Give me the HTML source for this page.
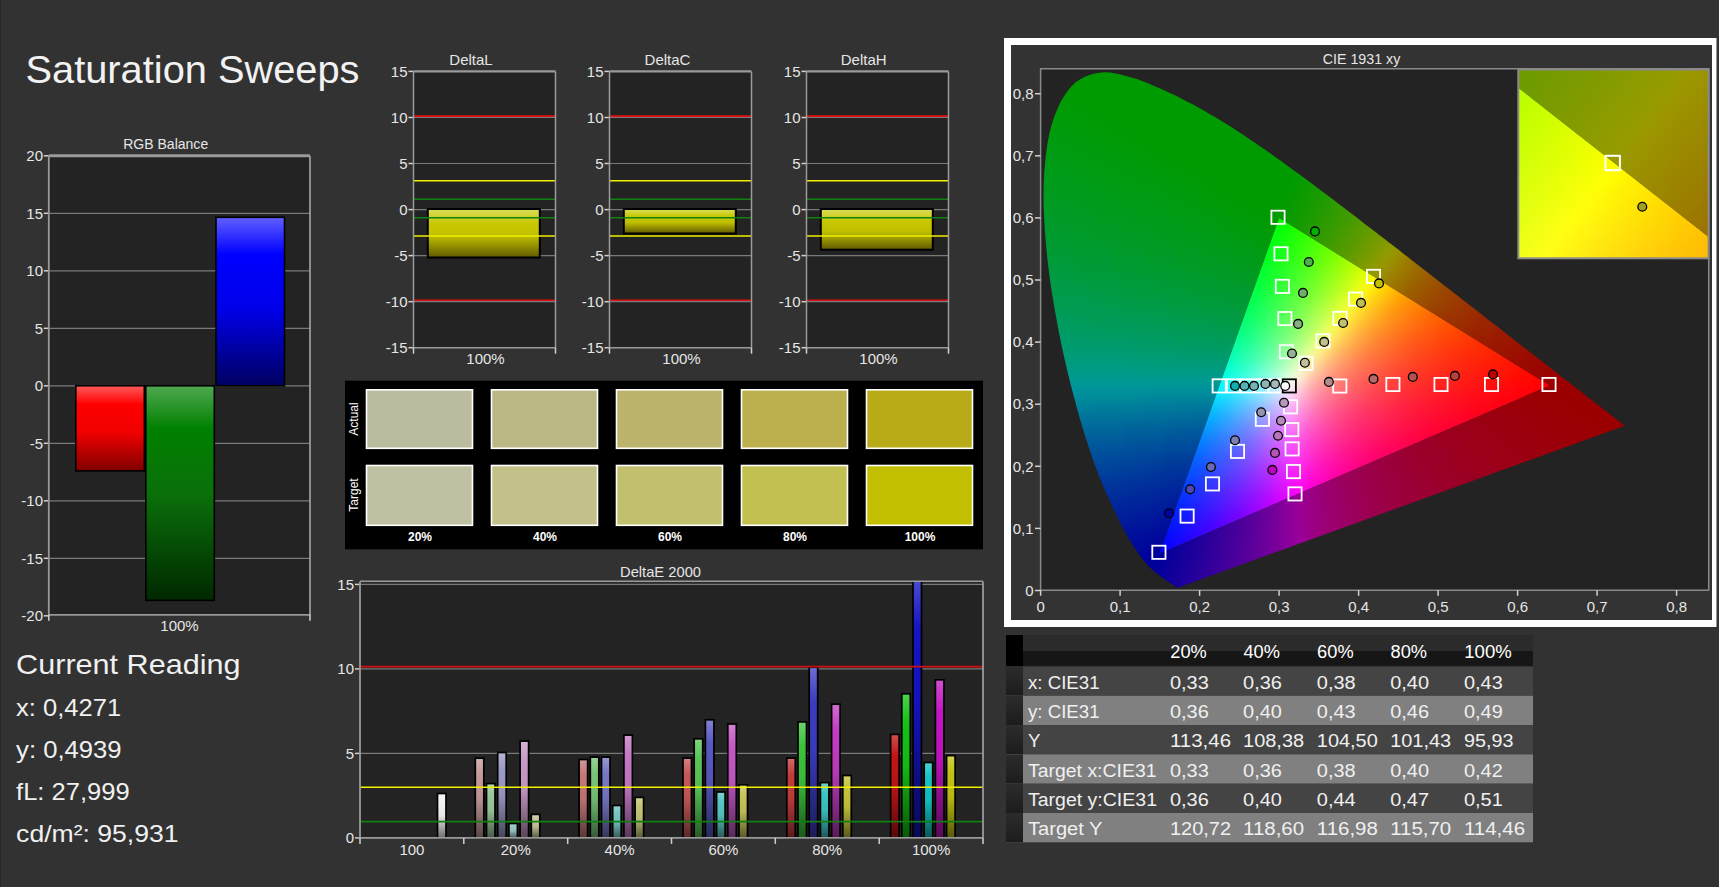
<!DOCTYPE html>
<html><head><meta charset="utf-8"><title>Saturation Sweeps</title>
<style>html,body{margin:0;padding:0;background:#323232;overflow:hidden}svg{display:block}</style></head>
<body><svg width="1719" height="887" viewBox="0 0 1719 887" font-family='"Liberation Sans", sans-serif'>
<defs><linearGradient id="gR" x1="0" y1="0" x2="0" y2="1"><stop offset="0" stop-color="#ff5a5a"/><stop offset="0.22" stop-color="#ff0000"/><stop offset="0.55" stop-color="#f00000"/><stop offset="1" stop-color="#800000"/></linearGradient><linearGradient id="gG" x1="0" y1="0" x2="0" y2="1"><stop offset="0" stop-color="#50a850"/><stop offset="0.2" stop-color="#008000"/><stop offset="0.5" stop-color="#0a700a"/><stop offset="1" stop-color="#002800"/></linearGradient><linearGradient id="gB" x1="0" y1="0" x2="0" y2="1"><stop offset="0" stop-color="#6060ff"/><stop offset="0.22" stop-color="#0000ff"/><stop offset="0.55" stop-color="#0000e8"/><stop offset="1" stop-color="#000060"/></linearGradient><linearGradient id="gLC" x1="0" y1="0" x2="0" y2="1"><stop offset="0" stop-color="#2c2c2c"/><stop offset="1" stop-color="#1c1c1c"/></linearGradient><linearGradient id="gY" x1="0" y1="0" x2="0" y2="1"><stop offset="0" stop-color="#dcdc60"/><stop offset="0.3" stop-color="#c8c800"/><stop offset="0.55" stop-color="#c0c000"/><stop offset="1" stop-color="#605800"/></linearGradient><clipPath id="deClip"><rect x="360" y="581.0" width="623" height="258.4"/></clipPath><linearGradient id="de1" x1="0" y1="0" x2="0" y2="1"><stop offset="0" stop-color="#f5f5f5"/><stop offset="0.2" stop-color="#f2f2f2"/><stop offset="0.5" stop-color="#e6e6e6"/><stop offset="1" stop-color="#6d6d6d"/></linearGradient><linearGradient id="de2" x1="0" y1="0" x2="0" y2="1"><stop offset="0" stop-color="#d4b3b3"/><stop offset="0.2" stop-color="#c69a9a"/><stop offset="0.5" stop-color="#bc9292"/><stop offset="1" stop-color="#594545"/></linearGradient><linearGradient id="de3" x1="0" y1="0" x2="0" y2="1"><stop offset="0" stop-color="#b3d4b3"/><stop offset="0.2" stop-color="#9ac69a"/><stop offset="0.5" stop-color="#92bc92"/><stop offset="1" stop-color="#455945"/></linearGradient><linearGradient id="de4" x1="0" y1="0" x2="0" y2="1"><stop offset="0" stop-color="#b3b3d4"/><stop offset="0.2" stop-color="#9a9ac6"/><stop offset="0.5" stop-color="#9292bc"/><stop offset="1" stop-color="#454559"/></linearGradient><linearGradient id="de5" x1="0" y1="0" x2="0" y2="1"><stop offset="0" stop-color="#b3d4d4"/><stop offset="0.2" stop-color="#9ac6c6"/><stop offset="0.5" stop-color="#92bcbc"/><stop offset="1" stop-color="#455959"/></linearGradient><linearGradient id="de6" x1="0" y1="0" x2="0" y2="1"><stop offset="0" stop-color="#d4b3d4"/><stop offset="0.2" stop-color="#c69ac6"/><stop offset="0.5" stop-color="#bc92bc"/><stop offset="1" stop-color="#594559"/></linearGradient><linearGradient id="de7" x1="0" y1="0" x2="0" y2="1"><stop offset="0" stop-color="#d4d4b3"/><stop offset="0.2" stop-color="#c6c69a"/><stop offset="0.5" stop-color="#bcbc92"/><stop offset="1" stop-color="#595945"/></linearGradient><linearGradient id="de8" x1="0" y1="0" x2="0" y2="1"><stop offset="0" stop-color="#d39999"/><stop offset="0.2" stop-color="#c57777"/><stop offset="0.5" stop-color="#bb7171"/><stop offset="1" stop-color="#593636"/></linearGradient><linearGradient id="de9" x1="0" y1="0" x2="0" y2="1"><stop offset="0" stop-color="#99d399"/><stop offset="0.2" stop-color="#77c577"/><stop offset="0.5" stop-color="#71bb71"/><stop offset="1" stop-color="#365936"/></linearGradient><linearGradient id="de10" x1="0" y1="0" x2="0" y2="1"><stop offset="0" stop-color="#9999d3"/><stop offset="0.2" stop-color="#7777c5"/><stop offset="0.5" stop-color="#7171bb"/><stop offset="1" stop-color="#363659"/></linearGradient><linearGradient id="de11" x1="0" y1="0" x2="0" y2="1"><stop offset="0" stop-color="#99d3d3"/><stop offset="0.2" stop-color="#77c5c5"/><stop offset="0.5" stop-color="#71bbbb"/><stop offset="1" stop-color="#365959"/></linearGradient><linearGradient id="de12" x1="0" y1="0" x2="0" y2="1"><stop offset="0" stop-color="#d399d3"/><stop offset="0.2" stop-color="#c577c5"/><stop offset="0.5" stop-color="#bb71bb"/><stop offset="1" stop-color="#593659"/></linearGradient><linearGradient id="de13" x1="0" y1="0" x2="0" y2="1"><stop offset="0" stop-color="#d3d399"/><stop offset="0.2" stop-color="#c5c577"/><stop offset="0.5" stop-color="#bbbb71"/><stop offset="1" stop-color="#595936"/></linearGradient><linearGradient id="de14" x1="0" y1="0" x2="0" y2="1"><stop offset="0" stop-color="#d38282"/><stop offset="0.2" stop-color="#c45858"/><stop offset="0.5" stop-color="#ba5454"/><stop offset="1" stop-color="#582828"/></linearGradient><linearGradient id="de15" x1="0" y1="0" x2="0" y2="1"><stop offset="0" stop-color="#82d382"/><stop offset="0.2" stop-color="#58c458"/><stop offset="0.5" stop-color="#54ba54"/><stop offset="1" stop-color="#285828"/></linearGradient><linearGradient id="de16" x1="0" y1="0" x2="0" y2="1"><stop offset="0" stop-color="#8282d3"/><stop offset="0.2" stop-color="#5858c4"/><stop offset="0.5" stop-color="#5454ba"/><stop offset="1" stop-color="#282858"/></linearGradient><linearGradient id="de17" x1="0" y1="0" x2="0" y2="1"><stop offset="0" stop-color="#82d3d3"/><stop offset="0.2" stop-color="#58c4c4"/><stop offset="0.5" stop-color="#54baba"/><stop offset="1" stop-color="#285858"/></linearGradient><linearGradient id="de18" x1="0" y1="0" x2="0" y2="1"><stop offset="0" stop-color="#d382d3"/><stop offset="0.2" stop-color="#c458c4"/><stop offset="0.5" stop-color="#ba54ba"/><stop offset="1" stop-color="#582858"/></linearGradient><linearGradient id="de19" x1="0" y1="0" x2="0" y2="1"><stop offset="0" stop-color="#d3d382"/><stop offset="0.2" stop-color="#c4c458"/><stop offset="0.5" stop-color="#baba54"/><stop offset="1" stop-color="#585828"/></linearGradient><linearGradient id="de20" x1="0" y1="0" x2="0" y2="1"><stop offset="0" stop-color="#d26d6d"/><stop offset="0.2" stop-color="#c33c3c"/><stop offset="0.5" stop-color="#b93939"/><stop offset="1" stop-color="#581b1b"/></linearGradient><linearGradient id="de21" x1="0" y1="0" x2="0" y2="1"><stop offset="0" stop-color="#6dd26d"/><stop offset="0.2" stop-color="#3cc33c"/><stop offset="0.5" stop-color="#39b939"/><stop offset="1" stop-color="#1b581b"/></linearGradient><linearGradient id="de22" x1="0" y1="0" x2="0" y2="1"><stop offset="0" stop-color="#6d6dd2"/><stop offset="0.2" stop-color="#3c3cc3"/><stop offset="0.5" stop-color="#3939b9"/><stop offset="1" stop-color="#1b1b58"/></linearGradient><linearGradient id="de23" x1="0" y1="0" x2="0" y2="1"><stop offset="0" stop-color="#6dd2d2"/><stop offset="0.2" stop-color="#3cc3c3"/><stop offset="0.5" stop-color="#39b9b9"/><stop offset="1" stop-color="#1b5858"/></linearGradient><linearGradient id="de24" x1="0" y1="0" x2="0" y2="1"><stop offset="0" stop-color="#d26dd2"/><stop offset="0.2" stop-color="#c33cc3"/><stop offset="0.5" stop-color="#b939b9"/><stop offset="1" stop-color="#581b58"/></linearGradient><linearGradient id="de25" x1="0" y1="0" x2="0" y2="1"><stop offset="0" stop-color="#d2d26d"/><stop offset="0.2" stop-color="#c3c33c"/><stop offset="0.5" stop-color="#b9b939"/><stop offset="1" stop-color="#58581b"/></linearGradient><linearGradient id="de26" x1="0" y1="0" x2="0" y2="1"><stop offset="0" stop-color="#d14f4f"/><stop offset="0.2" stop-color="#c21515"/><stop offset="0.5" stop-color="#b81313"/><stop offset="1" stop-color="#570909"/></linearGradient><linearGradient id="de27" x1="0" y1="0" x2="0" y2="1"><stop offset="0" stop-color="#4fd14f"/><stop offset="0.2" stop-color="#15c215"/><stop offset="0.5" stop-color="#13b813"/><stop offset="1" stop-color="#095709"/></linearGradient><linearGradient id="de28" x1="0" y1="0" x2="0" y2="1"><stop offset="0" stop-color="#4f4fd1"/><stop offset="0.2" stop-color="#1515c2"/><stop offset="0.5" stop-color="#1313b8"/><stop offset="1" stop-color="#090957"/></linearGradient><linearGradient id="de29" x1="0" y1="0" x2="0" y2="1"><stop offset="0" stop-color="#4fd1d1"/><stop offset="0.2" stop-color="#15c2c2"/><stop offset="0.5" stop-color="#13b8b8"/><stop offset="1" stop-color="#095757"/></linearGradient><linearGradient id="de30" x1="0" y1="0" x2="0" y2="1"><stop offset="0" stop-color="#d14fd1"/><stop offset="0.2" stop-color="#c215c2"/><stop offset="0.5" stop-color="#b813b8"/><stop offset="1" stop-color="#570957"/></linearGradient><linearGradient id="de31" x1="0" y1="0" x2="0" y2="1"><stop offset="0" stop-color="#d1d14f"/><stop offset="0.2" stop-color="#c2c215"/><stop offset="0.5" stop-color="#b8b813"/><stop offset="1" stop-color="#575709"/></linearGradient><clipPath id="hsOut"><path d="M1178.4,587.5 L1178.3,587.5 L1178.2,587.5 L1178.2,587.5 L1178.1,587.5 L1177.9,587.5 L1177.8,587.5 L1177.7,587.5 L1177.6,587.5 L1177.4,587.5 L1177.3,587.5 L1177.1,587.4 L1176.9,587.3 L1176.6,587.2 L1176.3,587.1 L1176.0,586.9 L1175.7,586.7 L1175.3,586.5 L1174.9,586.2 L1174.4,585.9 L1173.9,585.6 L1173.4,585.2 L1172.7,584.7 L1172.1,584.3 L1171.3,583.7 L1170.5,583.2 L1169.6,582.6 L1168.6,581.9 L1167.5,581.2 L1166.4,580.4 L1165.1,579.5 L1163.6,578.4 L1161.9,577.2 L1160.1,575.9 L1158.3,574.6 L1156.6,573.3 L1155.1,572.1 L1153.8,571.0 L1152.7,570.0 L1151.6,569.1 L1150.6,568.1 L1149.5,567.0 L1148.3,565.7 L1147.0,564.2 L1145.6,562.6 L1144.1,560.9 L1142.5,559.0 L1140.9,556.9 L1139.3,554.6 L1137.5,552.1 L1135.7,549.5 L1133.8,546.7 L1131.9,543.6 L1129.9,540.3 L1127.7,536.6 L1125.5,532.6 L1123.2,528.4 L1120.9,523.9 L1118.4,519.0 L1115.8,513.8 L1113.2,508.1 L1110.4,502.0 L1107.5,495.6 L1104.4,488.9 L1101.4,481.7 L1098.3,474.0 L1095.2,465.9 L1092.1,457.2 L1089.0,448.1 L1085.9,438.5 L1082.8,428.5 L1079.7,418.1 L1076.7,407.3 L1073.7,396.0 L1070.6,384.2 L1067.6,372.0 L1064.7,359.5 L1061.9,346.9 L1059.3,334.2 L1056.9,321.4 L1054.5,308.3 L1052.3,295.1 L1050.3,281.9 L1048.6,268.9 L1047.1,256.2 L1045.9,243.6 L1044.9,231.1 L1044.2,218.8 L1043.7,206.8 L1043.5,195.1 L1043.7,183.9 L1044.2,173.0 L1045.1,162.4 L1046.2,152.1 L1047.7,142.3 L1049.5,133.1 L1051.7,124.6 L1054.2,116.7 L1057.1,109.4 L1060.3,102.6 L1063.8,96.4 L1067.6,91.0 L1071.5,86.2 L1075.7,82.3 L1080.2,79.2 L1084.9,76.8 L1089.7,75.0 L1094.7,73.6 L1099.7,72.7 L1104.7,72.3 L1110.0,72.6 L1115.3,73.4 L1120.6,74.6 L1126.0,76.0 L1131.4,77.4 L1136.7,79.0 L1142.2,81.0 L1147.6,83.1 L1153.0,85.4 L1158.3,87.7 L1163.6,90.0 L1168.8,92.4 L1173.9,94.8 L1179.0,97.3 L1184.0,99.9 L1189.0,102.5 L1194.0,105.1 L1198.9,107.8 L1203.8,110.6 L1208.6,113.4 L1213.5,116.2 L1218.3,119.1 L1223.1,122.1 L1228.0,125.1 L1232.8,128.1 L1237.6,131.2 L1242.4,134.3 L1247.1,137.5 L1251.9,140.7 L1256.7,143.9 L1261.4,147.2 L1266.2,150.5 L1270.9,153.8 L1275.6,157.2 L1280.4,160.6 L1285.1,164.0 L1289.8,167.4 L1294.6,170.9 L1299.3,174.3 L1304.0,177.8 L1308.8,181.3 L1313.5,184.8 L1318.2,188.4 L1323.0,191.9 L1327.7,195.5 L1332.5,199.1 L1337.2,202.7 L1341.9,206.3 L1346.7,209.9 L1351.4,213.5 L1356.1,217.1 L1360.8,220.7 L1365.5,224.4 L1370.2,228.0 L1374.9,231.6 L1379.6,235.2 L1384.3,238.8 L1389.0,242.4 L1393.7,246.0 L1398.3,249.6 L1402.9,253.2 L1407.5,256.8 L1412.1,260.4 L1416.7,263.9 L1421.2,267.5 L1425.8,271.0 L1430.3,274.5 L1434.8,278.0 L1439.2,281.5 L1443.6,284.9 L1448.0,288.3 L1452.4,291.7 L1456.7,295.1 L1461.0,298.5 L1465.3,301.8 L1469.5,305.1 L1473.7,308.3 L1477.9,311.5 L1482.0,314.7 L1486.0,317.9 L1490.0,321.0 L1494.0,324.1 L1497.9,327.1 L1501.7,330.1 L1505.5,333.0 L1509.2,335.9 L1512.9,338.8 L1516.4,341.6 L1519.9,344.3 L1523.3,346.9 L1526.6,349.5 L1529.8,352.0 L1533.0,354.4 L1536.0,356.8 L1539.1,359.2 L1542.0,361.5 L1545.0,363.8 L1547.8,366.0 L1550.6,368.1 L1553.3,370.3 L1555.9,372.3 L1558.3,374.2 L1560.6,375.9 L1562.7,377.5 L1564.9,379.2 L1567.2,381.0 L1569.9,383.1 L1573.0,385.5 L1576.5,388.2 L1580.2,391.1 L1583.8,394.0 L1587.3,396.7 L1590.3,399.0 L1593.0,401.1 L1595.4,403.0 L1597.6,404.7 L1599.6,406.2 L1601.5,407.7 L1603.4,409.2 L1605.1,410.5 L1606.8,411.8 L1608.3,413.0 L1609.7,414.1 L1611.0,415.1 L1612.2,416.1 L1613.3,416.9 L1614.4,417.7 L1615.3,418.5 L1616.2,419.1 L1617.0,419.8 L1617.8,420.3 L1618.4,420.9 L1619.0,421.3 L1619.5,421.7 L1620.0,422.1 L1620.5,422.5 L1620.9,422.8 L1621.4,423.2 L1621.9,423.6 L1622.4,424.0 L1622.9,424.3 L1623.3,424.7 L1623.7,424.9 L1623.9,425.2 L1624.2,425.3 L1624.3,425.5 L1624.5,425.6 L1624.6,425.7 L1624.7,425.7Z M1549.4,385.6 L1279.1,217.9 L1159.8,553.2Z" clip-rule="evenodd"/></clipPath><clipPath id="triC"><path d="M1549.4,385.6 L1279.1,217.9 L1159.8,553.2Z"/></clipPath><filter id="bl" x="-5%" y="-5%" width="110%" height="110%" color-interpolation-filters="sRGB"><feGaussianBlur stdDeviation="5"/></filter><clipPath id="insU"><path d="M1518.3,69.5 H1708.6 V237 L1518.3,87.8 Z"/></clipPath><clipPath id="insL"><path d="M1518.3,87.8 L1708.6,237 V258.3 H1518.3 Z"/></clipPath></defs>
<rect x="0" y="0" width="1719" height="887" fill="#323232"/>
<rect x="0" y="0" width="1" height="887" fill="#262626"/>
<text x="25.5" y="82.6" font-size="39" textLength="334" lengthAdjust="spacingAndGlyphs" fill="#f2f2f2">Saturation Sweeps</text>
<rect x="48.8" y="155.8" width="261.2" height="460.0" fill="#232323"/>
<line x1="43.8" y1="155.8" x2="48.8" y2="155.8" stroke="#d0d0d0" stroke-width="1.5"/>
<text x="43.0" y="161.0" font-size="15" text-anchor="end" fill="#e6e6e6">20</text>
<line x1="48.8" y1="213.3" x2="310.0" y2="213.3" stroke="#7a7a7a" stroke-width="1.2"/>
<line x1="43.8" y1="213.3" x2="48.8" y2="213.3" stroke="#d0d0d0" stroke-width="1.5"/>
<text x="43.0" y="218.5" font-size="15" text-anchor="end" fill="#e6e6e6">15</text>
<line x1="48.8" y1="270.8" x2="310.0" y2="270.8" stroke="#7a7a7a" stroke-width="1.2"/>
<line x1="43.8" y1="270.8" x2="48.8" y2="270.8" stroke="#d0d0d0" stroke-width="1.5"/>
<text x="43.0" y="276.0" font-size="15" text-anchor="end" fill="#e6e6e6">10</text>
<line x1="48.8" y1="328.3" x2="310.0" y2="328.3" stroke="#7a7a7a" stroke-width="1.2"/>
<line x1="43.8" y1="328.3" x2="48.8" y2="328.3" stroke="#d0d0d0" stroke-width="1.5"/>
<text x="43.0" y="333.5" font-size="15" text-anchor="end" fill="#e6e6e6">5</text>
<line x1="48.8" y1="385.8" x2="310.0" y2="385.8" stroke="#7a7a7a" stroke-width="1.2"/>
<line x1="43.8" y1="385.8" x2="48.8" y2="385.8" stroke="#d0d0d0" stroke-width="1.5"/>
<text x="43.0" y="391.0" font-size="15" text-anchor="end" fill="#e6e6e6">0</text>
<line x1="48.8" y1="443.3" x2="310.0" y2="443.3" stroke="#7a7a7a" stroke-width="1.2"/>
<line x1="43.8" y1="443.3" x2="48.8" y2="443.3" stroke="#d0d0d0" stroke-width="1.5"/>
<text x="43.0" y="448.5" font-size="15" text-anchor="end" fill="#e6e6e6">-5</text>
<line x1="48.8" y1="500.8" x2="310.0" y2="500.8" stroke="#7a7a7a" stroke-width="1.2"/>
<line x1="43.8" y1="500.8" x2="48.8" y2="500.8" stroke="#d0d0d0" stroke-width="1.5"/>
<text x="43.0" y="506.0" font-size="15" text-anchor="end" fill="#e6e6e6">-10</text>
<line x1="48.8" y1="558.3" x2="310.0" y2="558.3" stroke="#7a7a7a" stroke-width="1.2"/>
<line x1="43.8" y1="558.3" x2="48.8" y2="558.3" stroke="#d0d0d0" stroke-width="1.5"/>
<text x="43.0" y="563.5" font-size="15" text-anchor="end" fill="#e6e6e6">-15</text>
<line x1="43.8" y1="615.8" x2="48.8" y2="615.8" stroke="#d0d0d0" stroke-width="1.5"/>
<text x="43.0" y="621.0" font-size="15" text-anchor="end" fill="#e6e6e6">-20</text>
<rect x="75.8" y="385.8" width="68.5" height="85.1" fill="url(#gR)" stroke="#000" stroke-width="1.6"/>
<rect x="145.8" y="385.8" width="68.5" height="214.5" fill="url(#gG)" stroke="#000" stroke-width="1.6"/>
<rect x="216.0" y="217.3" width="68.5" height="168.5" fill="url(#gB)" stroke="#000" stroke-width="1.6"/>
<line x1="48.8" y1="155.8" x2="310.0" y2="155.8" stroke="#9a9a9a" stroke-width="3"/>
<line x1="48.8" y1="155.8" x2="48.8" y2="615.8" stroke="#9a9a9a" stroke-width="1.8"/>
<line x1="310.0" y1="155.8" x2="310.0" y2="615.8" stroke="#9a9a9a" stroke-width="1.8"/>
<line x1="48.8" y1="614.8" x2="310.0" y2="614.8" stroke="#9a9a9a" stroke-width="1.8"/>
<line x1="48.8" y1="614.8" x2="48.8" y2="620.8" stroke="#d0d0d0" stroke-width="1.5"/>
<line x1="310.0" y1="614.8" x2="310.0" y2="620.8" stroke="#d0d0d0" stroke-width="1.5"/>
<text x="165.7" y="148.8" font-size="15" text-anchor="middle" textLength="85" lengthAdjust="spacingAndGlyphs" fill="#e6e6e6">RGB Balance</text>
<text x="179.5" y="631.0" font-size="15" text-anchor="middle" fill="#e6e6e6">100%</text>
<rect x="413.5" y="71.4" width="142.0" height="276.3" fill="#232323"/>
<line x1="408.5" y1="71.4" x2="413.5" y2="71.4" stroke="#d0d0d0" stroke-width="1.5"/>
<text x="407.5" y="76.6" font-size="15" text-anchor="end" fill="#e6e6e6">15</text>
<line x1="413.5" y1="117.5" x2="555.5" y2="117.5" stroke="#7a7a7a" stroke-width="1.2"/>
<line x1="408.5" y1="117.5" x2="413.5" y2="117.5" stroke="#d0d0d0" stroke-width="1.5"/>
<text x="407.5" y="122.7" font-size="15" text-anchor="end" fill="#e6e6e6">10</text>
<line x1="413.5" y1="163.5" x2="555.5" y2="163.5" stroke="#7a7a7a" stroke-width="1.2"/>
<line x1="408.5" y1="163.5" x2="413.5" y2="163.5" stroke="#d0d0d0" stroke-width="1.5"/>
<text x="407.5" y="168.7" font-size="15" text-anchor="end" fill="#e6e6e6">5</text>
<line x1="413.5" y1="209.6" x2="555.5" y2="209.6" stroke="#7a7a7a" stroke-width="1.2"/>
<line x1="408.5" y1="209.6" x2="413.5" y2="209.6" stroke="#d0d0d0" stroke-width="1.5"/>
<text x="407.5" y="214.8" font-size="15" text-anchor="end" fill="#e6e6e6">0</text>
<line x1="413.5" y1="255.6" x2="555.5" y2="255.6" stroke="#7a7a7a" stroke-width="1.2"/>
<line x1="408.5" y1="255.6" x2="413.5" y2="255.6" stroke="#d0d0d0" stroke-width="1.5"/>
<text x="407.5" y="260.8" font-size="15" text-anchor="end" fill="#e6e6e6">-5</text>
<line x1="413.5" y1="301.7" x2="555.5" y2="301.7" stroke="#7a7a7a" stroke-width="1.2"/>
<line x1="408.5" y1="301.7" x2="413.5" y2="301.7" stroke="#d0d0d0" stroke-width="1.5"/>
<text x="407.5" y="306.9" font-size="15" text-anchor="end" fill="#e6e6e6">-10</text>
<line x1="408.5" y1="347.7" x2="413.5" y2="347.7" stroke="#d0d0d0" stroke-width="1.5"/>
<text x="407.5" y="352.9" font-size="15" text-anchor="end" fill="#e6e6e6">-15</text>
<rect x="427.8" y="209.0" width="112" height="48.5" fill="url(#gY)" stroke="#000" stroke-width="2"/>
<line x1="413.5" y1="116.1" x2="555.5" y2="116.1" stroke="#e01010" stroke-width="1.6"/>
<line x1="413.5" y1="300.3" x2="555.5" y2="300.3" stroke="#e01010" stroke-width="1.6"/>
<line x1="413.5" y1="180.8" x2="555.5" y2="180.8" stroke="#f0f000" stroke-width="1.5"/>
<line x1="413.5" y1="236.1" x2="555.5" y2="236.1" stroke="#f0f000" stroke-width="1.5"/>
<line x1="413.5" y1="199.2" x2="555.5" y2="199.2" stroke="#108010" stroke-width="1.6"/>
<line x1="413.5" y1="217.7" x2="555.5" y2="217.7" stroke="#108010" stroke-width="1.6"/>
<line x1="413.5" y1="71.4" x2="555.5" y2="71.4" stroke="#9a9a9a" stroke-width="2.3"/>
<line x1="413.5" y1="71.4" x2="413.5" y2="347.7" stroke="#9a9a9a" stroke-width="1.5"/>
<line x1="555.5" y1="71.4" x2="555.5" y2="347.7" stroke="#9a9a9a" stroke-width="1.5"/>
<line x1="413.5" y1="347.7" x2="555.5" y2="347.7" stroke="#9a9a9a" stroke-width="1.5"/>
<line x1="413.5" y1="347.7" x2="413.5" y2="353.7" stroke="#d0d0d0" stroke-width="1.5"/>
<line x1="555.5" y1="347.7" x2="555.5" y2="353.7" stroke="#d0d0d0" stroke-width="1.5"/>
<text x="471.0" y="64.5" font-size="15" text-anchor="middle" fill="#e6e6e6">DeltaL</text>
<text x="485.5" y="363.5" font-size="15" text-anchor="middle" fill="#e6e6e6">100%</text>
<rect x="609.5" y="71.4" width="142.0" height="276.3" fill="#232323"/>
<line x1="604.5" y1="71.4" x2="609.5" y2="71.4" stroke="#d0d0d0" stroke-width="1.5"/>
<text x="603.5" y="76.6" font-size="15" text-anchor="end" fill="#e6e6e6">15</text>
<line x1="609.5" y1="117.5" x2="751.5" y2="117.5" stroke="#7a7a7a" stroke-width="1.2"/>
<line x1="604.5" y1="117.5" x2="609.5" y2="117.5" stroke="#d0d0d0" stroke-width="1.5"/>
<text x="603.5" y="122.7" font-size="15" text-anchor="end" fill="#e6e6e6">10</text>
<line x1="609.5" y1="163.5" x2="751.5" y2="163.5" stroke="#7a7a7a" stroke-width="1.2"/>
<line x1="604.5" y1="163.5" x2="609.5" y2="163.5" stroke="#d0d0d0" stroke-width="1.5"/>
<text x="603.5" y="168.7" font-size="15" text-anchor="end" fill="#e6e6e6">5</text>
<line x1="609.5" y1="209.6" x2="751.5" y2="209.6" stroke="#7a7a7a" stroke-width="1.2"/>
<line x1="604.5" y1="209.6" x2="609.5" y2="209.6" stroke="#d0d0d0" stroke-width="1.5"/>
<text x="603.5" y="214.8" font-size="15" text-anchor="end" fill="#e6e6e6">0</text>
<line x1="609.5" y1="255.6" x2="751.5" y2="255.6" stroke="#7a7a7a" stroke-width="1.2"/>
<line x1="604.5" y1="255.6" x2="609.5" y2="255.6" stroke="#d0d0d0" stroke-width="1.5"/>
<text x="603.5" y="260.8" font-size="15" text-anchor="end" fill="#e6e6e6">-5</text>
<line x1="609.5" y1="301.7" x2="751.5" y2="301.7" stroke="#7a7a7a" stroke-width="1.2"/>
<line x1="604.5" y1="301.7" x2="609.5" y2="301.7" stroke="#d0d0d0" stroke-width="1.5"/>
<text x="603.5" y="306.9" font-size="15" text-anchor="end" fill="#e6e6e6">-10</text>
<line x1="604.5" y1="347.7" x2="609.5" y2="347.7" stroke="#d0d0d0" stroke-width="1.5"/>
<text x="603.5" y="352.9" font-size="15" text-anchor="end" fill="#e6e6e6">-15</text>
<rect x="623.8" y="209.0" width="112" height="24.5" fill="url(#gY)" stroke="#000" stroke-width="2"/>
<line x1="609.5" y1="116.1" x2="751.5" y2="116.1" stroke="#e01010" stroke-width="1.6"/>
<line x1="609.5" y1="300.3" x2="751.5" y2="300.3" stroke="#e01010" stroke-width="1.6"/>
<line x1="609.5" y1="180.8" x2="751.5" y2="180.8" stroke="#f0f000" stroke-width="1.5"/>
<line x1="609.5" y1="236.1" x2="751.5" y2="236.1" stroke="#f0f000" stroke-width="1.5"/>
<line x1="609.5" y1="199.2" x2="751.5" y2="199.2" stroke="#108010" stroke-width="1.6"/>
<line x1="609.5" y1="217.7" x2="751.5" y2="217.7" stroke="#108010" stroke-width="1.6"/>
<line x1="609.5" y1="71.4" x2="751.5" y2="71.4" stroke="#9a9a9a" stroke-width="2.3"/>
<line x1="609.5" y1="71.4" x2="609.5" y2="347.7" stroke="#9a9a9a" stroke-width="1.5"/>
<line x1="751.5" y1="71.4" x2="751.5" y2="347.7" stroke="#9a9a9a" stroke-width="1.5"/>
<line x1="609.5" y1="347.7" x2="751.5" y2="347.7" stroke="#9a9a9a" stroke-width="1.5"/>
<line x1="609.5" y1="347.7" x2="609.5" y2="353.7" stroke="#d0d0d0" stroke-width="1.5"/>
<line x1="751.5" y1="347.7" x2="751.5" y2="353.7" stroke="#d0d0d0" stroke-width="1.5"/>
<text x="667.5" y="64.5" font-size="15" text-anchor="middle" fill="#e6e6e6">DeltaC</text>
<text x="681.5" y="363.5" font-size="15" text-anchor="middle" fill="#e6e6e6">100%</text>
<rect x="806.5" y="71.4" width="142.0" height="276.3" fill="#232323"/>
<line x1="801.5" y1="71.4" x2="806.5" y2="71.4" stroke="#d0d0d0" stroke-width="1.5"/>
<text x="800.5" y="76.6" font-size="15" text-anchor="end" fill="#e6e6e6">15</text>
<line x1="806.5" y1="117.5" x2="948.5" y2="117.5" stroke="#7a7a7a" stroke-width="1.2"/>
<line x1="801.5" y1="117.5" x2="806.5" y2="117.5" stroke="#d0d0d0" stroke-width="1.5"/>
<text x="800.5" y="122.7" font-size="15" text-anchor="end" fill="#e6e6e6">10</text>
<line x1="806.5" y1="163.5" x2="948.5" y2="163.5" stroke="#7a7a7a" stroke-width="1.2"/>
<line x1="801.5" y1="163.5" x2="806.5" y2="163.5" stroke="#d0d0d0" stroke-width="1.5"/>
<text x="800.5" y="168.7" font-size="15" text-anchor="end" fill="#e6e6e6">5</text>
<line x1="806.5" y1="209.6" x2="948.5" y2="209.6" stroke="#7a7a7a" stroke-width="1.2"/>
<line x1="801.5" y1="209.6" x2="806.5" y2="209.6" stroke="#d0d0d0" stroke-width="1.5"/>
<text x="800.5" y="214.8" font-size="15" text-anchor="end" fill="#e6e6e6">0</text>
<line x1="806.5" y1="255.6" x2="948.5" y2="255.6" stroke="#7a7a7a" stroke-width="1.2"/>
<line x1="801.5" y1="255.6" x2="806.5" y2="255.6" stroke="#d0d0d0" stroke-width="1.5"/>
<text x="800.5" y="260.8" font-size="15" text-anchor="end" fill="#e6e6e6">-5</text>
<line x1="806.5" y1="301.7" x2="948.5" y2="301.7" stroke="#7a7a7a" stroke-width="1.2"/>
<line x1="801.5" y1="301.7" x2="806.5" y2="301.7" stroke="#d0d0d0" stroke-width="1.5"/>
<text x="800.5" y="306.9" font-size="15" text-anchor="end" fill="#e6e6e6">-10</text>
<line x1="801.5" y1="347.7" x2="806.5" y2="347.7" stroke="#d0d0d0" stroke-width="1.5"/>
<text x="800.5" y="352.9" font-size="15" text-anchor="end" fill="#e6e6e6">-15</text>
<rect x="820.8" y="209.0" width="112" height="40.7" fill="url(#gY)" stroke="#000" stroke-width="2"/>
<line x1="806.5" y1="116.1" x2="948.5" y2="116.1" stroke="#e01010" stroke-width="1.6"/>
<line x1="806.5" y1="300.3" x2="948.5" y2="300.3" stroke="#e01010" stroke-width="1.6"/>
<line x1="806.5" y1="180.8" x2="948.5" y2="180.8" stroke="#f0f000" stroke-width="1.5"/>
<line x1="806.5" y1="236.1" x2="948.5" y2="236.1" stroke="#f0f000" stroke-width="1.5"/>
<line x1="806.5" y1="199.2" x2="948.5" y2="199.2" stroke="#108010" stroke-width="1.6"/>
<line x1="806.5" y1="217.7" x2="948.5" y2="217.7" stroke="#108010" stroke-width="1.6"/>
<line x1="806.5" y1="71.4" x2="948.5" y2="71.4" stroke="#9a9a9a" stroke-width="2.3"/>
<line x1="806.5" y1="71.4" x2="806.5" y2="347.7" stroke="#9a9a9a" stroke-width="1.5"/>
<line x1="948.5" y1="71.4" x2="948.5" y2="347.7" stroke="#9a9a9a" stroke-width="1.5"/>
<line x1="806.5" y1="347.7" x2="948.5" y2="347.7" stroke="#9a9a9a" stroke-width="1.5"/>
<line x1="806.5" y1="347.7" x2="806.5" y2="353.7" stroke="#d0d0d0" stroke-width="1.5"/>
<line x1="948.5" y1="347.7" x2="948.5" y2="353.7" stroke="#d0d0d0" stroke-width="1.5"/>
<text x="863.7" y="64.5" font-size="15" text-anchor="middle" fill="#e6e6e6">DeltaH</text>
<text x="878.5" y="363.5" font-size="15" text-anchor="middle" fill="#e6e6e6">100%</text>
<rect x="345.0" y="380.7" width="638.0" height="168.7" fill="#000"/>
<rect x="366.5" y="389.8" width="106" height="58.5" fill="#bbbb9f" stroke="#fff" stroke-width="1.6"/>
<rect x="366.5" y="465.5" width="106" height="59.8" fill="#c0c0a3" stroke="#fff" stroke-width="1.6"/>
<text x="420.0" y="541.0" font-size="12" text-anchor="middle" font-weight="bold" fill="#fff">20%</text>
<rect x="491.5" y="389.8" width="106" height="58.5" fill="#bbb886" stroke="#fff" stroke-width="1.6"/>
<rect x="491.5" y="465.5" width="106" height="59.8" fill="#c3c189" stroke="#fff" stroke-width="1.6"/>
<text x="545.0" y="541.0" font-size="12" text-anchor="middle" font-weight="bold" fill="#fff">40%</text>
<rect x="616.5" y="389.8" width="106" height="58.5" fill="#bcb46c" stroke="#fff" stroke-width="1.6"/>
<rect x="616.5" y="465.5" width="106" height="59.8" fill="#c2bf6e" stroke="#fff" stroke-width="1.6"/>
<text x="670.0" y="541.0" font-size="12" text-anchor="middle" font-weight="bold" fill="#fff">60%</text>
<rect x="741.5" y="389.8" width="106" height="58.5" fill="#bcb04e" stroke="#fff" stroke-width="1.6"/>
<rect x="741.5" y="465.5" width="106" height="59.8" fill="#c2c050" stroke="#fff" stroke-width="1.6"/>
<text x="795.0" y="541.0" font-size="12" text-anchor="middle" font-weight="bold" fill="#fff">80%</text>
<rect x="866.5" y="389.8" width="106" height="58.5" fill="#b8ab17" stroke="#fff" stroke-width="1.6"/>
<rect x="866.5" y="465.5" width="106" height="59.8" fill="#c2bf00" stroke="#fff" stroke-width="1.6"/>
<text x="920.0" y="541.0" font-size="12" text-anchor="middle" font-weight="bold" fill="#fff">100%</text>
<text transform="translate(358.3,419) rotate(-90)" font-size="12" text-anchor="middle" fill="#fff">Actual</text>
<text transform="translate(358.3,495) rotate(-90)" font-size="12" text-anchor="middle" fill="#fff">Target</text>
<rect x="360.0" y="582.5" width="623.0" height="255.4" fill="#232323"/>
<line x1="360.0" y1="584.4" x2="983.0" y2="584.4" stroke="#7a7a7a" stroke-width="1.2"/>
<line x1="355.0" y1="584.4" x2="360.0" y2="584.4" stroke="#d0d0d0" stroke-width="1.5"/>
<text x="354.0" y="589.6" font-size="15" text-anchor="end" fill="#e6e6e6">15</text>
<line x1="360.0" y1="668.9" x2="983.0" y2="668.9" stroke="#7a7a7a" stroke-width="1.2"/>
<line x1="355.0" y1="668.9" x2="360.0" y2="668.9" stroke="#d0d0d0" stroke-width="1.5"/>
<text x="354.0" y="674.1" font-size="15" text-anchor="end" fill="#e6e6e6">10</text>
<line x1="360.0" y1="753.4" x2="983.0" y2="753.4" stroke="#7a7a7a" stroke-width="1.2"/>
<line x1="355.0" y1="753.4" x2="360.0" y2="753.4" stroke="#d0d0d0" stroke-width="1.5"/>
<text x="354.0" y="758.6" font-size="15" text-anchor="end" fill="#e6e6e6">5</text>
<line x1="355.0" y1="837.9" x2="360.0" y2="837.9" stroke="#d0d0d0" stroke-width="1.5"/>
<text x="354.0" y="843.1" font-size="15" text-anchor="end" fill="#e6e6e6">0</text>
<rect clip-path="url(#deClip)"  x="437.5" y="793.5" width="8.5" height="44.4" fill="url(#de1)" stroke="#000" stroke-width="1.7"/>
<rect clip-path="url(#deClip)"  x="475.3" y="758.2" width="8.5" height="79.7" fill="url(#de2)" stroke="#000" stroke-width="1.7"/>
<rect clip-path="url(#deClip)"  x="486.5" y="783.6" width="8.5" height="54.3" fill="url(#de3)" stroke="#000" stroke-width="1.7"/>
<rect clip-path="url(#deClip)"  x="497.7" y="752.5" width="8.5" height="85.4" fill="url(#de4)" stroke="#000" stroke-width="1.7"/>
<rect clip-path="url(#deClip)"  x="508.9" y="823.5" width="8.5" height="14.4" fill="url(#de5)" stroke="#000" stroke-width="1.7"/>
<rect clip-path="url(#deClip)"  x="520.1" y="741.1" width="8.5" height="96.8" fill="url(#de6)" stroke="#000" stroke-width="1.7"/>
<rect clip-path="url(#deClip)"  x="531.3" y="814.4" width="8.5" height="23.5" fill="url(#de7)" stroke="#000" stroke-width="1.7"/>
<rect clip-path="url(#deClip)"  x="579.1" y="759.5" width="8.5" height="78.4" fill="url(#de8)" stroke="#000" stroke-width="1.7"/>
<rect clip-path="url(#deClip)"  x="590.3" y="757.1" width="8.5" height="80.8" fill="url(#de9)" stroke="#000" stroke-width="1.7"/>
<rect clip-path="url(#deClip)"  x="601.5" y="757.1" width="8.5" height="80.8" fill="url(#de10)" stroke="#000" stroke-width="1.7"/>
<rect clip-path="url(#deClip)"  x="612.7" y="805.5" width="8.5" height="32.4" fill="url(#de11)" stroke="#000" stroke-width="1.7"/>
<rect clip-path="url(#deClip)"  x="623.9" y="735.1" width="8.5" height="102.8" fill="url(#de12)" stroke="#000" stroke-width="1.7"/>
<rect clip-path="url(#deClip)"  x="635.1" y="797.4" width="8.5" height="40.5" fill="url(#de13)" stroke="#000" stroke-width="1.7"/>
<rect clip-path="url(#deClip)"  x="683.0" y="758.1" width="8.5" height="79.8" fill="url(#de14)" stroke="#000" stroke-width="1.7"/>
<rect clip-path="url(#deClip)"  x="694.2" y="738.8" width="8.5" height="99.2" fill="url(#de15)" stroke="#000" stroke-width="1.7"/>
<rect clip-path="url(#deClip)"  x="705.4" y="719.8" width="8.5" height="118.2" fill="url(#de16)" stroke="#000" stroke-width="1.7"/>
<rect clip-path="url(#deClip)"  x="716.6" y="792.0" width="8.5" height="45.9" fill="url(#de17)" stroke="#000" stroke-width="1.7"/>
<rect clip-path="url(#deClip)"  x="727.8" y="724.0" width="8.5" height="113.9" fill="url(#de18)" stroke="#000" stroke-width="1.7"/>
<rect clip-path="url(#deClip)"  x="739.0" y="784.8" width="8.5" height="53.1" fill="url(#de19)" stroke="#000" stroke-width="1.7"/>
<rect clip-path="url(#deClip)"  x="786.8" y="758.1" width="8.5" height="79.8" fill="url(#de20)" stroke="#000" stroke-width="1.7"/>
<rect clip-path="url(#deClip)"  x="798.0" y="721.9" width="8.5" height="116.0" fill="url(#de21)" stroke="#000" stroke-width="1.7"/>
<rect clip-path="url(#deClip)"  x="809.2" y="667.2" width="8.5" height="170.7" fill="url(#de22)" stroke="#000" stroke-width="1.7"/>
<rect clip-path="url(#deClip)"  x="820.4" y="782.6" width="8.5" height="55.3" fill="url(#de23)" stroke="#000" stroke-width="1.7"/>
<rect clip-path="url(#deClip)"  x="831.6" y="704.2" width="8.5" height="133.7" fill="url(#de24)" stroke="#000" stroke-width="1.7"/>
<rect clip-path="url(#deClip)"  x="842.8" y="775.5" width="8.5" height="62.4" fill="url(#de25)" stroke="#000" stroke-width="1.7"/>
<rect clip-path="url(#deClip)"  x="890.6" y="734.4" width="8.5" height="103.5" fill="url(#de26)" stroke="#000" stroke-width="1.7"/>
<rect clip-path="url(#deClip)"  x="901.8" y="693.8" width="8.5" height="144.2" fill="url(#de27)" stroke="#000" stroke-width="1.7"/>
<rect clip-path="url(#deClip)"  x="913.0" y="575.9" width="8.5" height="262.0" fill="url(#de28)" stroke="#000" stroke-width="1.7"/>
<rect clip-path="url(#deClip)"  x="924.2" y="762.5" width="8.5" height="75.4" fill="url(#de29)" stroke="#000" stroke-width="1.7"/>
<rect clip-path="url(#deClip)"  x="935.4" y="679.8" width="8.5" height="158.2" fill="url(#de30)" stroke="#000" stroke-width="1.7"/>
<rect clip-path="url(#deClip)"  x="946.6" y="755.6" width="8.5" height="82.3" fill="url(#de31)" stroke="#000" stroke-width="1.7"/>
<line x1="360.0" y1="666.7" x2="983.0" y2="666.7" stroke="#d01010" stroke-width="1.8"/>
<line x1="360.0" y1="787.2" x2="983.0" y2="787.2" stroke="#f0f000" stroke-width="1.5"/>
<line x1="360.0" y1="821.6" x2="983.0" y2="821.6" stroke="#108010" stroke-width="1.8"/>
<line x1="360.0" y1="581.3" x2="983.0" y2="581.3" stroke="#9a9a9a" stroke-width="1.5"/>
<line x1="360.0" y1="581.5" x2="360.0" y2="837.9" stroke="#9a9a9a" stroke-width="1.8"/>
<line x1="983.0" y1="581.5" x2="983.0" y2="837.9" stroke="#9a9a9a" stroke-width="1.8"/>
<line x1="360.0" y1="837.9" x2="983.0" y2="837.9" stroke="#9a9a9a" stroke-width="1.8"/>
<line x1="360.0" y1="837.9" x2="360.0" y2="843.9" stroke="#d0d0d0" stroke-width="1.5"/>
<line x1="463.8" y1="837.9" x2="463.8" y2="843.9" stroke="#d0d0d0" stroke-width="1.5"/>
<line x1="567.7" y1="837.9" x2="567.7" y2="843.9" stroke="#d0d0d0" stroke-width="1.5"/>
<line x1="671.5" y1="837.9" x2="671.5" y2="843.9" stroke="#d0d0d0" stroke-width="1.5"/>
<line x1="775.3" y1="837.9" x2="775.3" y2="843.9" stroke="#d0d0d0" stroke-width="1.5"/>
<line x1="879.2" y1="837.9" x2="879.2" y2="843.9" stroke="#d0d0d0" stroke-width="1.5"/>
<line x1="983.0" y1="837.9" x2="983.0" y2="843.9" stroke="#d0d0d0" stroke-width="1.5"/>
<text x="411.9" y="855.0" font-size="15" text-anchor="middle" fill="#e6e6e6">100</text>
<text x="515.8" y="855.0" font-size="15" text-anchor="middle" fill="#e6e6e6">20%</text>
<text x="619.6" y="855.0" font-size="15" text-anchor="middle" fill="#e6e6e6">40%</text>
<text x="723.4" y="855.0" font-size="15" text-anchor="middle" fill="#e6e6e6">60%</text>
<text x="827.2" y="855.0" font-size="15" text-anchor="middle" fill="#e6e6e6">80%</text>
<text x="931.1" y="855.0" font-size="15" text-anchor="middle" fill="#e6e6e6">100%</text>
<text x="660.5" y="576.9" font-size="15" text-anchor="middle" textLength="81" lengthAdjust="spacingAndGlyphs" fill="#e6e6e6">DeltaE 2000</text>
<rect x="1004" y="38" width="712.5" height="589" fill="#ffffff"/><rect x="1011" y="45" width="701" height="575" fill="#333333"/><rect x="1040.6" y="68.8" width="668" height="521.5" fill="#232323"/><text x="1361.5" y="64" font-size="15" text-anchor="middle" textLength="77.7" lengthAdjust="spacingAndGlyphs" fill="#e6e6e6">CIE 1931 xy</text><g clip-path="url(#hsOut)"><g filter="url(#bl)"><path fill="#009b00" d="M1064 52h90v10h-90zM1054 62h120v10h-120zM1044 72h150v10h-150zM1054 82h160v10h-160zM1064 92h170v10h-170zM1084 102h160v10h-160zM1104 112h160v10h-160zM1114 122h160v10h-160zM1134 132h160v10h-160zM1154 142h150v10h-150zM1164 152h140v10h-140zM1184 162h120v10h-120zM1204 172h90v10h-90zM1214 182h80v10h-80zM1234 192h60v10h-60zM1254 202h30v10h-30zM1264 212h20v10h-20z"/><path fill="#009b05" d="M1044 82h10v10h-10zM1034 92h30v10h-30zM1044 102h40v10h-40zM1064 112h40v10h-40zM1084 122h30v10h-30zM1094 132h40v10h-40zM1114 142h40v10h-40zM1134 152h30v10h-30zM1154 162h30v10h-30zM1174 172h30v10h-30zM1194 182h20v10h-20zM1204 192h30v10h-30zM1224 202h30v10h-30zM1244 212h20v10h-20zM1264 222h20v10h-20z"/><path fill="#009b0a" d="M1034 102h10v10h-10zM1024 112h40v10h-40zM1044 122h40v10h-40zM1064 132h30v10h-30zM1084 142h30v10h-30zM1104 152h30v10h-30zM1124 162h30v10h-30zM1144 172h30v10h-30zM1164 182h30v10h-30zM1184 192h20v10h-20zM1204 202h20v10h-20zM1224 212h20v10h-20zM1234 222h30v10h-30zM1254 232h20v10h-20z"/><path fill="#009b0f" d="M1024 122h20v10h-20zM1024 132h40v10h-40zM1044 142h40v10h-40zM1064 152h40v10h-40zM1084 162h40v10h-40zM1104 172h40v10h-40zM1124 182h40v10h-40zM1154 192h30v10h-30zM1174 202h30v10h-30zM1194 212h30v10h-30zM1214 222h20v10h-20zM1234 232h20v10h-20zM1254 242h20v10h-20z"/><path fill="#009b14" d="M1024 142h20v10h-20zM1024 152h40v10h-40zM1044 162h40v10h-40zM1074 172h30v10h-30zM1094 182h30v10h-30zM1114 192h40v10h-40zM1144 202h30v10h-30zM1164 212h30v10h-30zM1184 222h30v10h-30zM1214 232h20v10h-20zM1234 242h20v10h-20zM1254 252h10v10h-10z"/><path fill="#059b00" d="M1304 152h10v10h-10zM1294 172h10v10h-10zM1294 182h10v10h-10zM1284 202h10v10h-10z"/><path fill="#009b19" d="M1024 162h20v10h-20zM1034 172h40v10h-40zM1054 182h40v10h-40zM1084 192h30v10h-30zM1104 202h40v10h-40zM1134 212h30v10h-30zM1154 222h30v10h-30zM1184 232h30v10h-30zM1204 242h30v10h-30zM1234 252h20v10h-20zM1254 262h10v10h-10z"/><path fill="#0a9b00" d="M1304 162h10v10h-10zM1304 172h10v10h-10zM1294 192h10v10h-10zM1284 212h10v10h-10zM1284 222h10v10h-10z"/><path fill="#0f9b00" d="M1314 162h10v10h-10zM1304 182h10v10h-10zM1294 202h10v10h-10zM1294 212h10v10h-10z"/><path fill="#199b00" d="M1324 162h10v10h-10zM1314 182h10v10h-10zM1314 192h10v10h-10zM1304 212h10v10h-10z"/><path fill="#009b1e" d="M1024 172h10v10h-10zM1024 182h30v10h-30zM1044 192h40v10h-40zM1074 202h30v10h-30zM1094 212h40v10h-40zM1124 222h30v10h-30zM1154 232h30v10h-30zM1174 242h30v10h-30zM1204 252h30v10h-30zM1234 262h20v10h-20z"/><path fill="#149b00" d="M1314 172h10v10h-10zM1304 192h10v10h-10zM1304 202h10v10h-10zM1294 222h10v10h-10z"/><path fill="#1e9b00" d="M1324 172h10v10h-10zM1324 182h10v10h-10zM1314 202h10v10h-10zM1304 222h10v10h-10z"/><path fill="#239b00" d="M1334 172h10v10h-10zM1324 192h10v10h-10zM1314 212h10v10h-10zM1304 232h10v10h-10z"/><path fill="#289b00" d="M1334 182h10v10h-10zM1324 202h10v10h-10zM1314 222h10v10h-10z"/><path fill="#329b00" d="M1344 182h10v10h-10zM1334 202h10v10h-10zM1324 222h10v10h-10zM1314 242h10v10h-10z"/><path fill="#009b23" d="M1024 192h20v10h-20zM1034 202h40v10h-40zM1064 212h30v10h-30zM1094 222h30v10h-30zM1124 232h30v10h-30zM1144 242h30v10h-30zM1174 252h30v10h-30zM1204 262h30v10h-30zM1234 272h30v10h-30z"/><path fill="#2d9b00" d="M1334 192h10v10h-10zM1324 212h10v10h-10zM1314 232h10v10h-10z"/><path fill="#379b00" d="M1344 192h10v10h-10zM1334 212h10v10h-10zM1324 232h10v10h-10z"/><path fill="#419b00" d="M1354 192h10v10h-10zM1344 212h10v10h-10zM1324 242h10v10h-10z"/><path fill="#4b9b00" d="M1364 192h10v10h-10zM1354 212h10v10h-10zM1334 242h10v10h-10z"/><path fill="#009b28" d="M1024 202h10v10h-10zM1024 212h40v10h-40zM1054 222h40v10h-40zM1084 232h40v10h-40zM1114 242h30v10h-30zM1144 252h30v10h-30zM1174 262h30v10h-30zM1214 272h20v10h-20zM1244 282h10v10h-10z"/><path fill="#3c9b00" d="M1344 202h10v10h-10zM1334 222h10v10h-10z"/><path fill="#469b00" d="M1354 202h10v10h-10zM1344 222h10v10h-10zM1334 232h10v10h-10z"/><path fill="#509b00" d="M1364 202h10v10h-10zM1344 232h10v10h-10zM1334 252h10v10h-10z"/><path fill="#5f9b00" d="M1374 202h10v10h-10zM1364 222h10v10h-10zM1344 252h10v10h-10z"/><path fill="#5a9b00" d="M1364 212h10v10h-10zM1354 232h10v10h-10z"/><path fill="#649b00" d="M1374 212h10v10h-10zM1354 242h10v10h-10z"/><path fill="#6e9b00" d="M1384 212h10v10h-10zM1374 222h10v10h-10zM1354 252h10v10h-10z"/><path fill="#009b2d" d="M1024 222h30v10h-30zM1044 232h40v10h-40zM1074 242h40v10h-40zM1114 252h30v10h-30zM1144 262h30v10h-30zM1184 272h30v10h-30zM1214 282h30v10h-30z"/><path fill="#559b00" d="M1354 222h10v10h-10zM1344 242h10v10h-10z"/><path fill="#789b00" d="M1384 222h10v10h-10zM1364 252h10v10h-10zM1354 262h10v10h-10z"/><path fill="#879b00" d="M1394 222h10v10h-10zM1374 252h10v10h-10zM1364 262h10v10h-10z"/><path fill="#969b00" d="M1404 222h10v10h-10zM1384 252h10v10h-10zM1374 262h10v10h-10z"/><path fill="#009b32" d="M1024 232h20v10h-20zM1034 242h40v10h-40zM1074 252h40v10h-40zM1114 262h30v10h-30zM1154 272h30v10h-30zM1184 282h30v10h-30zM1224 292h30v10h-30z"/><path fill="#059b0a" d="M1274 232h10v10h-10z"/><path fill="#0f9b05" d="M1284 232h10v10h-10z"/><path fill="#199b05" d="M1294 232h10v10h-10z"/><path fill="#699b00" d="M1364 232h10v10h-10z"/><path fill="#739b00" d="M1374 232h10v10h-10zM1364 242h10v10h-10z"/><path fill="#829b00" d="M1384 232h10v10h-10z"/><path fill="#919b00" d="M1394 232h10v10h-10zM1364 272h10v10h-10z"/><path fill="#9b9100" d="M1404 232h10v10h-10zM1374 272h10v10h-10z"/><path fill="#9b8700" d="M1414 232h10v10h-10zM1404 242h10v10h-10z"/><path fill="#009b37" d="M1024 242h10v10h-10zM1034 252h40v10h-40zM1074 262h40v10h-40zM1114 272h40v10h-40zM1154 282h30v10h-30zM1194 292h30v10h-30zM1234 302h20v10h-20z"/><path fill="#0a9b0a" d="M1274 242h10v10h-10z"/><path fill="#149b0a" d="M1284 242h10v10h-10z"/><path fill="#1e9b05" d="M1294 242h10v10h-10z"/><path fill="#289b05" d="M1304 242h10v10h-10z"/><path fill="#7d9b00" d="M1374 242h10v10h-10z"/><path fill="#8c9b00" d="M1384 242h10v10h-10z"/><path fill="#9b9600" d="M1394 242h10v10h-10z"/><path fill="#9b7d00" d="M1414 242h10v10h-10zM1404 252h10v10h-10z"/><path fill="#9b7300" d="M1424 242h10v10h-10zM1414 252h10v10h-10zM1404 262h10v10h-10z"/><path fill="#009b3c" d="M1024 252h10v10h-10zM1034 262h40v10h-40zM1074 272h40v10h-40zM1124 282h30v10h-30zM1164 292h30v10h-30zM1204 302h30v10h-30z"/><path fill="#059b14" d="M1264 252h10v10h-10z"/><path fill="#0f9b0f" d="M1274 252h10v10h-10z"/><path fill="#199b0f" d="M1284 252h10v10h-10z"/><path fill="#239b0a" d="M1294 252h10v10h-10z"/><path fill="#2d9b0a" d="M1304 252h10v10h-10z"/><path fill="#379b05" d="M1314 252h10v10h-10z"/><path fill="#469b05" d="M1324 252h10v10h-10z"/><path fill="#9b8c00" d="M1394 252h10v10h-10zM1384 262h10v10h-10z"/><path fill="#9b6900" d="M1424 252h10v10h-10zM1414 262h10v10h-10z"/><path fill="#9b5f00" d="M1434 252h10v10h-10z"/><path fill="#9b5a00" d="M1444 252h10v10h-10zM1434 262h10v10h-10zM1424 272h10v10h-10zM1414 282h10v10h-10zM1404 292h10v10h-10z"/><path fill="#009b41" d="M1024 262h10v10h-10zM1034 272h40v10h-40zM1084 282h40v10h-40zM1124 292h40v10h-40zM1174 302h30v10h-30zM1224 312h20v10h-20z"/><path fill="#059b19" d="M1264 262h10v10h-10z"/><path fill="#149b14" d="M1274 262h10v10h-10z"/><path fill="#419b0a" d="M1314 262h10v10h-10z"/><path fill="#4b9b0a" d="M1324 262h10v10h-10z"/><path fill="#5a9b05" d="M1334 262h10v10h-10z"/><path fill="#699b05" d="M1344 262h10v10h-10z"/><path fill="#9b8200" d="M1394 262h10v10h-10zM1384 272h10v10h-10z"/><path fill="#9b6400" d="M1424 262h10v10h-10zM1414 272h10v10h-10zM1404 282h10v10h-10zM1394 292h10v10h-10z"/><path fill="#9b5500" d="M1444 262h10v10h-10zM1434 272h10v10h-10zM1424 282h10v10h-10zM1414 292h10v10h-10z"/><path fill="#9b4b00" d="M1454 262h10v10h-10zM1444 272h10v10h-10zM1434 282h10v10h-10zM1424 292h10v10h-10zM1414 302h10v10h-10z"/><path fill="#009b46" d="M1024 272h10v10h-10zM1034 282h50v10h-50zM1094 292h30v10h-30zM1144 302h30v10h-30zM1194 312h30v10h-30z"/><path fill="#0a9b1e" d="M1264 272h10v10h-10z"/><path fill="#149b1e" d="M1274 272h10v10h-10z"/><path fill="#559b0f" d="M1324 272h10v10h-10z"/><path fill="#649b0a" d="M1334 272h10v10h-10z"/><path fill="#739b0a" d="M1344 272h10v10h-10z"/><path fill="#829b05" d="M1354 272h10v10h-10z"/><path fill="#9b7800" d="M1394 272h10v10h-10zM1384 282h10v10h-10z"/><path fill="#9b6e00" d="M1404 272h10v10h-10zM1394 282h10v10h-10z"/><path fill="#9b4600" d="M1454 272h10v10h-10zM1444 282h10v10h-10zM1434 292h10v10h-10zM1424 302h10v10h-10z"/><path fill="#9b4100" d="M1464 272h10v10h-10zM1454 282h10v10h-10zM1444 292h10v10h-10zM1434 302h10v10h-10zM1424 312h10v10h-10z"/><path fill="#009b4b" d="M1024 282h10v10h-10zM1044 292h50v10h-50zM1104 302h40v10h-40zM1164 312h30v10h-30zM1214 322h30v10h-30z"/><path fill="#059b28" d="M1254 282h10v10h-10z"/><path fill="#0f9b23" d="M1264 282h10v10h-10z"/><path fill="#199b23" d="M1274 282h10v10h-10z"/><path fill="#7d9b0f" d="M1344 282h10v10h-10z"/><path fill="#8c9b0a" d="M1354 282h10v10h-10z"/><path fill="#9b960a" d="M1364 282h10v10h-10z"/><path fill="#9b8705" d="M1374 282h10v10h-10z"/><path fill="#9b3c00" d="M1464 282h10v10h-10zM1454 292h10v10h-10zM1444 302h10v10h-10z"/><path fill="#9b3700" d="M1474 282h10v10h-10zM1464 292h10v10h-10zM1454 302h10v10h-10zM1434 312h10v10h-10z"/><path fill="#009b50" d="M1024 292h20v10h-20zM1054 302h50v10h-50zM1124 312h40v10h-40zM1184 322h30v10h-30z"/><path fill="#0a9b2d" d="M1254 292h10v10h-10z"/><path fill="#149b2d" d="M1264 292h10v10h-10z"/><path fill="#9b870f" d="M1364 292h10v10h-10z"/><path fill="#9b780a" d="M1374 292h10v10h-10z"/><path fill="#9b6e05" d="M1384 292h10v10h-10z"/><path fill="#9b3200" d="M1474 292h10v10h-10zM1464 302h10v10h-10zM1444 312h20v10h-20z"/><path fill="#9b2d00" d="M1484 292h20v10h-20zM1474 302h10v10h-10zM1464 312h10v10h-10zM1444 322h20v10h-20z"/><path fill="#009b55" d="M1034 302h20v10h-20zM1074 312h50v10h-50zM1144 322h40v10h-40zM1214 332h20v10h-20z"/><path fill="#0f9b37" d="M1254 302h10v10h-10z"/><path fill="#199b32" d="M1264 302h10v10h-10z"/><path fill="#9b6e0f" d="M1374 302h10v10h-10z"/><path fill="#9b640a" d="M1384 302h10v10h-10z"/><path fill="#9b5a05" d="M1394 302h10v10h-10z"/><path fill="#9b5505" d="M1404 302h10v10h-10z"/><path fill="#9b2800" d="M1484 302h20v10h-20zM1474 312h10v10h-10zM1464 322h10v10h-10zM1454 332h10v10h-10z"/><path fill="#9b2300" d="M1504 302h10v10h-10zM1484 312h20v10h-20zM1474 322h20v10h-20zM1464 332h10v10h-10z"/><path fill="#009b5a" d="M1034 312h40v10h-40zM1094 322h50v10h-50zM1174 332h40v10h-40z"/><path fill="#059b41" d="M1244 312h10v10h-10z"/><path fill="#149b3c" d="M1254 312h10v10h-10z"/><path fill="#1e9b3c" d="M1264 312h10v10h-10z"/><path fill="#9b550a" d="M1394 312h10v10h-10z"/><path fill="#9b4b0a" d="M1404 312h10v10h-10z"/><path fill="#9b4605" d="M1414 312h10v10h-10z"/><path fill="#9b1e00" d="M1504 312h20v10h-20zM1494 322h10v10h-10zM1474 332h20v10h-20z"/><path fill="#009b64" d="M1034 322h10v10h-10zM1074 332h60v10h-60zM1174 342h40v10h-40z"/><path fill="#009b5f" d="M1044 322h50v10h-50zM1134 332h40v10h-40zM1214 342h20v10h-20z"/><path fill="#0a9b46" d="M1244 322h10v10h-10z"/><path fill="#199b46" d="M1254 322h10v10h-10z"/><path fill="#9b460a" d="M1404 322h10v10h-10z"/><path fill="#9b3c0a" d="M1414 322h10v10h-10z"/><path fill="#9b3705" d="M1424 322h10v10h-10z"/><path fill="#9b3205" d="M1434 322h10v10h-10z"/><path fill="#9b1900" d="M1504 322h20v10h-20zM1494 332h20v10h-20zM1474 342h20v10h-20z"/><path fill="#9b1400" d="M1524 322h20v10h-20zM1514 332h20v10h-20zM1494 342h20v10h-20zM1484 352h20v10h-20z"/><path fill="#009b69" d="M1034 332h40v10h-40zM1124 342h50v10h-50z"/><path fill="#059b55" d="M1234 332h10v10h-10z"/><path fill="#0f9b50" d="M1244 332h10v10h-10z"/><path fill="#1e9b50" d="M1254 332h10v10h-10z"/><path fill="#9b320a" d="M1424 332h10v10h-10z"/><path fill="#9b2d05" d="M1434 332h10v10h-10z"/><path fill="#9b2805" d="M1444 332h10v10h-10z"/><path fill="#9b0f00" d="M1534 332h20v10h-20zM1514 342h30v10h-30zM1504 352h20v10h-20z"/><path fill="#009b73" d="M1034 342h20v10h-20zM1124 352h60v10h-60z"/><path fill="#009b6e" d="M1054 342h70v10h-70zM1184 352h50v10h-50z"/><path fill="#0a9b5f" d="M1234 342h10v10h-10z"/><path fill="#149b5f" d="M1244 342h10v10h-10z"/><path fill="#289b5a" d="M1254 342h10v10h-10z"/><path fill="#9b2305" d="M1444 342h20v10h-20z"/><path fill="#9b1e05" d="M1464 342h10v10h-10z"/><path fill="#9b0a00" d="M1544 342h20v10h-20zM1524 352h30v10h-30zM1504 362h30v10h-30z"/><path fill="#009b78" d="M1044 352h80v10h-80zM1214 362h10v10h-10z"/><path fill="#0f9b69" d="M1234 352h10v10h-10z"/><path fill="#1e9b69" d="M1244 352h10v10h-10z"/><path fill="#9b1e0a" d="M1454 352h10v10h-10z"/><path fill="#9b1905" d="M1464 352h20v10h-20z"/><path fill="#9b0500" d="M1554 352h20v10h-20zM1534 362h40v10h-40zM1514 372h40v10h-40z"/><path fill="#009b82" d="M1044 362h100v10h-100z"/><path fill="#009b7d" d="M1144 362h70v10h-70z"/><path fill="#059b78" d="M1224 362h10v10h-10z"/><path fill="#149b78" d="M1234 362h10v10h-10z"/><path fill="#239b78" d="M1244 362h10v10h-10z"/><path fill="#9b1405" d="M1474 362h10v10h-10z"/><path fill="#9b0f05" d="M1484 362h20v10h-20z"/><path fill="#9b0000" d="M1574 362h20v10h-20zM1554 372h50v10h-50zM1534 382h80v10h-80zM1544 392h90v10h-90zM1564 402h80v10h-80zM1574 412h70v10h-70zM1594 422h60v10h-60zM1604 432h40v10h-40zM1624 442h10v10h-10z"/><path fill="#009b8c" d="M1044 372h180v10h-180z"/><path fill="#0a9b87" d="M1224 372h10v10h-10z"/><path fill="#1e9b87" d="M1234 372h10v10h-10z"/><path fill="#2d9b87" d="M1244 372h10v10h-10z"/><path fill="#9b0a05" d="M1494 372h20v10h-20z"/><path fill="#00969b" d="M1044 382h180v10h-180z"/><path fill="#0f969b" d="M1224 382h10v10h-10z"/><path fill="#23969b" d="M1234 382h10v10h-10z"/><path fill="#9b0a0a" d="M1484 382h10v10h-10z"/><path fill="#9b050a" d="M1494 382h10v10h-10zM1484 392h20v10h-20z"/><path fill="#9b0505" d="M1504 382h20v10h-20z"/><path fill="#9b0005" d="M1524 382h10v10h-10zM1514 392h30v10h-30zM1524 402h40v10h-40zM1544 412h30v10h-30zM1554 422h40v10h-40zM1564 432h40v10h-40zM1584 442h40v10h-40zM1594 452h20v10h-20z"/><path fill="#008c9b" d="M1044 392h100v10h-100z"/><path fill="#00879b" d="M1144 392h70v10h-70z"/><path fill="#05879b" d="M1214 392h10v10h-10z"/><path fill="#14879b" d="M1224 392h10v10h-10z"/><path fill="#28879b" d="M1234 392h10v10h-10z"/><path fill="#9b0a0f" d="M1464 392h10v10h-10z"/><path fill="#9b050f" d="M1474 392h10v10h-10zM1474 402h10v10h-10z"/><path fill="#9b000a" d="M1504 392h10v10h-10zM1494 402h30v10h-30zM1514 412h30v10h-30zM1524 422h30v10h-30zM1534 432h30v10h-30zM1544 442h40v10h-40zM1554 452h40v10h-40zM1564 462h20v10h-20z"/><path fill="#00829b" d="M1054 402h40v10h-40z"/><path fill="#007d9b" d="M1094 402h80v10h-80z"/><path fill="#00789b" d="M1174 402h40v10h-40zM1054 412h20v10h-20z"/><path fill="#0a789b" d="M1214 402h10v10h-10z"/><path fill="#19739b" d="M1224 402h10v10h-10z"/><path fill="#9b0a19" d="M1434 402h20v10h-20z"/><path fill="#9b0514" d="M1454 402h20v10h-20z"/><path fill="#9b000f" d="M1484 402h10v10h-10zM1484 412h30v10h-30zM1494 422h30v10h-30zM1504 432h30v10h-30zM1514 442h30v10h-30zM1524 452h30v10h-30zM1534 462h30v10h-30zM1544 472h10v10h-10z"/><path fill="#00739b" d="M1074 412h70v10h-70z"/><path fill="#006e9b" d="M1144 412h50v10h-50zM1054 422h20v10h-20z"/><path fill="#00699b" d="M1194 412h20v10h-20zM1074 422h50v10h-50z"/><path fill="#0f699b" d="M1214 412h10v10h-10z"/><path fill="#1e699b" d="M1224 412h10v10h-10z"/><path fill="#9b0a23" d="M1414 412h10v10h-10z"/><path fill="#9b0a1e" d="M1424 412h10v10h-10z"/><path fill="#9b051e" d="M1434 412h10v10h-10z"/><path fill="#9b0519" d="M1444 412h20v10h-20z"/><path fill="#9b0014" d="M1464 412h20v10h-20zM1474 422h20v10h-20zM1484 432h20v10h-20zM1494 442h20v10h-20zM1494 452h30v10h-30zM1504 462h30v10h-30zM1514 472h30v10h-30z"/><path fill="#00649b" d="M1124 422h50v10h-50zM1064 432h20v10h-20z"/><path fill="#005f9b" d="M1174 422h30v10h-30zM1084 432h40v10h-40z"/><path fill="#055a9b" d="M1204 422h10v10h-10z"/><path fill="#145a9b" d="M1214 422h10v10h-10z"/><path fill="#235a9b" d="M1224 422h10v10h-10z"/><path fill="#9b0a2d" d="M1394 422h10v10h-10z"/><path fill="#9b0a28" d="M1404 422h10v10h-10z"/><path fill="#9b0528" d="M1414 422h10v10h-10z"/><path fill="#9b0523" d="M1424 422h10v10h-10z"/><path fill="#9b001e" d="M1434 422h20v10h-20zM1444 432h20v10h-20zM1454 442h10v10h-10zM1454 452h20v10h-20zM1464 462h20v10h-20zM1474 472h20v10h-20zM1484 482h20v10h-20zM1484 492h20v10h-20z"/><path fill="#9b0019" d="M1454 422h20v10h-20zM1464 432h20v10h-20zM1464 442h30v10h-30zM1474 452h20v10h-20zM1484 462h20v10h-20zM1494 472h20v10h-20zM1504 482h20v10h-20z"/><path fill="#005a9b" d="M1124 432h40v10h-40zM1064 442h20v10h-20z"/><path fill="#00559b" d="M1164 432h30v10h-30zM1084 442h40v10h-40z"/><path fill="#00509b" d="M1194 432h10v10h-10zM1124 442h40v10h-40zM1064 452h30v10h-30z"/><path fill="#0a509b" d="M1204 432h10v10h-10z"/><path fill="#19509b" d="M1214 432h10v10h-10z"/><path fill="#9b0f41" d="M1364 432h10v10h-10z"/><path fill="#9b0a3c" d="M1374 432h10v10h-10z"/><path fill="#9b0a37" d="M1384 432h10v10h-10z"/><path fill="#9b0532" d="M1394 432h10v10h-10z"/><path fill="#9b052d" d="M1404 432h10v10h-10z"/><path fill="#9b0028" d="M1414 432h10v10h-10zM1424 442h10v10h-10zM1424 452h20v10h-20zM1434 462h10v10h-10zM1434 472h20v10h-20zM1444 482h20v10h-20zM1454 492h10v10h-10zM1454 502h20v10h-20z"/><path fill="#9b0023" d="M1424 432h20v10h-20zM1434 442h20v10h-20zM1444 452h10v10h-10zM1444 462h20v10h-20zM1454 472h20v10h-20zM1464 482h20v10h-20zM1464 492h20v10h-20z"/><path fill="#004b9b" d="M1164 442h30v10h-30zM1094 452h40v10h-40z"/><path fill="#00469b" d="M1194 442h10v10h-10zM1134 452h30v10h-30zM1074 462h40v10h-40z"/><path fill="#0f469b" d="M1204 442h10v10h-10z"/><path fill="#1e419b" d="M1214 442h10v10h-10z"/><path fill="#9b0f50" d="M1344 442h10v10h-10z"/><path fill="#9b0a4b" d="M1354 442h10v10h-10z"/><path fill="#9b0a41" d="M1364 442h10v10h-10z"/><path fill="#9b053c" d="M1374 442h10v10h-10z"/><path fill="#9b0537" d="M1384 442h10v10h-10z"/><path fill="#9b0032" d="M1394 442h10v10h-10zM1404 452h10v10h-10zM1404 462h10v10h-10zM1414 472h10v10h-10zM1414 482h20v10h-20zM1424 492h10v10h-10zM1424 502h20v10h-20zM1434 512h10v10h-10z"/><path fill="#9b002d" d="M1404 442h20v10h-20zM1414 452h10v10h-10zM1414 462h20v10h-20zM1424 472h10v10h-10zM1434 482h10v10h-10zM1434 492h20v10h-20zM1444 502h10v10h-10z"/><path fill="#00419b" d="M1164 452h30v10h-30zM1114 462h30v10h-30zM1074 472h20v10h-20z"/><path fill="#053c9b" d="M1194 452h10v10h-10z"/><path fill="#143c9b" d="M1204 452h10v10h-10z"/><path fill="#1e379b" d="M1214 452h10v10h-10z"/><path fill="#9b0f69" d="M1324 452h10v10h-10z"/><path fill="#9b0f5f" d="M1334 452h10v10h-10z"/><path fill="#9b0a55" d="M1344 452h10v10h-10z"/><path fill="#9b054b" d="M1354 452h10v10h-10z"/><path fill="#9b0546" d="M1364 452h10v10h-10z"/><path fill="#9b0041" d="M1374 452h10v10h-10zM1374 462h10v10h-10zM1384 472h10v10h-10zM1384 482h10v10h-10zM1384 492h10v10h-10zM1394 502h10v10h-10zM1394 512h10v10h-10zM1404 522h10v10h-10z"/><path fill="#9b003c" d="M1384 452h10v10h-10zM1384 462h10v10h-10zM1394 472h10v10h-10zM1394 482h10v10h-10zM1394 492h20v10h-20zM1404 502h10v10h-10zM1404 512h10v10h-10z"/><path fill="#9b0037" d="M1394 452h10v10h-10zM1394 462h10v10h-10zM1404 472h10v10h-10zM1404 482h10v10h-10zM1414 492h10v10h-10zM1414 502h10v10h-10zM1414 512h20v10h-20z"/><path fill="#003c9b" d="M1144 462h20v10h-20zM1094 472h30v10h-30z"/><path fill="#00379b" d="M1164 462h30v10h-30zM1124 472h30v10h-30zM1074 482h30v10h-30z"/><path fill="#0a329b" d="M1194 462h10v10h-10z"/><path fill="#14329b" d="M1204 462h10v10h-10z"/><path fill="#9b1991" d="M1294 462h10v10h-10z"/><path fill="#9b1482" d="M1304 462h10v10h-10z"/><path fill="#9b0f73" d="M1314 462h10v10h-10z"/><path fill="#9b0a69" d="M1324 462h10v10h-10z"/><path fill="#9b055f" d="M1334 462h10v10h-10z"/><path fill="#9b0555" d="M1344 462h10v10h-10z"/><path fill="#9b0050" d="M1354 462h10v10h-10zM1354 472h10v10h-10zM1364 492h10v10h-10zM1364 502h10v10h-10zM1364 512h10v10h-10zM1374 522h10v10h-10zM1374 532h10v10h-10z"/><path fill="#9b0046" d="M1364 462h10v10h-10zM1374 472h10v10h-10zM1374 482h10v10h-10zM1374 492h10v10h-10zM1384 502h10v10h-10zM1384 512h10v10h-10zM1394 522h10v10h-10z"/><path fill="#00329b" d="M1154 472h20v10h-20zM1104 482h30v10h-30zM1084 492h10v10h-10z"/><path fill="#002d9b" d="M1174 472h20v10h-20zM1134 482h30v10h-30zM1094 492h30v10h-30z"/><path fill="#0f2d9b" d="M1194 472h10v10h-10z"/><path fill="#19289b" d="M1204 472h10v10h-10z"/><path fill="#7d149b" d="M1274 472h10v10h-10z"/><path fill="#8c149b" d="M1284 472h10v10h-10z"/><path fill="#9b0f91" d="M1294 472h10v10h-10z"/><path fill="#9b0a82" d="M1304 472h10v10h-10z"/><path fill="#9b0578" d="M1314 472h10v10h-10z"/><path fill="#9b0069" d="M1324 472h10v10h-10zM1334 502h10v10h-10zM1334 512h10v10h-10zM1334 522h10v10h-10z"/><path fill="#9b005f" d="M1334 472h10v10h-10zM1344 492h10v10h-10zM1344 502h10v10h-10zM1344 512h10v10h-10zM1354 542h10v10h-10z"/><path fill="#9b005a" d="M1344 472h10v10h-10zM1344 482h10v10h-10zM1354 512h10v10h-10zM1354 522h10v10h-10zM1354 532h10v10h-10z"/><path fill="#9b004b" d="M1364 472h10v10h-10zM1364 482h10v10h-10zM1374 502h10v10h-10zM1374 512h10v10h-10zM1384 522h10v10h-10zM1384 532h10v10h-10z"/><path fill="#00289b" d="M1164 482h20v10h-20zM1124 492h30v10h-30zM1084 502h30v10h-30z"/><path fill="#05239b" d="M1184 482h10v10h-10z"/><path fill="#0f239b" d="M1194 482h10v10h-10z"/><path fill="#1e1e9b" d="M1204 482h10v10h-10z"/><path fill="#5f149b" d="M1254 482h10v10h-10z"/><path fill="#6e0f9b" d="M1264 482h10v10h-10z"/><path fill="#7d0a9b" d="M1274 482h10v10h-10z"/><path fill="#8c0a9b" d="M1284 482h10v10h-10z"/><path fill="#9b0596" d="M1294 482h10v10h-10z"/><path fill="#9b0087" d="M1304 482h10v10h-10zM1304 492h10v10h-10zM1304 502h10v10h-10zM1304 512h10v10h-10z"/><path fill="#9b0078" d="M1314 482h10v10h-10zM1314 492h10v10h-10zM1324 542h10v10h-10zM1324 552h10v10h-10z"/><path fill="#9b006e" d="M1324 482h10v10h-10zM1324 492h10v10h-10zM1324 502h10v10h-10zM1334 532h10v10h-10zM1334 542h10v10h-10z"/><path fill="#9b0064" d="M1334 482h10v10h-10zM1334 492h10v10h-10zM1344 522h10v10h-10zM1344 532h10v10h-10zM1344 542h10v10h-10z"/><path fill="#9b0055" d="M1354 482h10v10h-10zM1354 492h10v10h-10zM1354 502h10v10h-10zM1364 522h10v10h-10zM1364 532h10v10h-10z"/><path fill="#00239b" d="M1154 492h20v10h-20zM1114 502h30v10h-30zM1094 512h10v10h-10z"/><path fill="#001e9b" d="M1174 492h10v10h-10zM1144 502h20v10h-20zM1104 512h30v10h-30zM1094 522h10v10h-10z"/><path fill="#0a1e9b" d="M1184 492h10v10h-10z"/><path fill="#14199b" d="M1194 492h10v10h-10z"/><path fill="#37149b" d="M1224 492h10v10h-10z"/><path fill="#460f9b" d="M1234 492h10v10h-10z"/><path fill="#500f9b" d="M1244 492h10v10h-10z"/><path fill="#5f0a9b" d="M1254 492h10v10h-10z"/><path fill="#6e059b" d="M1264 492h10v10h-10z"/><path fill="#7d059b" d="M1274 492h10v10h-10z"/><path fill="#8c009b" d="M1284 492h10v10h-10zM1284 502h10v10h-10zM1284 512h10v10h-10zM1284 522h10v10h-10zM1284 532h10v10h-10zM1284 542h10v10h-10zM1284 552h10v10h-10zM1284 562h10v10h-10z"/><path fill="#9b0096" d="M1294 492h10v10h-10zM1294 502h10v10h-10zM1294 512h10v10h-10zM1294 522h10v10h-10z"/><path fill="#00199b" d="M1164 502h20v10h-20zM1134 512h20v10h-20zM1104 522h20v10h-20z"/><path fill="#0f149b" d="M1184 502h10v10h-10z"/><path fill="#19149b" d="M1194 502h10v10h-10z"/><path fill="#230f9b" d="M1204 502h10v10h-10z"/><path fill="#2d0f9b" d="M1214 502h10v10h-10z"/><path fill="#3c0a9b" d="M1224 502h10v10h-10z"/><path fill="#460a9b" d="M1234 502h10v10h-10z"/><path fill="#55059b" d="M1244 502h10v10h-10z"/><path fill="#5f059b" d="M1254 502h10v10h-10z"/><path fill="#6e009b" d="M1264 502h10v10h-10zM1264 512h10v10h-10zM1264 522h10v10h-10zM1264 532h10v10h-10zM1264 542h10v10h-10z"/><path fill="#7d009b" d="M1274 502h10v10h-10zM1274 512h10v10h-10zM1274 522h10v10h-10zM1274 532h10v10h-10zM1274 542h10v10h-10zM1274 552h10v10h-10zM1274 562h10v10h-10zM1274 572h10v10h-10z"/><path fill="#9b007d" d="M1314 502h10v10h-10zM1314 512h10v10h-10zM1314 522h10v10h-10zM1314 532h10v10h-10z"/><path fill="#00149b" d="M1154 512h20v10h-20zM1124 522h30v10h-30zM1104 532h20v10h-20z"/><path fill="#050f9b" d="M1174 512h10v10h-10z"/><path fill="#0f0f9b" d="M1184 512h10v10h-10z"/><path fill="#190a9b" d="M1194 512h10v10h-10z"/><path fill="#230a9b" d="M1204 512h10v10h-10z"/><path fill="#32059b" d="M1214 512h10v10h-10z"/><path fill="#3c059b" d="M1224 512h10v10h-10z"/><path fill="#46009b" d="M1234 512h10v10h-10zM1224 562h10v10h-10zM1224 572h10v10h-10zM1224 582h10v10h-10z"/><path fill="#55009b" d="M1244 512h10v10h-10zM1244 522h10v10h-10zM1244 532h10v10h-10z"/><path fill="#5f009b" d="M1254 512h10v10h-10z"/><path fill="#9b0073" d="M1324 512h10v10h-10zM1324 522h10v10h-10zM1324 532h10v10h-10z"/><path fill="#000f9b" d="M1154 522h20v10h-20zM1124 532h20v10h-20zM1104 542h10v10h-10z"/><path fill="#0a0a9b" d="M1174 522h10v10h-10z"/><path fill="#140a9b" d="M1184 522h10v10h-10z"/><path fill="#1e059b" d="M1194 522h10v10h-10z"/><path fill="#28059b" d="M1204 522h10v10h-10z"/><path fill="#32009b" d="M1214 522h10v10h-10zM1204 562h10v10h-10zM1204 572h10v10h-10zM1204 582h10v10h-10zM1204 592h10v10h-10z"/><path fill="#3c009b" d="M1224 522h10v10h-10zM1214 562h10v10h-10zM1214 572h10v10h-10zM1214 582h10v10h-10zM1214 592h10v10h-10z"/><path fill="#4b009b" d="M1234 522h10v10h-10zM1234 532h10v10h-10zM1234 542h10v10h-10z"/><path fill="#64009b" d="M1254 522h10v10h-10zM1254 532h10v10h-10zM1254 542h10v10h-10zM1254 552h10v10h-10zM1254 562h10v10h-10zM1254 572h10v10h-10z"/><path fill="#9b008c" d="M1304 522h10v10h-10zM1304 532h10v10h-10zM1304 542h10v10h-10zM1304 552h10v10h-10z"/><path fill="#000a9b" d="M1144 532h20v10h-20zM1114 542h30v10h-30z"/><path fill="#05059b" d="M1164 532h10v10h-10z"/><path fill="#0a059b" d="M1174 532h10v10h-10z"/><path fill="#14009b" d="M1184 532h10v10h-10zM1174 552h10v10h-10zM1174 562h10v10h-10z"/><path fill="#1e009b" d="M1194 532h10v10h-10zM1184 562h10v10h-10zM1184 572h10v10h-10z"/><path fill="#28009b" d="M1204 532h10v10h-10zM1194 562h10v10h-10zM1194 572h10v10h-10z"/><path fill="#37009b" d="M1214 532h10v10h-10zM1214 542h10v10h-10zM1214 552h10v10h-10z"/><path fill="#41009b" d="M1224 532h10v10h-10zM1224 542h10v10h-10zM1224 552h10v10h-10z"/><path fill="#9b009b" d="M1294 532h10v10h-10z"/><path fill="#00059b" d="M1144 542h20v10h-20zM1114 552h30v10h-30z"/><path fill="#05009b" d="M1164 542h10v10h-10zM1154 562h10v10h-10zM1154 572h10v10h-10z"/><path fill="#0f009b" d="M1174 542h10v10h-10zM1164 572h10v10h-10zM1164 582h10v10h-10zM1164 592h10v10h-10zM1164 602h10v10h-10z"/><path fill="#19009b" d="M1184 542h10v10h-10zM1184 552h10v10h-10zM1174 572h10v10h-10zM1174 582h10v10h-10zM1174 592h10v10h-10zM1174 602h10v10h-10z"/><path fill="#23009b" d="M1194 542h10v10h-10zM1194 552h10v10h-10zM1184 582h10v10h-10zM1184 592h10v10h-10zM1184 602h10v10h-10z"/><path fill="#2d009b" d="M1204 542h10v10h-10zM1204 552h10v10h-10zM1194 582h10v10h-10zM1194 592h10v10h-10z"/><path fill="#5a009b" d="M1244 542h10v10h-10zM1244 552h10v10h-10zM1244 562h10v10h-10zM1244 572h10v10h-10zM1244 582h10v10h-10z"/><path fill="#96009b" d="M1294 542h10v10h-10zM1294 552h10v10h-10zM1294 562h10v10h-10z"/><path fill="#9b0082" d="M1314 542h10v10h-10zM1314 552h10v10h-10z"/><path fill="#00009b" d="M1144 552h20v10h-20zM1114 562h40v10h-40zM1124 572h30v10h-30zM1134 582h20v10h-20zM1144 592h10v10h-10z"/><path fill="#0a009b" d="M1164 552h10v10h-10zM1164 562h10v10h-10zM1154 582h10v10h-10zM1154 592h10v10h-10z"/><path fill="#50009b" d="M1234 552h10v10h-10zM1234 562h10v10h-10zM1234 572h10v10h-10zM1234 582h10v10h-10z"/><path fill="#73009b" d="M1264 552h10v10h-10zM1264 562h10v10h-10zM1264 572h10v10h-10z"/></g></g><g clip-path="url(#triC)"><g filter="url(#bl)"><path fill="#00ff00" d="M1264 192h20v10h-20zM1254 202h30v10h-30zM1274 212h10v10h-10z"/><path fill="#05ff00" d="M1284 192h10v10h-10z"/><path fill="#0aff00" d="M1284 202h10v10h-10z"/><path fill="#14ff00" d="M1294 202h10v10h-10zM1284 222h10v10h-10z"/><path fill="#23ff00" d="M1304 202h10v10h-10zM1294 222h10v10h-10z"/><path fill="#00ff05" d="M1254 212h20v10h-20z"/><path fill="#0fff00" d="M1284 212h10v10h-10z"/><path fill="#1eff00" d="M1294 212h10v10h-10z"/><path fill="#2dff00" d="M1304 212h10v10h-10z"/><path fill="#3cff00" d="M1314 212h10v10h-10zM1304 232h10v10h-10z"/><path fill="#00ff0f" d="M1254 222h10v10h-10zM1264 232h10v10h-10z"/><path fill="#00ff0a" d="M1264 222h10v10h-10z"/><path fill="#05ff05" d="M1274 222h10v10h-10z"/><path fill="#32ff00" d="M1304 222h10v10h-10z"/><path fill="#41ff00" d="M1314 222h10v10h-10z"/><path fill="#55ff00" d="M1324 222h10v10h-10z"/><path fill="#64ff00" d="M1334 222h10v10h-10z"/><path fill="#00ff19" d="M1244 232h10v10h-10zM1264 242h10v10h-10z"/><path fill="#00ff14" d="M1254 232h10v10h-10z"/><path fill="#0aff0f" d="M1274 232h10v10h-10z"/><path fill="#19ff0a" d="M1284 232h10v10h-10z"/><path fill="#28ff05" d="M1294 232h10v10h-10z"/><path fill="#4bff00" d="M1314 232h10v10h-10z"/><path fill="#5fff00" d="M1324 232h10v10h-10z"/><path fill="#73ff00" d="M1334 232h10v10h-10z"/><path fill="#82ff00" d="M1344 232h10v10h-10z"/><path fill="#00ff1e" d="M1244 242h20v10h-20z"/><path fill="#0fff14" d="M1274 242h10v10h-10z"/><path fill="#1eff0f" d="M1284 242h10v10h-10z"/><path fill="#32ff0a" d="M1294 242h10v10h-10z"/><path fill="#41ff0a" d="M1304 242h10v10h-10z"/><path fill="#55ff05" d="M1314 242h10v10h-10z"/><path fill="#69ff00" d="M1324 242h10v10h-10z"/><path fill="#7dff00" d="M1334 242h10v10h-10z"/><path fill="#91ff00" d="M1344 242h10v10h-10z"/><path fill="#a5ff00" d="M1354 242h10v10h-10z"/><path fill="#beff00" d="M1364 242h10v10h-10z"/><path fill="#00ff28" d="M1244 252h10v10h-10z"/><path fill="#00ff23" d="M1254 252h10v10h-10z"/><path fill="#05ff1e" d="M1264 252h10v10h-10z"/><path fill="#14ff1e" d="M1274 252h10v10h-10z"/><path fill="#28ff19" d="M1284 252h10v10h-10z"/><path fill="#37ff14" d="M1294 252h10v10h-10z"/><path fill="#4bff0f" d="M1304 252h10v10h-10z"/><path fill="#5fff0a" d="M1314 252h10v10h-10z"/><path fill="#73ff05" d="M1324 252h10v10h-10z"/><path fill="#87ff00" d="M1334 252h10v10h-10z"/><path fill="#a0ff00" d="M1344 252h10v10h-10z"/><path fill="#b4ff00" d="M1354 252h10v10h-10z"/><path fill="#cdff00" d="M1364 252h10v10h-10z"/><path fill="#e6ff00" d="M1374 252h10v10h-10z"/><path fill="#ffff00" d="M1384 252h10v10h-10z"/><path fill="#00ff32" d="M1234 262h20v10h-20z"/><path fill="#00ff2d" d="M1254 262h10v10h-10z"/><path fill="#0aff28" d="M1264 262h10v10h-10z"/><path fill="#1eff23" d="M1274 262h10v10h-10z"/><path fill="#32ff23" d="M1284 262h10v10h-10z"/><path fill="#41ff1e" d="M1294 262h10v10h-10z"/><path fill="#55ff19" d="M1304 262h10v10h-10z"/><path fill="#69ff14" d="M1314 262h10v10h-10z"/><path fill="#82ff0f" d="M1324 262h10v10h-10z"/><path fill="#96ff0a" d="M1334 262h10v10h-10z"/><path fill="#afff05" d="M1344 262h10v10h-10z"/><path fill="#c3ff00" d="M1354 262h10v10h-10z"/><path fill="#dcff00" d="M1364 262h10v10h-10z"/><path fill="#faff00" d="M1374 262h10v10h-10z"/><path fill="#ffeb00" d="M1384 262h10v10h-10z"/><path fill="#ffd700" d="M1394 262h10v10h-10z"/><path fill="#00ff3c" d="M1234 272h20v10h-20z"/><path fill="#00ff37" d="M1254 272h10v10h-10z"/><path fill="#14ff32" d="M1264 272h10v10h-10z"/><path fill="#23ff2d" d="M1274 272h10v10h-10z"/><path fill="#37ff2d" d="M1284 272h10v10h-10z"/><path fill="#4bff28" d="M1294 272h10v10h-10z"/><path fill="#5fff23" d="M1304 272h10v10h-10z"/><path fill="#78ff1e" d="M1314 272h10v10h-10z"/><path fill="#8cff19" d="M1324 272h10v10h-10z"/><path fill="#a5ff14" d="M1334 272h10v10h-10z"/><path fill="#beff0f" d="M1344 272h10v10h-10z"/><path fill="#d7ff0a" d="M1354 272h10v10h-10z"/><path fill="#f0ff05" d="M1364 272h10v10h-10z"/><path fill="#fff000" d="M1374 272h10v10h-10z"/><path fill="#ffdc00" d="M1384 272h10v10h-10z"/><path fill="#ffc300" d="M1394 272h10v10h-10z"/><path fill="#ffb400" d="M1404 272h10v10h-10zM1394 282h10v10h-10z"/><path fill="#ffa500" d="M1414 272h10v10h-10zM1404 282h10v10h-10z"/><path fill="#00ff4b" d="M1224 282h10v10h-10z"/><path fill="#00ff46" d="M1234 282h20v10h-20z"/><path fill="#05ff41" d="M1254 282h10v10h-10z"/><path fill="#19ff3c" d="M1264 282h10v10h-10z"/><path fill="#2dff37" d="M1274 282h10v10h-10z"/><path fill="#41ff37" d="M1284 282h10v10h-10z"/><path fill="#55ff32" d="M1294 282h10v10h-10z"/><path fill="#6eff2d" d="M1304 282h10v10h-10z"/><path fill="#82ff28" d="M1314 282h10v10h-10z"/><path fill="#9bff23" d="M1324 282h10v10h-10z"/><path fill="#b4ff1e" d="M1334 282h10v10h-10z"/><path fill="#cdff19" d="M1344 282h10v10h-10z"/><path fill="#ebff14" d="M1354 282h10v10h-10z"/><path fill="#fff50f" d="M1364 282h10v10h-10z"/><path fill="#ffdc05" d="M1374 282h10v10h-10z"/><path fill="#ffc800" d="M1384 282h10v10h-10z"/><path fill="#ff9600" d="M1414 282h10v10h-10zM1404 292h10v10h-10z"/><path fill="#ff8c00" d="M1424 282h10v10h-10zM1414 292h10v10h-10z"/><path fill="#00ff55" d="M1224 292h20v10h-20z"/><path fill="#00ff50" d="M1244 292h10v10h-10z"/><path fill="#0fff4b" d="M1254 292h10v10h-10z"/><path fill="#23ff46" d="M1264 292h10v10h-10z"/><path fill="#37ff46" d="M1274 292h10v10h-10z"/><path fill="#4bff41" d="M1284 292h10v10h-10z"/><path fill="#64ff3c" d="M1294 292h10v10h-10z"/><path fill="#78ff37" d="M1304 292h10v10h-10z"/><path fill="#91ff32" d="M1314 292h10v10h-10z"/><path fill="#aaff2d" d="M1324 292h10v10h-10z"/><path fill="#c8ff28" d="M1334 292h10v10h-10z"/><path fill="#e1ff23" d="M1344 292h10v10h-10z"/><path fill="#ffff1e" d="M1354 292h10v10h-10z"/><path fill="#ffe114" d="M1364 292h10v10h-10z"/><path fill="#ffcd0f" d="M1374 292h10v10h-10z"/><path fill="#ffb90a" d="M1384 292h10v10h-10z"/><path fill="#ffa505" d="M1394 292h10v10h-10z"/><path fill="#ff7d00" d="M1424 292h10v10h-10zM1414 302h10v10h-10z"/><path fill="#ff7300" d="M1434 292h10v10h-10zM1424 302h10v10h-10z"/><path fill="#ff6900" d="M1444 292h10v10h-10zM1434 302h10v10h-10z"/><path fill="#00ff64" d="M1224 302h10v10h-10z"/><path fill="#00ff5f" d="M1234 302h10v10h-10z"/><path fill="#00ff5a" d="M1244 302h10v10h-10z"/><path fill="#14ff5a" d="M1254 302h10v10h-10z"/><path fill="#2dff55" d="M1264 302h10v10h-10z"/><path fill="#41ff50" d="M1274 302h10v10h-10z"/><path fill="#5aff4b" d="M1284 302h10v10h-10z"/><path fill="#6eff4b" d="M1294 302h10v10h-10z"/><path fill="#87ff46" d="M1304 302h10v10h-10z"/><path fill="#a5ff41" d="M1314 302h10v10h-10z"/><path fill="#beff3c" d="M1324 302h10v10h-10z"/><path fill="#dcff37" d="M1334 302h10v10h-10z"/><path fill="#faff32" d="M1344 302h10v10h-10z"/><path fill="#ffe628" d="M1354 302h10v10h-10z"/><path fill="#ffcd1e" d="M1364 302h10v10h-10z"/><path fill="#ffb919" d="M1374 302h10v10h-10z"/><path fill="#ffa50f" d="M1384 302h10v10h-10z"/><path fill="#ff960a" d="M1394 302h10v10h-10z"/><path fill="#ff8c05" d="M1404 302h10v10h-10z"/><path fill="#ff5f00" d="M1444 302h10v10h-10zM1434 312h10v10h-10z"/><path fill="#ff5a00" d="M1454 302h10v10h-10z"/><path fill="#ff5000" d="M1464 302h10v10h-10zM1454 312h10v10h-10zM1444 322h10v10h-10z"/><path fill="#00ff73" d="M1214 312h10v10h-10z"/><path fill="#00ff6e" d="M1224 312h20v10h-20z"/><path fill="#0aff69" d="M1244 312h10v10h-10z"/><path fill="#1eff64" d="M1254 312h10v10h-10z"/><path fill="#37ff64" d="M1264 312h10v10h-10z"/><path fill="#4bff5f" d="M1274 312h10v10h-10z"/><path fill="#64ff5a" d="M1284 312h10v10h-10z"/><path fill="#7dff55" d="M1294 312h10v10h-10z"/><path fill="#9bff55" d="M1304 312h10v10h-10z"/><path fill="#b4ff50" d="M1314 312h10v10h-10z"/><path fill="#d2ff4b" d="M1324 312h10v10h-10z"/><path fill="#f0ff46" d="M1334 312h10v10h-10z"/><path fill="#ffeb3c" d="M1344 312h10v10h-10z"/><path fill="#ffd232" d="M1354 312h10v10h-10z"/><path fill="#ffbe28" d="M1364 312h10v10h-10z"/><path fill="#ffaa1e" d="M1374 312h10v10h-10z"/><path fill="#ff9619" d="M1384 312h10v10h-10z"/><path fill="#ff8c14" d="M1394 312h10v10h-10z"/><path fill="#ff7d0f" d="M1404 312h10v10h-10z"/><path fill="#ff730a" d="M1414 312h10v10h-10z"/><path fill="#ff6905" d="M1424 312h10v10h-10z"/><path fill="#ff5500" d="M1444 312h10v10h-10z"/><path fill="#ff4b00" d="M1464 312h10v10h-10z"/><path fill="#ff4100" d="M1474 312h10v10h-10zM1464 322h10v10h-10z"/><path fill="#00ff82" d="M1214 322h10v10h-10z"/><path fill="#00ff7d" d="M1224 322h20v10h-20z"/><path fill="#14ff78" d="M1244 322h10v10h-10z"/><path fill="#28ff73" d="M1254 322h10v10h-10z"/><path fill="#41ff73" d="M1264 322h10v10h-10z"/><path fill="#5aff6e" d="M1274 322h10v10h-10z"/><path fill="#73ff69" d="M1284 322h10v10h-10z"/><path fill="#8cff69" d="M1294 322h10v10h-10z"/><path fill="#aaff64" d="M1304 322h10v10h-10z"/><path fill="#c8ff5f" d="M1314 322h10v10h-10z"/><path fill="#ebff5a" d="M1324 322h10v10h-10z"/><path fill="#fff550" d="M1334 322h10v10h-10z"/><path fill="#ffd741" d="M1344 322h10v10h-10z"/><path fill="#ffbe37" d="M1354 322h10v10h-10z"/><path fill="#ffaa2d" d="M1364 322h10v10h-10z"/><path fill="#ff9b28" d="M1374 322h10v10h-10z"/><path fill="#ff8c1e" d="M1384 322h10v10h-10z"/><path fill="#ff7d19" d="M1394 322h10v10h-10z"/><path fill="#ff7314" d="M1404 322h10v10h-10z"/><path fill="#ff690f" d="M1414 322h10v10h-10z"/><path fill="#ff5f0a" d="M1424 322h10v10h-10z"/><path fill="#ff5505" d="M1434 322h10v10h-10z"/><path fill="#ff4600" d="M1454 322h10v10h-10z"/><path fill="#ff3c00" d="M1474 322h10v10h-10z"/><path fill="#ff3700" d="M1484 322h10v10h-10zM1464 332h10v10h-10z"/><path fill="#ff3200" d="M1494 322h10v10h-10zM1474 332h10v10h-10z"/><path fill="#00ff91" d="M1214 332h10v10h-10z"/><path fill="#00ff8c" d="M1224 332h10v10h-10z"/><path fill="#05ff8c" d="M1234 332h10v10h-10z"/><path fill="#19ff87" d="M1244 332h10v10h-10z"/><path fill="#32ff87" d="M1254 332h10v10h-10z"/><path fill="#4bff82" d="M1264 332h10v10h-10z"/><path fill="#69ff7d" d="M1274 332h10v10h-10z"/><path fill="#82ff7d" d="M1284 332h10v10h-10z"/><path fill="#a0ff78" d="M1294 332h10v10h-10z"/><path fill="#beff73" d="M1304 332h10v10h-10z"/><path fill="#e1ff73" d="M1314 332h10v10h-10z"/><path fill="#fffa69" d="M1324 332h10v10h-10z"/><path fill="#ffdc5a" d="M1334 332h10v10h-10z"/><path fill="#ffc34b" d="M1344 332h10v10h-10z"/><path fill="#ffaa41" d="M1354 332h10v10h-10z"/><path fill="#ff9b37" d="M1364 332h10v10h-10z"/><path fill="#ff872d" d="M1374 332h10v10h-10z"/><path fill="#ff7d23" d="M1384 332h10v10h-10z"/><path fill="#ff6e1e" d="M1394 332h10v10h-10z"/><path fill="#ff6419" d="M1404 332h10v10h-10z"/><path fill="#ff5a14" d="M1414 332h10v10h-10z"/><path fill="#ff550f" d="M1424 332h10v10h-10z"/><path fill="#ff4b0a" d="M1434 332h10v10h-10z"/><path fill="#ff4605" d="M1444 332h10v10h-10z"/><path fill="#ff4105" d="M1454 332h10v10h-10z"/><path fill="#ff2d00" d="M1484 332h20v10h-20z"/><path fill="#ff2800" d="M1504 332h10v10h-10zM1484 342h10v10h-10z"/><path fill="#ff2300" d="M1514 332h10v10h-10zM1494 342h10v10h-10z"/><path fill="#00ffa5" d="M1204 342h10v10h-10z"/><path fill="#00ffa0" d="M1214 342h20v10h-20z"/><path fill="#0fffa0" d="M1234 342h10v10h-10z"/><path fill="#23ff9b" d="M1244 342h10v10h-10z"/><path fill="#41ff9b" d="M1254 342h10v10h-10z"/><path fill="#5aff96" d="M1264 342h10v10h-10z"/><path fill="#78ff91" d="M1274 342h10v10h-10z"/><path fill="#96ff91" d="M1284 342h10v10h-10z"/><path fill="#b4ff8c" d="M1294 342h10v10h-10z"/><path fill="#d7ff87" d="M1304 342h10v10h-10z"/><path fill="#faff87" d="M1314 342h10v10h-10z"/><path fill="#ffe173" d="M1324 342h10v10h-10z"/><path fill="#ffc35f" d="M1334 342h10v10h-10z"/><path fill="#ffaf50" d="M1344 342h10v10h-10z"/><path fill="#ff9b46" d="M1354 342h10v10h-10z"/><path fill="#ff873c" d="M1364 342h10v10h-10z"/><path fill="#ff7d32" d="M1374 342h10v10h-10z"/><path fill="#ff6e2d" d="M1384 342h10v10h-10z"/><path fill="#ff6423" d="M1394 342h10v10h-10z"/><path fill="#ff5a1e" d="M1404 342h10v10h-10z"/><path fill="#ff5019" d="M1414 342h10v10h-10z"/><path fill="#ff4b14" d="M1424 342h10v10h-10z"/><path fill="#ff410f" d="M1434 342h10v10h-10z"/><path fill="#ff3c0a" d="M1444 342h10v10h-10z"/><path fill="#ff370a" d="M1454 342h10v10h-10z"/><path fill="#ff3205" d="M1464 342h10v10h-10z"/><path fill="#ff2d05" d="M1474 342h10v10h-10z"/><path fill="#ff1e00" d="M1504 342h20v10h-20zM1494 352h10v10h-10z"/><path fill="#ff1900" d="M1524 342h10v10h-10zM1504 352h20v10h-20z"/><path fill="#00ffb9" d="M1204 352h10v10h-10z"/><path fill="#00ffb4" d="M1214 352h20v10h-20z"/><path fill="#19ffb4" d="M1234 352h10v10h-10z"/><path fill="#32ffaf" d="M1244 352h10v10h-10z"/><path fill="#4bffaf" d="M1254 352h10v10h-10z"/><path fill="#69ffaa" d="M1264 352h10v10h-10z"/><path fill="#87ffaa" d="M1274 352h10v10h-10z"/><path fill="#aaffa5" d="M1284 352h10v10h-10z"/><path fill="#cdffa5" d="M1294 352h10v10h-10z"/><path fill="#f5ffa0" d="M1304 352h10v10h-10z"/><path fill="#ffe68c" d="M1314 352h10v10h-10z"/><path fill="#ffc878" d="M1324 352h10v10h-10z"/><path fill="#ffaf69" d="M1334 352h10v10h-10z"/><path fill="#ff9b5a" d="M1344 352h10v10h-10z"/><path fill="#ff874b" d="M1354 352h10v10h-10z"/><path fill="#ff7841" d="M1364 352h10v10h-10z"/><path fill="#ff6e37" d="M1374 352h10v10h-10z"/><path fill="#ff6432" d="M1384 352h10v10h-10z"/><path fill="#ff5a2d" d="M1394 352h10v10h-10z"/><path fill="#ff5023" d="M1404 352h10v10h-10z"/><path fill="#ff461e" d="M1414 352h10v10h-10z"/><path fill="#ff4119" d="M1424 352h10v10h-10z"/><path fill="#ff3c14" d="M1434 352h10v10h-10z"/><path fill="#ff320f" d="M1444 352h10v10h-10z"/><path fill="#ff2d0f" d="M1454 352h10v10h-10z"/><path fill="#ff280a" d="M1464 352h10v10h-10z"/><path fill="#ff2805" d="M1474 352h10v10h-10z"/><path fill="#ff2305" d="M1484 352h10v10h-10z"/><path fill="#ff1400" d="M1524 352h10v10h-10z"/><path fill="#ff0f00" d="M1534 352h20v10h-20zM1514 362h20v10h-20z"/><path fill="#00ffcd" d="M1204 362h20v10h-20z"/><path fill="#05ffcd" d="M1224 362h10v10h-10z"/><path fill="#23ffc8" d="M1234 362h10v10h-10z"/><path fill="#3cffc8" d="M1244 362h10v10h-10z"/><path fill="#5affc8" d="M1254 362h10v10h-10z"/><path fill="#7dffc3" d="M1264 362h10v10h-10z"/><path fill="#a0ffc3" d="M1274 362h10v10h-10z"/><path fill="#c3ffc3" d="M1284 362h10v10h-10z"/><path fill="#ebffbe" d="M1294 362h10v10h-10z"/><path fill="#ffebaf" d="M1304 362h10v10h-10z"/><path fill="#ffcd96" d="M1314 362h10v10h-10z"/><path fill="#ffaf82" d="M1324 362h10v10h-10z"/><path fill="#ff9b6e" d="M1334 362h10v10h-10z"/><path fill="#ff875f" d="M1344 362h10v10h-10z"/><path fill="#ff7855" d="M1354 362h10v10h-10z"/><path fill="#ff6e4b" d="M1364 362h10v10h-10z"/><path fill="#ff5f41" d="M1374 362h10v10h-10z"/><path fill="#ff5537" d="M1384 362h10v10h-10z"/><path fill="#ff4b32" d="M1394 362h10v10h-10z"/><path fill="#ff4628" d="M1404 362h10v10h-10z"/><path fill="#ff3c23" d="M1414 362h10v10h-10z"/><path fill="#ff371e" d="M1424 362h10v10h-10z"/><path fill="#ff3219" d="M1434 362h10v10h-10z"/><path fill="#ff2d14" d="M1444 362h10v10h-10z"/><path fill="#ff2814" d="M1454 362h10v10h-10z"/><path fill="#ff230f" d="M1464 362h10v10h-10z"/><path fill="#ff1e0a" d="M1474 362h10v10h-10z"/><path fill="#ff190a" d="M1484 362h10v10h-10z"/><path fill="#ff1905" d="M1494 362h10v10h-10z"/><path fill="#ff1405" d="M1504 362h10v10h-10z"/><path fill="#ff0a00" d="M1534 362h20v10h-20zM1524 372h10v10h-10z"/><path fill="#ff0500" d="M1554 362h10v10h-10zM1534 372h20v10h-20z"/><path fill="#00ffe6" d="M1194 372h30v10h-30z"/><path fill="#0fffe6" d="M1224 372h10v10h-10z"/><path fill="#2dffe6" d="M1234 372h10v10h-10z"/><path fill="#4bffe1" d="M1244 372h10v10h-10z"/><path fill="#6effe1" d="M1254 372h10v10h-10z"/><path fill="#91ffe1" d="M1264 372h10v10h-10z"/><path fill="#b9ffe1" d="M1274 372h10v10h-10z"/><path fill="#e1ffe1" d="M1284 372h10v10h-10z"/><path fill="#fff5d7" d="M1294 372h10v10h-10z"/><path fill="#ffd2b4" d="M1304 372h10v10h-10z"/><path fill="#ffb49b" d="M1314 372h10v10h-10z"/><path fill="#ff9b87" d="M1324 372h10v10h-10z"/><path fill="#ff8773" d="M1334 372h10v10h-10z"/><path fill="#ff7864" d="M1344 372h10v10h-10z"/><path fill="#ff695a" d="M1354 372h10v10h-10z"/><path fill="#ff5f50" d="M1364 372h10v10h-10z"/><path fill="#ff5546" d="M1374 372h10v10h-10z"/><path fill="#ff4b3c" d="M1384 372h10v10h-10z"/><path fill="#ff4137" d="M1394 372h10v10h-10z"/><path fill="#ff3c2d" d="M1404 372h10v10h-10z"/><path fill="#ff3728" d="M1414 372h10v10h-10z"/><path fill="#ff2d23" d="M1424 372h10v10h-10z"/><path fill="#ff281e" d="M1434 372h10v10h-10z"/><path fill="#ff2319" d="M1444 372h10v10h-10z"/><path fill="#ff1e14" d="M1454 372h20v10h-20z"/><path fill="#ff190f" d="M1474 372h10v10h-10z"/><path fill="#ff140a" d="M1484 372h20v10h-20z"/><path fill="#ff0f05" d="M1504 372h10v10h-10z"/><path fill="#ff0a05" d="M1514 372h10v10h-10z"/><path fill="#ff0000" d="M1554 372h20v10h-20zM1544 382h30v10h-30zM1554 392h20v10h-20z"/><path fill="#00faff" d="M1194 382h30v10h-30z"/><path fill="#1efaff" d="M1224 382h10v10h-10z"/><path fill="#3cfaff" d="M1234 382h10v10h-10z"/><path fill="#5ffaff" d="M1244 382h10v10h-10z"/><path fill="#82faff" d="M1254 382h10v10h-10z"/><path fill="#a5faff" d="M1264 382h10v10h-10z"/><path fill="#d2faff" d="M1274 382h10v10h-10z"/><path fill="#fafaff" d="M1284 382h10v10h-10z"/><path fill="#ffd7dc" d="M1294 382h10v10h-10z"/><path fill="#ffb4b9" d="M1304 382h10v10h-10z"/><path fill="#ff9ba0" d="M1314 382h10v10h-10z"/><path fill="#ff878c" d="M1324 382h10v10h-10z"/><path fill="#ff7878" d="M1334 382h10v10h-10z"/><path fill="#ff6969" d="M1344 382h10v10h-10z"/><path fill="#ff5a5f" d="M1354 382h10v10h-10z"/><path fill="#ff5055" d="M1364 382h10v10h-10z"/><path fill="#ff464b" d="M1374 382h10v10h-10z"/><path fill="#ff4141" d="M1384 382h10v10h-10z"/><path fill="#ff373c" d="M1394 382h10v10h-10z"/><path fill="#ff3232" d="M1404 382h10v10h-10z"/><path fill="#ff2d2d" d="M1414 382h10v10h-10z"/><path fill="#ff2828" d="M1424 382h10v10h-10z"/><path fill="#ff2323" d="M1434 382h10v10h-10z"/><path fill="#ff1e1e" d="M1444 382h10v10h-10z"/><path fill="#ff1919" d="M1454 382h10v10h-10z"/><path fill="#ff1419" d="M1464 382h10v10h-10z"/><path fill="#ff1414" d="M1474 382h10v10h-10z"/><path fill="#ff0f0f" d="M1484 382h10v10h-10z"/><path fill="#ff0a0f" d="M1494 382h10v10h-10z"/><path fill="#ff0a0a" d="M1504 382h10v10h-10z"/><path fill="#ff050a" d="M1514 382h10v10h-10z"/><path fill="#ff0505" d="M1524 382h10v10h-10z"/><path fill="#ff0005" d="M1534 382h10v10h-10zM1534 392h20v10h-20zM1544 402h20v10h-20z"/><path fill="#00e1ff" d="M1194 392h20v10h-20z"/><path fill="#0ae1ff" d="M1214 392h10v10h-10z"/><path fill="#23dcff" d="M1224 392h10v10h-10z"/><path fill="#41dcff" d="M1234 392h10v10h-10z"/><path fill="#64dcff" d="M1244 392h10v10h-10z"/><path fill="#87dcff" d="M1254 392h10v10h-10z"/><path fill="#aadcff" d="M1264 392h10v10h-10z"/><path fill="#d2d7ff" d="M1274 392h10v10h-10z"/><path fill="#fad7ff" d="M1284 392h10v10h-10z"/><path fill="#ffb9dc" d="M1294 392h10v10h-10z"/><path fill="#ffa0be" d="M1304 392h10v10h-10z"/><path fill="#ff87a5" d="M1314 392h10v10h-10z"/><path fill="#ff7891" d="M1324 392h10v10h-10z"/><path fill="#ff697d" d="M1334 392h10v10h-10z"/><path fill="#ff5a73" d="M1344 392h10v10h-10z"/><path fill="#ff5064" d="M1354 392h10v10h-10z"/><path fill="#ff465a" d="M1364 392h10v10h-10z"/><path fill="#ff3c50" d="M1374 392h10v10h-10z"/><path fill="#ff3746" d="M1384 392h10v10h-10z"/><path fill="#ff2d41" d="M1394 392h10v10h-10z"/><path fill="#ff2837" d="M1404 392h10v10h-10z"/><path fill="#ff2332" d="M1414 392h10v10h-10z"/><path fill="#ff1e2d" d="M1424 392h10v10h-10z"/><path fill="#ff1928" d="M1434 392h10v10h-10z"/><path fill="#ff1423" d="M1444 392h10v10h-10z"/><path fill="#ff141e" d="M1454 392h10v10h-10z"/><path fill="#ff0f19" d="M1464 392h10v10h-10z"/><path fill="#ff0a19" d="M1474 392h10v10h-10z"/><path fill="#ff0a14" d="M1484 392h10v10h-10z"/><path fill="#ff050f" d="M1494 392h20v10h-20z"/><path fill="#ff000a" d="M1514 392h20v10h-20zM1524 402h20v10h-20z"/><path fill="#00c8ff" d="M1184 402h30v10h-30z"/><path fill="#14c3ff" d="M1214 402h10v10h-10z"/><path fill="#2dc3ff" d="M1224 402h10v10h-10z"/><path fill="#4bc3ff" d="M1234 402h10v10h-10z"/><path fill="#69beff" d="M1244 402h10v10h-10z"/><path fill="#87beff" d="M1254 402h10v10h-10z"/><path fill="#aabeff" d="M1264 402h10v10h-10z"/><path fill="#d2b9ff" d="M1274 402h10v10h-10z"/><path fill="#f5b9ff" d="M1284 402h10v10h-10z"/><path fill="#ffa0e1" d="M1294 402h10v10h-10z"/><path fill="#ff87c3" d="M1304 402h10v10h-10z"/><path fill="#ff73aa" d="M1314 402h10v10h-10z"/><path fill="#ff6496" d="M1324 402h10v10h-10z"/><path fill="#ff5587" d="M1334 402h10v10h-10z"/><path fill="#ff4b78" d="M1344 402h10v10h-10z"/><path fill="#ff4169" d="M1354 402h10v10h-10z"/><path fill="#ff375f" d="M1364 402h10v10h-10z"/><path fill="#ff3255" d="M1374 402h10v10h-10z"/><path fill="#ff2d4b" d="M1384 402h10v10h-10z"/><path fill="#ff2346" d="M1394 402h10v10h-10z"/><path fill="#ff1e3c" d="M1404 402h10v10h-10z"/><path fill="#ff1937" d="M1414 402h10v10h-10z"/><path fill="#ff1432" d="M1424 402h10v10h-10z"/><path fill="#ff142d" d="M1434 402h10v10h-10z"/><path fill="#ff0f28" d="M1444 402h10v10h-10z"/><path fill="#ff0a23" d="M1454 402h10v10h-10z"/><path fill="#ff0a1e" d="M1464 402h10v10h-10z"/><path fill="#ff0519" d="M1474 402h20v10h-20z"/><path fill="#ff0014" d="M1494 402h10v10h-10zM1504 412h20v10h-20z"/><path fill="#ff000f" d="M1504 402h20v10h-20zM1524 412h20v10h-20z"/><path fill="#00b4ff" d="M1184 412h10v10h-10z"/><path fill="#00afff" d="M1194 412h20v10h-20z"/><path fill="#19afff" d="M1214 412h10v10h-10z"/><path fill="#32aaff" d="M1224 412h10v10h-10z"/><path fill="#50aaff" d="M1234 412h10v10h-10z"/><path fill="#6ea5ff" d="M1244 412h10v10h-10z"/><path fill="#8ca5ff" d="M1254 412h10v10h-10z"/><path fill="#afa0ff" d="M1264 412h10v10h-10z"/><path fill="#d29bff" d="M1274 412h10v10h-10z"/><path fill="#f59bff" d="M1284 412h10v10h-10z"/><path fill="#ff87e6" d="M1294 412h10v10h-10z"/><path fill="#ff73c8" d="M1304 412h10v10h-10z"/><path fill="#ff64af" d="M1314 412h10v10h-10z"/><path fill="#ff559b" d="M1324 412h10v10h-10z"/><path fill="#ff4b87" d="M1334 412h10v10h-10z"/><path fill="#ff3c7d" d="M1344 412h10v10h-10z"/><path fill="#ff376e" d="M1354 412h10v10h-10z"/><path fill="#ff2d64" d="M1364 412h10v10h-10z"/><path fill="#ff285a" d="M1374 412h10v10h-10z"/><path fill="#ff2350" d="M1384 412h10v10h-10z"/><path fill="#ff1e4b" d="M1394 412h10v10h-10z"/><path fill="#ff1941" d="M1404 412h10v10h-10z"/><path fill="#ff143c" d="M1414 412h10v10h-10z"/><path fill="#ff0f37" d="M1424 412h10v10h-10z"/><path fill="#ff0a32" d="M1434 412h10v10h-10z"/><path fill="#ff0a2d" d="M1444 412h10v10h-10z"/><path fill="#ff0528" d="M1454 412h10v10h-10z"/><path fill="#ff0023" d="M1464 412h10v10h-10zM1474 422h10v10h-10zM1484 432h10v10h-10z"/><path fill="#ff001e" d="M1474 412h10v10h-10zM1484 422h10v10h-10z"/><path fill="#ff0019" d="M1484 412h20v10h-20zM1494 422h20v10h-20z"/><path fill="#00a0ff" d="M1174 422h20v10h-20z"/><path fill="#009bff" d="M1194 422h10v10h-10z"/><path fill="#0a9bff" d="M1204 422h10v10h-10z"/><path fill="#2396ff" d="M1214 422h10v10h-10z"/><path fill="#3c96ff" d="M1224 422h10v10h-10z"/><path fill="#5591ff" d="M1234 422h10v10h-10z"/><path fill="#738cff" d="M1244 422h10v10h-10z"/><path fill="#918cff" d="M1254 422h10v10h-10z"/><path fill="#af87ff" d="M1264 422h10v10h-10z"/><path fill="#d282ff" d="M1274 422h10v10h-10z"/><path fill="#f582ff" d="M1284 422h10v10h-10z"/><path fill="#ff73e6" d="M1294 422h10v10h-10z"/><path fill="#ff5fcd" d="M1304 422h10v10h-10z"/><path fill="#ff50b4" d="M1314 422h10v10h-10z"/><path fill="#ff46a0" d="M1324 422h10v10h-10z"/><path fill="#ff3c8c" d="M1334 422h10v10h-10z"/><path fill="#ff327d" d="M1344 422h10v10h-10z"/><path fill="#ff2873" d="M1354 422h10v10h-10z"/><path fill="#ff2369" d="M1364 422h10v10h-10z"/><path fill="#ff1e5f" d="M1374 422h10v10h-10z"/><path fill="#ff1955" d="M1384 422h10v10h-10z"/><path fill="#ff144b" d="M1394 422h10v10h-10z"/><path fill="#ff0f46" d="M1404 422h10v10h-10z"/><path fill="#ff0a41" d="M1414 422h10v10h-10z"/><path fill="#ff0537" d="M1424 422h10v10h-10z"/><path fill="#ff0532" d="M1434 422h10v10h-10z"/><path fill="#ff002d" d="M1444 422h20v10h-20zM1454 432h10v10h-10zM1464 442h10v10h-10z"/><path fill="#ff0028" d="M1464 422h10v10h-10zM1464 432h20v10h-20z"/><path fill="#008cff" d="M1174 432h20v10h-20z"/><path fill="#0087ff" d="M1194 432h10v10h-10z"/><path fill="#0f87ff" d="M1204 432h10v10h-10z"/><path fill="#2882ff" d="M1214 432h10v10h-10z"/><path fill="#4182ff" d="M1224 432h10v10h-10z"/><path fill="#5a7dff" d="M1234 432h10v10h-10z"/><path fill="#7878ff" d="M1244 432h10v10h-10z"/><path fill="#9173ff" d="M1254 432h10v10h-10z"/><path fill="#af73ff" d="M1264 432h10v10h-10z"/><path fill="#d26eff" d="M1274 432h10v10h-10z"/><path fill="#f069ff" d="M1284 432h10v10h-10z"/><path fill="#ff5aeb" d="M1294 432h10v10h-10z"/><path fill="#ff4bcd" d="M1304 432h10v10h-10z"/><path fill="#ff41b9" d="M1314 432h10v10h-10z"/><path fill="#ff37a5" d="M1324 432h10v10h-10z"/><path fill="#ff2d91" d="M1334 432h10v10h-10z"/><path fill="#ff2882" d="M1344 432h10v10h-10z"/><path fill="#ff1e78" d="M1354 432h10v10h-10z"/><path fill="#ff196e" d="M1364 432h10v10h-10z"/><path fill="#ff1464" d="M1374 432h10v10h-10z"/><path fill="#ff0f5a" d="M1384 432h10v10h-10z"/><path fill="#ff0a50" d="M1394 432h10v10h-10z"/><path fill="#ff054b" d="M1404 432h10v10h-10z"/><path fill="#ff0541" d="M1414 432h10v10h-10z"/><path fill="#ff003c" d="M1424 432h10v10h-10zM1434 442h10v10h-10z"/><path fill="#ff0037" d="M1434 432h10v10h-10zM1444 442h10v10h-10z"/><path fill="#ff0032" d="M1444 432h10v10h-10zM1454 442h10v10h-10z"/><path fill="#007dff" d="M1174 442h10v10h-10z"/><path fill="#0078ff" d="M1184 442h20v10h-20z"/><path fill="#1973ff" d="M1204 442h10v10h-10z"/><path fill="#2d6eff" d="M1214 442h10v10h-10z"/><path fill="#466eff" d="M1224 442h10v10h-10z"/><path fill="#5f69ff" d="M1234 442h10v10h-10z"/><path fill="#7864ff" d="M1244 442h10v10h-10z"/><path fill="#965fff" d="M1254 442h10v10h-10z"/><path fill="#b45fff" d="M1264 442h10v10h-10z"/><path fill="#d25aff" d="M1274 442h10v10h-10z"/><path fill="#f055ff" d="M1284 442h10v10h-10z"/><path fill="#ff4beb" d="M1294 442h10v10h-10z"/><path fill="#ff3cd2" d="M1304 442h10v10h-10z"/><path fill="#ff32b9" d="M1314 442h10v10h-10z"/><path fill="#ff28a5" d="M1324 442h10v10h-10z"/><path fill="#ff2396" d="M1334 442h10v10h-10z"/><path fill="#ff1987" d="M1344 442h10v10h-10z"/><path fill="#ff147d" d="M1354 442h10v10h-10z"/><path fill="#ff0f6e" d="M1364 442h10v10h-10z"/><path fill="#ff0a64" d="M1374 442h10v10h-10z"/><path fill="#ff055f" d="M1384 442h10v10h-10z"/><path fill="#ff0555" d="M1394 442h10v10h-10z"/><path fill="#ff0050" d="M1404 442h10v10h-10zM1404 452h10v10h-10zM1414 462h10v10h-10z"/><path fill="#ff0046" d="M1414 442h10v10h-10zM1424 452h10v10h-10z"/><path fill="#ff0041" d="M1424 442h10v10h-10zM1434 452h10v10h-10z"/><path fill="#006eff" d="M1164 452h20v10h-20z"/><path fill="#0069ff" d="M1184 452h10v10h-10z"/><path fill="#0a64ff" d="M1194 452h10v10h-10z"/><path fill="#1e64ff" d="M1204 452h10v10h-10z"/><path fill="#325fff" d="M1214 452h10v10h-10z"/><path fill="#4b5aff" d="M1224 452h10v10h-10z"/><path fill="#6455ff" d="M1234 452h10v10h-10z"/><path fill="#7d55ff" d="M1244 452h10v10h-10z"/><path fill="#9650ff" d="M1254 452h10v10h-10z"/><path fill="#b44bff" d="M1264 452h10v10h-10z"/><path fill="#d246ff" d="M1274 452h10v10h-10z"/><path fill="#f041ff" d="M1284 452h10v10h-10z"/><path fill="#ff37f0" d="M1294 452h10v10h-10z"/><path fill="#ff2dd7" d="M1304 452h10v10h-10z"/><path fill="#ff23be" d="M1314 452h10v10h-10z"/><path fill="#ff1eaa" d="M1324 452h10v10h-10z"/><path fill="#ff149b" d="M1334 452h10v10h-10z"/><path fill="#ff0f8c" d="M1344 452h10v10h-10z"/><path fill="#ff0a7d" d="M1354 452h10v10h-10z"/><path fill="#ff0573" d="M1364 452h10v10h-10z"/><path fill="#ff0069" d="M1374 452h10v10h-10zM1384 472h10v10h-10z"/><path fill="#ff005f" d="M1384 452h10v10h-10zM1394 462h10v10h-10zM1394 472h10v10h-10z"/><path fill="#ff005a" d="M1394 452h10v10h-10z"/><path fill="#ff004b" d="M1414 452h10v10h-10z"/><path fill="#005fff" d="M1164 462h20v10h-20z"/><path fill="#005aff" d="M1184 462h10v10h-10z"/><path fill="#0f55ff" d="M1194 462h10v10h-10z"/><path fill="#2350ff" d="M1204 462h10v10h-10z"/><path fill="#3c50ff" d="M1214 462h10v10h-10z"/><path fill="#504bff" d="M1224 462h10v10h-10z"/><path fill="#6946ff" d="M1234 462h10v10h-10z"/><path fill="#8241ff" d="M1244 462h10v10h-10z"/><path fill="#9b3cff" d="M1254 462h10v10h-10z"/><path fill="#b437ff" d="M1264 462h10v10h-10z"/><path fill="#d232ff" d="M1274 462h10v10h-10z"/><path fill="#f02dff" d="M1284 462h10v10h-10z"/><path fill="#ff28f0" d="M1294 462h10v10h-10z"/><path fill="#ff1ed7" d="M1304 462h10v10h-10z"/><path fill="#ff14c3" d="M1314 462h10v10h-10z"/><path fill="#ff0faf" d="M1324 462h10v10h-10z"/><path fill="#ff0aa0" d="M1334 462h10v10h-10z"/><path fill="#ff0591" d="M1344 462h10v10h-10z"/><path fill="#ff0082" d="M1354 462h10v10h-10z"/><path fill="#ff0078" d="M1364 462h10v10h-10z"/><path fill="#ff006e" d="M1374 462h10v10h-10z"/><path fill="#ff0064" d="M1384 462h10v10h-10z"/><path fill="#ff0055" d="M1404 462h10v10h-10z"/><path fill="#0050ff" d="M1164 472h20v10h-20z"/><path fill="#054bff" d="M1184 472h10v10h-10z"/><path fill="#1446ff" d="M1194 472h10v10h-10z"/><path fill="#2841ff" d="M1204 472h10v10h-10z"/><path fill="#4141ff" d="M1214 472h10v10h-10z"/><path fill="#553cff" d="M1224 472h10v10h-10z"/><path fill="#6937ff" d="M1234 472h10v10h-10z"/><path fill="#8232ff" d="M1244 472h10v10h-10z"/><path fill="#9b2dff" d="M1254 472h10v10h-10z"/><path fill="#b428ff" d="M1264 472h10v10h-10z"/><path fill="#d223ff" d="M1274 472h10v10h-10z"/><path fill="#eb1eff" d="M1284 472h10v10h-10z"/><path fill="#ff19f5" d="M1294 472h10v10h-10z"/><path fill="#ff0fdc" d="M1304 472h10v10h-10z"/><path fill="#ff0ac3" d="M1314 472h10v10h-10z"/><path fill="#ff05b4" d="M1324 472h10v10h-10z"/><path fill="#ff00a0" d="M1334 472h10v10h-10z"/><path fill="#ff0091" d="M1344 472h10v10h-10z"/><path fill="#ff0087" d="M1354 472h10v10h-10z"/><path fill="#ff007d" d="M1364 472h10v10h-10zM1364 482h10v10h-10z"/><path fill="#ff0073" d="M1374 472h10v10h-10z"/><path fill="#0046ff" d="M1154 482h20v10h-20z"/><path fill="#0041ff" d="M1174 482h10v10h-10z"/><path fill="#0a3cff" d="M1184 482h10v10h-10z"/><path fill="#1e37ff" d="M1194 482h10v10h-10z"/><path fill="#3237ff" d="M1204 482h10v10h-10z"/><path fill="#4632ff" d="M1214 482h10v10h-10z"/><path fill="#5a2dff" d="M1224 482h10v10h-10z"/><path fill="#6e28ff" d="M1234 482h10v10h-10z"/><path fill="#8723ff" d="M1244 482h10v10h-10z"/><path fill="#9b1eff" d="M1254 482h10v10h-10z"/><path fill="#b419ff" d="M1264 482h10v10h-10z"/><path fill="#d214ff" d="M1274 482h10v10h-10z"/><path fill="#eb0fff" d="M1284 482h10v10h-10z"/><path fill="#ff0af5" d="M1294 482h10v10h-10z"/><path fill="#ff00dc" d="M1304 482h10v10h-10z"/><path fill="#ff00c8" d="M1314 482h10v10h-10zM1314 492h10v10h-10z"/><path fill="#ff00b4" d="M1324 482h10v10h-10z"/><path fill="#ff00a5" d="M1334 482h10v10h-10z"/><path fill="#ff0096" d="M1344 482h10v10h-10z"/><path fill="#ff008c" d="M1354 482h10v10h-10z"/><path fill="#003cff" d="M1154 492h10v10h-10z"/><path fill="#0037ff" d="M1164 492h10v10h-10z"/><path fill="#0032ff" d="M1174 492h10v10h-10z"/><path fill="#0f32ff" d="M1184 492h10v10h-10z"/><path fill="#232dff" d="M1194 492h10v10h-10z"/><path fill="#3728ff" d="M1204 492h10v10h-10z"/><path fill="#4623ff" d="M1214 492h10v10h-10z"/><path fill="#5f1eff" d="M1224 492h10v10h-10z"/><path fill="#7319ff" d="M1234 492h10v10h-10z"/><path fill="#8714ff" d="M1244 492h10v10h-10z"/><path fill="#a00fff" d="M1254 492h10v10h-10z"/><path fill="#b90aff" d="M1264 492h10v10h-10z"/><path fill="#d205ff" d="M1274 492h10v10h-10z"/><path fill="#eb00ff" d="M1284 492h10v10h-10zM1284 502h10v10h-10zM1284 512h10v10h-10z"/><path fill="#ff00fa" d="M1294 492h10v10h-10zM1294 502h10v10h-10zM1294 512h10v10h-10z"/><path fill="#ff00e1" d="M1304 492h10v10h-10zM1304 502h10v10h-10z"/><path fill="#ff00b9" d="M1324 492h10v10h-10zM1324 502h10v10h-10z"/><path fill="#ff00aa" d="M1334 492h10v10h-10z"/><path fill="#ff009b" d="M1344 492h10v10h-10z"/><path fill="#002dff" d="M1154 502h20v10h-20z"/><path fill="#0528ff" d="M1174 502h10v10h-10z"/><path fill="#1423ff" d="M1184 502h10v10h-10z"/><path fill="#281eff" d="M1194 502h10v10h-10z"/><path fill="#371eff" d="M1204 502h10v10h-10z"/><path fill="#4b19ff" d="M1214 502h10v10h-10z"/><path fill="#5f14ff" d="M1224 502h10v10h-10z"/><path fill="#730fff" d="M1234 502h10v10h-10z"/><path fill="#8c0aff" d="M1244 502h10v10h-10z"/><path fill="#a005ff" d="M1254 502h10v10h-10z"/><path fill="#b900ff" d="M1264 502h10v10h-10zM1264 512h10v10h-10zM1264 522h10v10h-10z"/><path fill="#d200ff" d="M1274 502h10v10h-10zM1274 512h10v10h-10zM1274 522h10v10h-10z"/><path fill="#ff00cd" d="M1314 502h10v10h-10z"/><path fill="#0028ff" d="M1144 512h10v10h-10z"/><path fill="#0023ff" d="M1154 512h10v10h-10z"/><path fill="#001eff" d="M1164 512h10v10h-10zM1144 522h10v10h-10z"/><path fill="#0a1eff" d="M1174 512h10v10h-10z"/><path fill="#1919ff" d="M1184 512h10v10h-10z"/><path fill="#2d14ff" d="M1194 512h10v10h-10z"/><path fill="#3c0fff" d="M1204 512h10v10h-10z"/><path fill="#500aff" d="M1214 512h10v10h-10z"/><path fill="#6405ff" d="M1224 512h10v10h-10z"/><path fill="#7800ff" d="M1234 512h10v10h-10z"/><path fill="#8c00ff" d="M1244 512h10v10h-10z"/><path fill="#a000ff" d="M1254 512h10v10h-10z"/><path fill="#0019ff" d="M1154 522h10v10h-10z"/><path fill="#0014ff" d="M1164 522h10v10h-10zM1144 532h10v10h-10z"/><path fill="#0f14ff" d="M1174 522h10v10h-10z"/><path fill="#1e0fff" d="M1184 522h10v10h-10z"/><path fill="#320aff" d="M1194 522h10v10h-10z"/><path fill="#4105ff" d="M1204 522h10v10h-10z"/><path fill="#5500ff" d="M1214 522h10v10h-10z"/><path fill="#6900ff" d="M1224 522h10v10h-10zM1224 532h10v10h-10z"/><path fill="#7d00ff" d="M1234 522h10v10h-10zM1234 532h10v10h-10z"/><path fill="#9100ff" d="M1244 522h10v10h-10zM1244 532h10v10h-10z"/><path fill="#a500ff" d="M1254 522h10v10h-10zM1254 532h10v10h-10z"/><path fill="#000fff" d="M1154 532h10v10h-10zM1134 542h10v10h-10z"/><path fill="#050aff" d="M1164 532h10v10h-10z"/><path fill="#140aff" d="M1174 532h10v10h-10z"/><path fill="#2305ff" d="M1184 532h10v10h-10z"/><path fill="#3700ff" d="M1194 532h10v10h-10zM1194 542h10v10h-10z"/><path fill="#4600ff" d="M1204 532h10v10h-10z"/><path fill="#5a00ff" d="M1214 532h10v10h-10zM1214 542h10v10h-10z"/><path fill="#000aff" d="M1144 542h10v10h-10z"/><path fill="#0005ff" d="M1154 542h10v10h-10zM1134 552h10v10h-10z"/><path fill="#0a00ff" d="M1164 542h10v10h-10zM1154 572h10v10h-10z"/><path fill="#1900ff" d="M1174 542h10v10h-10z"/><path fill="#2800ff" d="M1184 542h10v10h-10z"/><path fill="#4b00ff" d="M1204 542h10v10h-10zM1204 552h10v10h-10z"/><path fill="#6e00ff" d="M1224 542h10v10h-10z"/><path fill="#0000ff" d="M1144 552h20v10h-20zM1144 562h10v10h-10z"/><path fill="#0f00ff" d="M1164 552h10v10h-10z"/><path fill="#1e00ff" d="M1174 552h10v10h-10z"/><path fill="#2d00ff" d="M1184 552h10v10h-10z"/><path fill="#3c00ff" d="M1194 552h10v10h-10z"/><path fill="#0500ff" d="M1154 562h10v10h-10z"/><path fill="#1400ff" d="M1164 562h10v10h-10z"/><path fill="#2300ff" d="M1174 562h10v10h-10z"/><path fill="#3200ff" d="M1184 562h10v10h-10z"/></g></g><path d="M1040.6,590.2 V68.8 H1708.7 V590.2 Z" fill="none" stroke="#8a8a8a" stroke-width="1.5"/><line x1="1035" y1="590.5" x2="1040.6" y2="590.5" stroke="#d0d0d0" stroke-width="1.5"/><text x="1033.5" y="595.7" font-size="15" text-anchor="end" fill="#e6e6e6">0</text><line x1="1040.6" y1="590.2" x2="1040.6" y2="595.8" stroke="#d0d0d0" stroke-width="1.5"/><text x="1040.6" y="611.8" font-size="15" text-anchor="middle" fill="#e6e6e6">0</text><line x1="1035" y1="528.4" x2="1040.6" y2="528.4" stroke="#d0d0d0" stroke-width="1.5"/><text x="1033.5" y="533.6" font-size="15" text-anchor="end" fill="#e6e6e6">0,1</text><line x1="1120.1" y1="590.2" x2="1120.1" y2="595.8" stroke="#d0d0d0" stroke-width="1.5"/><text x="1120.1" y="611.8" font-size="15" text-anchor="middle" fill="#e6e6e6">0,1</text><line x1="1035" y1="466.3" x2="1040.6" y2="466.3" stroke="#d0d0d0" stroke-width="1.5"/><text x="1033.5" y="471.5" font-size="15" text-anchor="end" fill="#e6e6e6">0,2</text><line x1="1199.6" y1="590.2" x2="1199.6" y2="595.8" stroke="#d0d0d0" stroke-width="1.5"/><text x="1199.6" y="611.8" font-size="15" text-anchor="middle" fill="#e6e6e6">0,2</text><line x1="1035" y1="404.2" x2="1040.6" y2="404.2" stroke="#d0d0d0" stroke-width="1.5"/><text x="1033.5" y="409.4" font-size="15" text-anchor="end" fill="#e6e6e6">0,3</text><line x1="1279.1" y1="590.2" x2="1279.1" y2="595.8" stroke="#d0d0d0" stroke-width="1.5"/><text x="1279.1" y="611.8" font-size="15" text-anchor="middle" fill="#e6e6e6">0,3</text><line x1="1035" y1="342.1" x2="1040.6" y2="342.1" stroke="#d0d0d0" stroke-width="1.5"/><text x="1033.5" y="347.3" font-size="15" text-anchor="end" fill="#e6e6e6">0,4</text><line x1="1358.6" y1="590.2" x2="1358.6" y2="595.8" stroke="#d0d0d0" stroke-width="1.5"/><text x="1358.6" y="611.8" font-size="15" text-anchor="middle" fill="#e6e6e6">0,4</text><line x1="1035" y1="280.0" x2="1040.6" y2="280.0" stroke="#d0d0d0" stroke-width="1.5"/><text x="1033.5" y="285.2" font-size="15" text-anchor="end" fill="#e6e6e6">0,5</text><line x1="1438.1" y1="590.2" x2="1438.1" y2="595.8" stroke="#d0d0d0" stroke-width="1.5"/><text x="1438.1" y="611.8" font-size="15" text-anchor="middle" fill="#e6e6e6">0,5</text><line x1="1035" y1="217.9" x2="1040.6" y2="217.9" stroke="#d0d0d0" stroke-width="1.5"/><text x="1033.5" y="223.1" font-size="15" text-anchor="end" fill="#e6e6e6">0,6</text><line x1="1517.6" y1="590.2" x2="1517.6" y2="595.8" stroke="#d0d0d0" stroke-width="1.5"/><text x="1517.6" y="611.8" font-size="15" text-anchor="middle" fill="#e6e6e6">0,6</text><line x1="1035" y1="155.8" x2="1040.6" y2="155.8" stroke="#d0d0d0" stroke-width="1.5"/><text x="1033.5" y="161.0" font-size="15" text-anchor="end" fill="#e6e6e6">0,7</text><line x1="1597.1" y1="590.2" x2="1597.1" y2="595.8" stroke="#d0d0d0" stroke-width="1.5"/><text x="1597.1" y="611.8" font-size="15" text-anchor="middle" fill="#e6e6e6">0,7</text><line x1="1035" y1="93.7" x2="1040.6" y2="93.7" stroke="#d0d0d0" stroke-width="1.5"/><text x="1033.5" y="98.9" font-size="15" text-anchor="end" fill="#e6e6e6">0,8</text><line x1="1676.6" y1="590.2" x2="1676.6" y2="595.8" stroke="#d0d0d0" stroke-width="1.5"/><text x="1676.6" y="611.8" font-size="15" text-anchor="middle" fill="#e6e6e6">0,8</text><rect x="1279.8" y="345.2" width="13.2" height="13.2" fill="none" stroke="#ffffff" stroke-width="1.8"/><rect x="1278.3" y="312.0" width="13.2" height="13.2" fill="none" stroke="#ffffff" stroke-width="1.8"/><rect x="1275.8" y="279.8" width="13.2" height="13.2" fill="none" stroke="#ffffff" stroke-width="1.8"/><rect x="1274.4" y="247.2" width="13.2" height="13.2" fill="none" stroke="#ffffff" stroke-width="1.8"/><rect x="1271.4" y="210.7" width="13.2" height="13.2" fill="none" stroke="#ffffff" stroke-width="1.8"/><rect x="1299.3" y="356.7" width="13.2" height="13.2" fill="none" stroke="#ffffff" stroke-width="1.8"/><rect x="1316.4" y="334.3" width="13.2" height="13.2" fill="none" stroke="#ffffff" stroke-width="1.8"/><rect x="1333.4" y="311.8" width="13.2" height="13.2" fill="none" stroke="#ffffff" stroke-width="1.8"/><rect x="1348.9" y="292.5" width="13.2" height="13.2" fill="none" stroke="#ffffff" stroke-width="1.8"/><rect x="1366.9" y="269.8" width="13.2" height="13.2" fill="none" stroke="#ffffff" stroke-width="1.8"/><rect x="1333.2" y="379.4" width="13.2" height="13.2" fill="none" stroke="#ffffff" stroke-width="1.8"/><rect x="1386.3" y="377.9" width="13.2" height="13.2" fill="none" stroke="#ffffff" stroke-width="1.8"/><rect x="1434.4" y="377.9" width="13.2" height="13.2" fill="none" stroke="#ffffff" stroke-width="1.8"/><rect x="1484.9" y="377.9" width="13.2" height="13.2" fill="none" stroke="#ffffff" stroke-width="1.8"/><rect x="1542.4" y="377.9" width="13.2" height="13.2" fill="none" stroke="#ffffff" stroke-width="1.8"/><rect x="1284.0" y="400.2" width="13.2" height="13.2" fill="none" stroke="#ffffff" stroke-width="1.8"/><rect x="1285.2" y="423.0" width="13.2" height="13.2" fill="none" stroke="#ffffff" stroke-width="1.8"/><rect x="1285.5" y="442.3" width="13.2" height="13.2" fill="none" stroke="#ffffff" stroke-width="1.8"/><rect x="1286.9" y="465.0" width="13.2" height="13.2" fill="none" stroke="#ffffff" stroke-width="1.8"/><rect x="1288.4" y="487.3" width="13.2" height="13.2" fill="none" stroke="#ffffff" stroke-width="1.8"/><rect x="1255.8" y="412.7" width="13.2" height="13.2" fill="none" stroke="#ffffff" stroke-width="1.8"/><rect x="1230.9" y="444.8" width="13.2" height="13.2" fill="none" stroke="#ffffff" stroke-width="1.8"/><rect x="1205.9" y="477.3" width="13.2" height="13.2" fill="none" stroke="#ffffff" stroke-width="1.8"/><rect x="1180.5" y="509.5" width="13.2" height="13.2" fill="none" stroke="#ffffff" stroke-width="1.8"/><rect x="1152.3" y="545.7" width="13.2" height="13.2" fill="none" stroke="#ffffff" stroke-width="1.8"/><rect x="1268.4" y="379.3" width="13.2" height="13.2" fill="none" stroke="#ffffff" stroke-width="1.8"/><rect x="1254.9" y="379.3" width="13.2" height="13.2" fill="none" stroke="#ffffff" stroke-width="1.8"/><rect x="1240.8" y="379.3" width="13.2" height="13.2" fill="none" stroke="#ffffff" stroke-width="1.8"/><rect x="1226.9" y="379.3" width="13.2" height="13.2" fill="none" stroke="#ffffff" stroke-width="1.8"/><rect x="1212.6" y="379.3" width="13.2" height="13.2" fill="none" stroke="#ffffff" stroke-width="1.8"/><circle cx="1292.0" cy="353.5" r="4.4" fill="#94b094" stroke="#000" stroke-width="1.3"/><circle cx="1298.1" cy="323.9" r="4.4" fill="#84b084" stroke="#000" stroke-width="1.3"/><circle cx="1303.0" cy="292.9" r="4.4" fill="#6cb06c" stroke="#000" stroke-width="1.3"/><circle cx="1308.8" cy="262.0" r="4.4" fill="#4cb04c" stroke="#000" stroke-width="1.3"/><circle cx="1315.0" cy="231.4" r="4.4" fill="#00b000" stroke="#000" stroke-width="1.3"/><circle cx="1304.9" cy="362.8" r="4.4" fill="#c0c0a0" stroke="#000" stroke-width="1.3"/><circle cx="1324.2" cy="341.9" r="4.4" fill="#c0c090" stroke="#000" stroke-width="1.3"/><circle cx="1343.1" cy="323.0" r="4.4" fill="#c0c070" stroke="#000" stroke-width="1.3"/><circle cx="1361.0" cy="302.9" r="4.4" fill="#c0c050" stroke="#000" stroke-width="1.3"/><circle cx="1379.0" cy="283.4" r="4.4" fill="#c0c000" stroke="#000" stroke-width="1.3"/><circle cx="1328.9" cy="381.9" r="4.4" fill="#b48a8a" stroke="#000" stroke-width="1.3"/><circle cx="1373.5" cy="378.9" r="4.4" fill="#b46a6a" stroke="#000" stroke-width="1.3"/><circle cx="1412.8" cy="376.9" r="4.4" fill="#b45252" stroke="#000" stroke-width="1.3"/><circle cx="1454.9" cy="375.9" r="4.4" fill="#b84040" stroke="#000" stroke-width="1.3"/><circle cx="1493.0" cy="374.4" r="4.4" fill="#c00000" stroke="#000" stroke-width="1.3"/><circle cx="1284.0" cy="402.7" r="4.4" fill="#b898b8" stroke="#000" stroke-width="1.3"/><circle cx="1281.0" cy="420.8" r="4.4" fill="#b888b8" stroke="#000" stroke-width="1.3"/><circle cx="1278.0" cy="435.7" r="4.4" fill="#b874b8" stroke="#000" stroke-width="1.3"/><circle cx="1275.0" cy="452.9" r="4.4" fill="#b854b8" stroke="#000" stroke-width="1.3"/><circle cx="1272.4" cy="469.9" r="4.4" fill="#c000c0" stroke="#000" stroke-width="1.3"/><circle cx="1261.2" cy="412.2" r="4.4" fill="#9494b0" stroke="#000" stroke-width="1.3"/><circle cx="1235.0" cy="440.2" r="4.4" fill="#8080b0" stroke="#000" stroke-width="1.3"/><circle cx="1210.9" cy="467.0" r="4.4" fill="#6a6ab0" stroke="#000" stroke-width="1.3"/><circle cx="1190.2" cy="489.3" r="4.4" fill="#4a4ab0" stroke="#000" stroke-width="1.3"/><circle cx="1169.0" cy="513.3" r="4.4" fill="#0000a8" stroke="#000" stroke-width="1.3"/><circle cx="1275.0" cy="383.9" r="4.4" fill="#a8b8b8" stroke="#000" stroke-width="1.3"/><circle cx="1265.4" cy="383.9" r="4.4" fill="#90b4b4" stroke="#000" stroke-width="1.3"/><circle cx="1254.0" cy="385.9" r="4.4" fill="#74b4b4" stroke="#000" stroke-width="1.3"/><circle cx="1244.5" cy="385.9" r="4.4" fill="#50b4b4" stroke="#000" stroke-width="1.3"/><circle cx="1235.0" cy="385.9" r="4.4" fill="#10b0b0" stroke="#000" stroke-width="1.3"/><rect x="1282.7" y="379.3" width="13.2" height="13.2" fill="none" stroke="#000000" stroke-width="1.8"/><circle cx="1285.2" cy="385.9" r="4.4" fill="#ffffff" stroke="#000" stroke-width="1.3"/><g clip-path="url(#insU)"><g filter="url(#bl)"><path fill="#649b00" d="M1502 54h8v8h-8z"/><path fill="#699b00" d="M1510 54h16v8h-16zM1502 62h24v8h-24zM1502 70h16v8h-16zM1502 78h8v8h-8zM1502 86h8v8h-8z"/><path fill="#6e9b00" d="M1526 54h24v8h-24zM1526 62h16v8h-16zM1518 70h16v8h-16zM1510 78h24v8h-24zM1510 86h16v8h-16zM1502 94h16v8h-16zM1502 102h16v8h-16zM1502 110h8v8h-8z"/><path fill="#739b00" d="M1550 54h16v8h-16zM1542 62h16v8h-16zM1534 70h24v8h-24zM1534 78h16v8h-16zM1526 86h16v8h-16zM1518 94h24v8h-24zM1518 102h16v8h-16zM1510 110h16v8h-16zM1502 118h24v8h-24z"/><path fill="#789b00" d="M1566 54h24v8h-24zM1558 62h24v8h-24zM1558 70h16v8h-16zM1550 78h16v8h-16zM1542 86h24v8h-24zM1542 94h16v8h-16zM1534 102h16v8h-16zM1526 110h24v8h-24zM1526 118h16v8h-16zM1518 126h16v8h-16z"/><path fill="#7d9b00" d="M1590 54h16v8h-16zM1582 62h16v8h-16zM1574 70h16v8h-16zM1566 78h24v8h-24zM1566 86h16v8h-16zM1558 94h16v8h-16zM1550 102h24v8h-24zM1550 110h16v8h-16zM1542 118h16v8h-16zM1534 126h16v8h-16zM1526 134h24v8h-24z"/><path fill="#829b00" d="M1606 54h16v8h-16zM1598 62h24v8h-24zM1590 70h24v8h-24zM1590 78h16v8h-16zM1582 86h16v8h-16zM1574 94h24v8h-24zM1574 102h16v8h-16zM1566 110h16v8h-16zM1558 118h16v8h-16zM1550 126h24v8h-24zM1550 134h16v8h-16zM1542 142h16v8h-16z"/><path fill="#879b00" d="M1622 54h24v8h-24zM1622 62h16v8h-16zM1614 70h16v8h-16zM1606 78h16v8h-16zM1598 86h24v8h-24zM1598 94h16v8h-16zM1590 102h16v8h-16zM1582 110h16v8h-16zM1574 118h24v8h-24zM1574 126h16v8h-16zM1566 134h16v8h-16zM1558 142h16v8h-16zM1558 150h16v8h-16z"/><path fill="#8c9b00" d="M1646 54h16v8h-16zM1638 62h16v8h-16zM1630 70h16v8h-16zM1622 78h24v8h-24zM1622 86h16v8h-16zM1614 94h16v8h-16zM1606 102h16v8h-16zM1598 110h24v8h-24zM1598 118h16v8h-16zM1590 126h16v8h-16zM1582 134h16v8h-16zM1574 142h24v8h-24zM1574 150h16v8h-16zM1566 158h16v8h-16z"/><path fill="#919b00" d="M1662 54h16v8h-16zM1654 62h16v8h-16zM1646 70h24v8h-24zM1646 78h16v8h-16zM1638 86h16v8h-16zM1630 94h16v8h-16zM1622 102h24v8h-24zM1622 110h16v8h-16zM1614 118h16v8h-16zM1606 126h16v8h-16zM1598 134h16v8h-16zM1598 142h16v8h-16zM1590 150h16v8h-16zM1582 158h16v8h-16zM1582 166h8v8h-8z"/><path fill="#969b00" d="M1678 54h16v8h-16zM1670 62h24v8h-24zM1670 70h16v8h-16zM1662 78h16v8h-16zM1654 86h16v8h-16zM1646 94h16v8h-16zM1646 102h16v8h-16zM1638 110h16v8h-16zM1630 118h16v8h-16zM1622 126h16v8h-16zM1614 134h24v8h-24zM1614 142h16v8h-16zM1606 150h16v8h-16zM1598 158h16v8h-16zM1590 166h16v8h-16zM1598 174h8v8h-8z"/><path fill="#9b9b00" d="M1694 54h8v8h-8zM1670 86h8v8h-8zM1662 94h8v8h-8zM1646 118h8v8h-8zM1638 126h8v8h-8zM1614 158h8v8h-8zM1606 166h8v8h-8z"/><path fill="#9b9600" d="M1702 54h16v8h-16zM1694 62h16v8h-16zM1686 70h16v8h-16zM1678 78h24v8h-24zM1678 86h16v8h-16zM1670 94h16v8h-16zM1662 102h16v8h-16zM1654 110h16v8h-16zM1654 118h16v8h-16zM1646 126h16v8h-16zM1638 134h16v8h-16zM1630 142h16v8h-16zM1622 150h24v8h-24zM1622 158h16v8h-16zM1614 166h16v8h-16zM1606 174h16v8h-16zM1606 182h8v8h-8z"/><path fill="#9b9100" d="M1718 54h8v8h-8zM1710 62h16v8h-16zM1702 70h24v8h-24zM1702 78h16v8h-16zM1694 86h16v8h-16zM1686 94h16v8h-16zM1678 102h24v8h-24zM1670 110h24v8h-24zM1670 118h16v8h-16zM1662 126h16v8h-16zM1654 134h16v8h-16zM1646 142h24v8h-24zM1646 150h16v8h-16zM1638 158h16v8h-16zM1630 166h16v8h-16zM1622 174h16v8h-16zM1614 182h24v8h-24zM1622 190h8v8h-8z"/><path fill="#9b8c00" d="M1718 78h8v8h-8zM1710 86h16v8h-16zM1702 94h24v8h-24zM1702 102h16v8h-16zM1694 110h16v8h-16zM1686 118h16v8h-16zM1678 126h24v8h-24zM1670 134h24v8h-24zM1670 142h16v8h-16zM1662 150h16v8h-16zM1654 158h16v8h-16zM1646 166h24v8h-24zM1638 174h24v8h-24zM1638 182h16v8h-16zM1630 190h16v8h-16zM1630 198h8v8h-8z"/><path fill="#9b8700" d="M1718 102h8v8h-8zM1710 110h16v8h-16zM1702 118h24v8h-24zM1702 126h16v8h-16zM1694 134h16v8h-16zM1686 142h24v8h-24zM1678 150h24v8h-24zM1670 158h24v8h-24zM1670 166h16v8h-16zM1662 174h16v8h-16zM1654 182h16v8h-16zM1646 190h24v8h-24zM1638 198h24v8h-24zM1646 206h8v8h-8z"/><path fill="#739b05" d="M1502 126h16v8h-16zM1502 134h8v8h-8zM1502 142h8v8h-8z"/><path fill="#9b8200" d="M1718 126h8v8h-8zM1710 134h16v8h-16zM1710 142h16v8h-16zM1702 150h16v8h-16zM1694 158h16v8h-16zM1686 166h24v8h-24zM1678 174h24v8h-24zM1670 182h24v8h-24zM1670 190h16v8h-16zM1662 198h16v8h-16zM1654 206h16v8h-16zM1654 214h16v8h-16z"/><path fill="#789b05" d="M1510 134h16v8h-16zM1510 142h16v8h-16zM1502 150h16v8h-16zM1502 158h8v8h-8zM1502 166h8v8h-8z"/><path fill="#7d9b05" d="M1526 142h16v8h-16zM1518 150h16v8h-16zM1510 158h24v8h-24zM1510 166h16v8h-16z"/><path fill="#829b05" d="M1534 150h24v8h-24zM1534 158h16v8h-16zM1526 166h16v8h-16zM1518 174h16v8h-16zM1526 182h8v8h-8z"/><path fill="#9b7d00" d="M1718 150h8v8h-8zM1710 158h16v8h-16zM1710 166h16v8h-16zM1702 174h24v8h-24zM1694 182h24v8h-24zM1686 190h24v8h-24zM1678 198h24v8h-24zM1670 206h24v8h-24zM1670 214h16v8h-16zM1670 222h8v8h-8z"/><path fill="#879b05" d="M1550 158h16v8h-16zM1542 166h16v8h-16zM1534 174h16v8h-16zM1534 182h16v8h-16z"/><path fill="#8c9b05" d="M1558 166h16v8h-16zM1550 174h24v8h-24zM1550 182h16v8h-16zM1542 190h16v8h-16z"/><path fill="#919b05" d="M1574 166h8v8h-8zM1574 174h16v8h-16zM1566 182h16v8h-16zM1558 190h16v8h-16zM1558 198h8v8h-8z"/><path fill="#7d9b0a" d="M1502 174h16v8h-16zM1502 182h8v8h-8zM1502 190h8v8h-8z"/><path fill="#969b05" d="M1590 174h8v8h-8zM1582 182h16v8h-16zM1574 190h16v8h-16zM1566 198h16v8h-16zM1574 206h8v8h-8z"/><path fill="#829b0a" d="M1510 182h16v8h-16zM1510 190h16v8h-16zM1502 198h16v8h-16zM1502 206h8v8h-8z"/><path fill="#9b9605" d="M1598 182h8v8h-8zM1598 190h16v8h-16zM1590 198h16v8h-16zM1582 206h16v8h-16zM1582 214h8v8h-8z"/><path fill="#9b7800" d="M1718 182h8v8h-8zM1710 190h16v8h-16zM1702 198h24v8h-24zM1694 206h24v8h-24zM1686 214h24v8h-24zM1678 222h24v8h-24zM1678 230h16v8h-16z"/><path fill="#879b0a" d="M1526 190h16v8h-16zM1518 198h16v8h-16zM1510 206h24v8h-24zM1510 214h16v8h-16z"/><path fill="#9b9b05" d="M1590 190h8v8h-8zM1582 198h8v8h-8z"/><path fill="#9b9105" d="M1614 190h8v8h-8zM1606 198h16v8h-16zM1598 206h16v8h-16zM1590 214h16v8h-16zM1598 222h8v8h-8z"/><path fill="#8c9b0a" d="M1534 198h16v8h-16zM1534 206h16v8h-16zM1526 214h16v8h-16zM1526 222h8v8h-8z"/><path fill="#919b0a" d="M1550 198h8v8h-8zM1550 206h16v8h-16zM1542 214h16v8h-16zM1534 222h16v8h-16z"/><path fill="#9b8c05" d="M1622 198h8v8h-8zM1614 206h16v8h-16zM1606 214h24v8h-24zM1606 222h16v8h-16zM1606 230h8v8h-8z"/><path fill="#969b0a" d="M1566 206h8v8h-8zM1558 214h16v8h-16zM1550 222h16v8h-16zM1542 230h16v8h-16zM1550 238h8v8h-8z"/><path fill="#9b8705" d="M1630 206h16v8h-16zM1630 214h16v8h-16zM1622 222h16v8h-16zM1614 230h16v8h-16zM1614 238h16v8h-16z"/><path fill="#9b7300" d="M1718 206h8v8h-8zM1710 214h16v8h-16zM1702 222h24v8h-24zM1694 230h24v8h-24zM1694 238h24v8h-24zM1702 246h8v8h-8z"/><path fill="#829b0f" d="M1502 214h8v8h-8z"/><path fill="#9b960a" d="M1574 214h8v8h-8zM1566 222h16v8h-16zM1566 230h16v8h-16zM1558 238h16v8h-16z"/><path fill="#9b8205" d="M1646 214h8v8h-8zM1638 222h24v8h-24zM1630 230h24v8h-24zM1630 238h16v8h-16zM1630 246h8v8h-8z"/><path fill="#879b0f" d="M1502 222h16v8h-16zM1502 230h8v8h-8zM1502 238h8v8h-8z"/><path fill="#8c9b0f" d="M1518 222h8v8h-8zM1510 230h16v8h-16zM1510 238h16v8h-16zM1502 246h16v8h-16zM1502 254h8v8h-8z"/><path fill="#9b910a" d="M1582 222h16v8h-16zM1582 230h16v8h-16zM1574 238h16v8h-16zM1566 246h16v8h-16z"/><path fill="#9b7d05" d="M1662 222h8v8h-8zM1654 230h24v8h-24zM1646 238h24v8h-24zM1638 246h24v8h-24zM1638 254h16v8h-16z"/><path fill="#919b0f" d="M1526 230h16v8h-16zM1526 238h16v8h-16zM1518 246h16v8h-16zM1510 254h16v8h-16z"/><path fill="#9b9b0a" d="M1558 230h8v8h-8z"/><path fill="#9b8c0a" d="M1598 230h8v8h-8zM1590 238h16v8h-16zM1582 246h16v8h-16zM1574 254h24v8h-24zM1582 262h8v8h-8z"/><path fill="#9b6e00" d="M1718 230h8v8h-8zM1718 238h8v8h-8zM1710 246h16v8h-16zM1718 254h8v8h-8z"/><path fill="#969b0f" d="M1542 238h8v8h-8zM1534 246h16v8h-16zM1526 254h16v8h-16zM1518 262h16v8h-16z"/><path fill="#9b870a" d="M1606 238h8v8h-8zM1598 246h24v8h-24zM1598 254h16v8h-16zM1590 262h16v8h-16zM1590 270h8v8h-8z"/><path fill="#9b7805" d="M1670 238h24v8h-24zM1662 246h24v8h-24zM1654 254h24v8h-24zM1646 262h24v8h-24z"/><path fill="#9b960f" d="M1550 246h16v8h-16zM1542 254h16v8h-16zM1542 262h16v8h-16zM1534 270h16v8h-16z"/><path fill="#9b820a" d="M1622 246h8v8h-8zM1614 254h16v8h-16zM1606 262h24v8h-24zM1598 270h24v8h-24z"/><path fill="#9b7305" d="M1686 246h16v8h-16zM1678 254h24v8h-24zM1670 262h24v8h-24zM1662 270h24v8h-24z"/><path fill="#9b910f" d="M1558 254h16v8h-16zM1558 262h16v8h-16zM1550 270h16v8h-16z"/><path fill="#9b7d0a" d="M1630 254h8v8h-8zM1630 262h16v8h-16zM1622 270h16v8h-16z"/><path fill="#9b6e05" d="M1702 254h16v8h-16zM1694 262h24v8h-24zM1686 270h24v8h-24z"/><path fill="#919b14" d="M1502 262h16v8h-16zM1502 270h8v8h-8z"/><path fill="#9b9b0f" d="M1534 262h8v8h-8z"/><path fill="#9b8c0f" d="M1574 262h8v8h-8zM1566 270h16v8h-16z"/><path fill="#9b6905" d="M1718 262h8v8h-8zM1710 270h16v8h-16z"/><path fill="#969b14" d="M1510 270h16v8h-16z"/><path fill="#9b9b14" d="M1526 270h8v8h-8z"/><path fill="#9b870f" d="M1582 270h8v8h-8z"/><path fill="#9b780a" d="M1638 270h24v8h-24z"/></g></g><g clip-path="url(#insL)"><g filter="url(#bl)"><path fill="#aaff00" d="M1502 54h8v8h-8zM1502 62h8v8h-8z"/><path fill="#afff00" d="M1510 54h16v8h-16zM1510 62h8v8h-8zM1502 70h8v8h-8zM1502 78h8v8h-8z"/><path fill="#b4ff00" d="M1526 54h8v8h-8zM1518 62h16v8h-16zM1510 70h16v8h-16zM1510 78h8v8h-8zM1502 86h16v8h-16zM1502 94h8v8h-8z"/><path fill="#b9ff00" d="M1534 54h16v8h-16zM1534 62h8v8h-8zM1526 70h8v8h-8zM1518 78h16v8h-16zM1518 86h8v8h-8zM1510 94h8v8h-8zM1502 102h16v8h-16z"/><path fill="#beff00" d="M1550 54h8v8h-8zM1542 62h8v8h-8zM1534 70h16v8h-16zM1534 78h8v8h-8zM1526 86h8v8h-8zM1518 94h16v8h-16zM1518 102h8v8h-8zM1510 110h8v8h-8z"/><path fill="#c3ff00" d="M1558 54h16v8h-16zM1550 62h16v8h-16zM1550 70h8v8h-8zM1542 78h16v8h-16zM1534 86h16v8h-16zM1534 94h8v8h-8zM1526 102h8v8h-8zM1518 110h16v8h-16zM1518 118h8v8h-8z"/><path fill="#c8ff00" d="M1574 54h8v8h-8zM1566 62h8v8h-8zM1558 70h16v8h-16zM1558 78h8v8h-8zM1550 86h8v8h-8zM1542 94h16v8h-16zM1534 102h16v8h-16zM1534 110h8v8h-8zM1526 118h8v8h-8z"/><path fill="#cdff00" d="M1582 54h8v8h-8zM1574 62h16v8h-16zM1574 70h8v8h-8zM1566 78h8v8h-8zM1558 86h16v8h-16zM1558 94h8v8h-8zM1550 102h8v8h-8zM1542 110h16v8h-16zM1534 118h16v8h-16zM1534 126h8v8h-8z"/><path fill="#d2ff00" d="M1590 54h16v8h-16zM1590 62h8v8h-8zM1582 70h8v8h-8zM1574 78h16v8h-16zM1574 86h8v8h-8zM1566 94h8v8h-8zM1558 102h16v8h-16zM1558 110h8v8h-8zM1550 118h8v8h-8zM1542 126h8v8h-8z"/><path fill="#d7ff00" d="M1606 54h8v8h-8zM1598 62h16v8h-16zM1590 70h16v8h-16zM1590 78h8v8h-8zM1582 86h8v8h-8zM1574 94h16v8h-16zM1574 102h8v8h-8zM1566 110h8v8h-8zM1558 118h16v8h-16zM1550 126h16v8h-16zM1550 134h8v8h-8z"/><path fill="#dcff00" d="M1614 54h16v8h-16zM1614 62h8v8h-8zM1606 70h8v8h-8zM1598 78h16v8h-16zM1590 86h16v8h-16zM1590 94h8v8h-8zM1582 102h8v8h-8zM1574 110h16v8h-16zM1574 118h8v8h-8zM1566 126h8v8h-8zM1558 134h8v8h-8zM1558 142h8v8h-8z"/><path fill="#e1ff00" d="M1630 54h8v8h-8zM1622 62h8v8h-8zM1614 70h16v8h-16zM1614 78h8v8h-8zM1606 86h8v8h-8zM1598 94h8v8h-8zM1590 102h16v8h-16zM1590 110h8v8h-8zM1582 118h8v8h-8zM1574 126h8v8h-8zM1566 134h16v8h-16zM1566 142h8v8h-8z"/><path fill="#e6ff00" d="M1638 54h8v8h-8zM1630 62h16v8h-16zM1630 70h8v8h-8zM1622 78h8v8h-8zM1614 86h8v8h-8zM1606 94h16v8h-16zM1606 102h8v8h-8zM1598 110h8v8h-8zM1590 118h16v8h-16zM1582 126h16v8h-16zM1582 134h8v8h-8zM1574 142h8v8h-8zM1574 150h8v8h-8z"/><path fill="#ebff00" d="M1646 54h16v8h-16zM1646 62h8v8h-8zM1638 70h8v8h-8zM1630 78h16v8h-16zM1622 86h16v8h-16zM1622 94h8v8h-8zM1614 102h8v8h-8zM1606 110h16v8h-16zM1606 118h8v8h-8zM1598 126h8v8h-8zM1590 134h8v8h-8zM1582 142h16v8h-16zM1582 150h8v8h-8z"/><path fill="#f0ff00" d="M1662 54h8v8h-8zM1654 62h8v8h-8zM1646 70h16v8h-16zM1646 78h8v8h-8zM1638 86h8v8h-8zM1630 94h8v8h-8zM1622 102h16v8h-16zM1622 110h8v8h-8zM1614 118h8v8h-8zM1606 126h8v8h-8zM1598 134h16v8h-16zM1598 142h8v8h-8zM1590 150h8v8h-8zM1582 158h8v8h-8z"/><path fill="#f5ff00" d="M1670 54h16v8h-16zM1662 62h16v8h-16zM1662 70h8v8h-8zM1654 78h8v8h-8zM1646 86h8v8h-8zM1638 94h16v8h-16zM1638 102h8v8h-8zM1630 110h8v8h-8zM1622 118h8v8h-8zM1614 126h16v8h-16zM1614 134h8v8h-8zM1606 142h8v8h-8zM1598 150h8v8h-8zM1590 158h16v8h-16z"/><path fill="#faff00" d="M1686 54h8v8h-8zM1678 62h8v8h-8zM1670 70h8v8h-8zM1662 78h16v8h-16zM1654 86h16v8h-16zM1654 94h8v8h-8zM1646 102h8v8h-8zM1638 110h8v8h-8zM1630 118h16v8h-16zM1630 126h8v8h-8zM1622 134h8v8h-8zM1614 142h8v8h-8zM1606 150h16v8h-16zM1606 158h8v8h-8zM1598 166h8v8h-8z"/><path fill="#ffff00" d="M1694 54h8v8h-8zM1686 62h8v8h-8zM1678 70h16v8h-16zM1678 78h8v8h-8zM1670 86h8v8h-8zM1662 94h8v8h-8zM1654 102h16v8h-16zM1646 110h16v8h-16zM1646 118h8v8h-8zM1638 126h8v8h-8zM1630 134h8v8h-8zM1622 142h16v8h-16zM1622 150h8v8h-8zM1614 158h8v8h-8zM1606 166h8v8h-8z"/><path fill="#fffa00" d="M1702 54h16v8h-16zM1694 62h16v8h-16zM1694 70h8v8h-8zM1686 78h8v8h-8zM1678 86h8v8h-8zM1670 94h16v8h-16zM1670 102h8v8h-8zM1662 110h8v8h-8zM1654 118h8v8h-8zM1646 126h8v8h-8zM1638 134h16v8h-16zM1638 142h8v8h-8zM1630 150h8v8h-8zM1622 158h8v8h-8zM1614 166h16v8h-16zM1614 174h8v8h-8z"/><path fill="#fff500" d="M1718 54h8v8h-8zM1710 62h8v8h-8zM1702 70h8v8h-8zM1694 78h16v8h-16zM1686 86h16v8h-16zM1686 94h8v8h-8zM1678 102h8v8h-8zM1670 110h8v8h-8zM1662 118h16v8h-16zM1654 126h16v8h-16zM1654 134h8v8h-8zM1646 142h8v8h-8zM1638 150h8v8h-8zM1630 158h16v8h-16zM1630 166h8v8h-8zM1622 174h8v8h-8z"/><path fill="#fff000" d="M1718 62h8v8h-8zM1710 70h16v8h-16zM1710 78h8v8h-8zM1702 86h8v8h-8zM1694 94h8v8h-8zM1686 102h16v8h-16zM1678 110h16v8h-16zM1678 118h8v8h-8zM1670 126h8v8h-8zM1662 134h8v8h-8zM1654 142h16v8h-16zM1646 150h16v8h-16zM1646 158h8v8h-8zM1638 166h8v8h-8zM1630 174h8v8h-8zM1622 182h16v8h-16z"/><path fill="#ffeb00" d="M1718 78h8v8h-8zM1710 86h16v8h-16zM1702 94h16v8h-16zM1702 102h8v8h-8zM1694 110h8v8h-8zM1686 118h8v8h-8zM1678 126h16v8h-16zM1670 134h16v8h-16zM1670 142h8v8h-8zM1662 150h8v8h-8zM1654 158h8v8h-8zM1646 166h16v8h-16zM1638 174h16v8h-16zM1638 182h8v8h-8z"/><path fill="#ffe600" d="M1718 94h8v8h-8zM1710 102h16v8h-16zM1702 110h16v8h-16zM1694 118h16v8h-16zM1694 126h8v8h-8zM1686 134h8v8h-8zM1678 142h8v8h-8zM1670 150h16v8h-16zM1662 158h16v8h-16zM1662 166h8v8h-8zM1654 174h8v8h-8zM1646 182h8v8h-8zM1638 190h16v8h-16z"/><path fill="#b9ff05" d="M1502 110h8v8h-8z"/><path fill="#ffe100" d="M1718 110h8v8h-8zM1710 118h8v8h-8zM1702 126h16v8h-16zM1694 134h16v8h-16zM1686 142h16v8h-16zM1686 150h8v8h-8zM1678 158h8v8h-8zM1670 166h16v8h-16zM1662 174h16v8h-16zM1654 182h16v8h-16zM1654 190h8v8h-8zM1646 198h8v8h-8z"/><path fill="#beff05" d="M1502 118h16v8h-16zM1502 126h8v8h-8z"/><path fill="#ffdc00" d="M1718 118h8v8h-8zM1718 126h8v8h-8zM1710 134h8v8h-8zM1702 142h16v8h-16zM1694 150h16v8h-16zM1686 158h16v8h-16zM1686 166h8v8h-8zM1678 174h8v8h-8zM1670 182h8v8h-8zM1662 190h16v8h-16zM1654 198h16v8h-16z"/><path fill="#c3ff05" d="M1510 126h8v8h-8zM1502 134h16v8h-16z"/><path fill="#c8ff05" d="M1518 126h16v8h-16zM1518 134h8v8h-8zM1510 142h8v8h-8z"/><path fill="#cdff05" d="M1526 134h8v8h-8zM1518 142h16v8h-16z"/><path fill="#d2ff05" d="M1534 134h16v8h-16zM1534 142h8v8h-8zM1526 150h8v8h-8z"/><path fill="#ffd700" d="M1718 134h8v8h-8zM1718 142h8v8h-8zM1710 150h8v8h-8zM1702 158h8v8h-8zM1694 166h16v8h-16zM1686 174h16v8h-16zM1678 182h16v8h-16zM1678 190h8v8h-8zM1670 198h8v8h-8zM1662 206h8v8h-8z"/><path fill="#c3ff0a" d="M1502 142h8v8h-8z"/><path fill="#d7ff05" d="M1542 142h8v8h-8zM1534 150h16v8h-16zM1534 158h8v8h-8z"/><path fill="#dcff05" d="M1550 142h8v8h-8zM1550 150h8v8h-8zM1542 158h8v8h-8z"/><path fill="#c8ff0a" d="M1502 150h16v8h-16zM1502 158h8v8h-8z"/><path fill="#cdff0a" d="M1518 150h8v8h-8zM1510 158h8v8h-8zM1502 166h16v8h-16z"/><path fill="#e1ff05" d="M1558 150h8v8h-8zM1550 158h16v8h-16zM1550 166h8v8h-8z"/><path fill="#e6ff05" d="M1566 150h8v8h-8zM1566 158h8v8h-8zM1558 166h8v8h-8z"/><path fill="#ffd200" d="M1718 150h8v8h-8zM1710 158h16v8h-16zM1710 166h8v8h-8zM1702 174h8v8h-8zM1694 182h16v8h-16zM1686 190h16v8h-16zM1678 198h16v8h-16zM1670 206h16v8h-16zM1670 214h8v8h-8z"/><path fill="#d2ff0a" d="M1518 158h16v8h-16zM1518 166h8v8h-8z"/><path fill="#ebff05" d="M1574 158h8v8h-8zM1566 166h8v8h-8zM1566 174h8v8h-8z"/><path fill="#d7ff0a" d="M1526 166h8v8h-8zM1518 174h8v8h-8z"/><path fill="#dcff0a" d="M1534 166h8v8h-8zM1526 174h16v8h-16zM1526 182h8v8h-8z"/><path fill="#e1ff0a" d="M1542 166h8v8h-8zM1542 174h8v8h-8zM1534 182h8v8h-8z"/><path fill="#f0ff05" d="M1574 166h16v8h-16zM1574 174h8v8h-8z"/><path fill="#f5ff05" d="M1590 166h8v8h-8zM1582 174h8v8h-8z"/><path fill="#ffcd00" d="M1718 166h8v8h-8zM1710 174h16v8h-16zM1710 182h8v8h-8zM1702 190h8v8h-8zM1694 198h16v8h-16zM1686 206h16v8h-16zM1678 214h16v8h-16z"/><path fill="#cdff0f" d="M1502 174h8v8h-8z"/><path fill="#d2ff0f" d="M1510 174h8v8h-8zM1502 182h8v8h-8zM1502 190h8v8h-8z"/><path fill="#e6ff0a" d="M1550 174h8v8h-8zM1542 182h16v8h-16zM1542 190h8v8h-8z"/><path fill="#ebff0a" d="M1558 174h8v8h-8zM1558 182h8v8h-8zM1550 190h8v8h-8z"/><path fill="#faff05" d="M1590 174h8v8h-8zM1582 182h16v8h-16z"/><path fill="#ffff05" d="M1598 174h16v8h-16zM1598 182h8v8h-8zM1590 190h8v8h-8z"/><path fill="#d7ff0f" d="M1510 182h16v8h-16zM1510 190h8v8h-8z"/><path fill="#f0ff0a" d="M1566 182h8v8h-8zM1558 190h8v8h-8zM1558 198h8v8h-8z"/><path fill="#f5ff0a" d="M1574 182h8v8h-8zM1566 190h16v8h-16zM1566 198h8v8h-8z"/><path fill="#fffa05" d="M1606 182h8v8h-8zM1598 190h8v8h-8z"/><path fill="#fff505" d="M1614 182h8v8h-8zM1606 190h8v8h-8zM1606 198h8v8h-8z"/><path fill="#ffc800" d="M1718 182h8v8h-8zM1710 190h16v8h-16zM1710 198h8v8h-8zM1702 206h8v8h-8zM1694 214h16v8h-16zM1686 222h16v8h-16z"/><path fill="#dcff0f" d="M1518 190h8v8h-8zM1510 198h16v8h-16z"/><path fill="#e1ff0f" d="M1526 190h16v8h-16zM1526 198h8v8h-8z"/><path fill="#faff0a" d="M1582 190h8v8h-8zM1574 198h8v8h-8z"/><path fill="#fff005" d="M1614 190h16v8h-16zM1614 198h8v8h-8z"/><path fill="#ffeb05" d="M1630 190h8v8h-8zM1622 198h8v8h-8zM1614 206h16v8h-16z"/><path fill="#d7ff14" d="M1502 198h8v8h-8zM1502 206h8v8h-8z"/><path fill="#e6ff0f" d="M1534 198h8v8h-8zM1526 206h8v8h-8z"/><path fill="#ebff0f" d="M1542 198h8v8h-8zM1534 206h16v8h-16z"/><path fill="#f0ff0f" d="M1550 198h8v8h-8zM1550 206h8v8h-8zM1542 214h8v8h-8z"/><path fill="#ffff0a" d="M1582 198h8v8h-8zM1574 206h8v8h-8z"/><path fill="#fffa0a" d="M1590 198h8v8h-8zM1582 206h16v8h-16zM1582 214h8v8h-8z"/><path fill="#fff50a" d="M1598 198h8v8h-8zM1598 206h8v8h-8zM1590 214h8v8h-8z"/><path fill="#ffe605" d="M1630 198h16v8h-16zM1630 206h8v8h-8z"/><path fill="#ffc300" d="M1718 198h8v8h-8zM1710 206h16v8h-16zM1710 214h8v8h-8zM1702 222h16v8h-16zM1702 230h8v8h-8z"/><path fill="#dcff14" d="M1510 206h8v8h-8zM1502 214h8v8h-8z"/><path fill="#e1ff14" d="M1518 206h8v8h-8zM1510 214h8v8h-8zM1502 222h16v8h-16z"/><path fill="#f5ff0f" d="M1558 206h8v8h-8zM1550 214h8v8h-8z"/><path fill="#faff0f" d="M1566 206h8v8h-8zM1558 214h8v8h-8zM1558 222h8v8h-8z"/><path fill="#fff00a" d="M1606 206h8v8h-8zM1598 214h8v8h-8zM1598 222h8v8h-8z"/><path fill="#ffe105" d="M1638 206h8v8h-8zM1630 214h16v8h-16z"/><path fill="#ffdc05" d="M1646 206h16v8h-16zM1646 214h8v8h-8zM1638 222h8v8h-8z"/><path fill="#e6ff14" d="M1518 214h16v8h-16zM1518 222h8v8h-8z"/><path fill="#ebff14" d="M1534 214h8v8h-8zM1526 222h8v8h-8zM1518 230h8v8h-8z"/><path fill="#ffff0f" d="M1566 214h16v8h-16zM1566 222h8v8h-8z"/><path fill="#ffeb0a" d="M1606 214h16v8h-16zM1606 222h8v8h-8z"/><path fill="#ffe60a" d="M1622 214h8v8h-8zM1614 222h8v8h-8zM1606 230h16v8h-16z"/><path fill="#ffd705" d="M1654 214h16v8h-16zM1646 222h16v8h-16zM1646 230h8v8h-8z"/><path fill="#ffbe00" d="M1718 214h8v8h-8zM1718 222h8v8h-8zM1710 230h8v8h-8zM1710 238h8v8h-8z"/><path fill="#f0ff14" d="M1534 222h8v8h-8zM1526 230h16v8h-16z"/><path fill="#f5ff14" d="M1542 222h8v8h-8zM1542 230h8v8h-8zM1534 238h8v8h-8z"/><path fill="#faff14" d="M1550 222h8v8h-8zM1550 230h8v8h-8zM1542 238h8v8h-8z"/><path fill="#fffa0f" d="M1574 222h8v8h-8zM1566 230h8v8h-8z"/><path fill="#fff50f" d="M1582 222h8v8h-8zM1574 230h16v8h-16zM1574 238h8v8h-8z"/><path fill="#fff00f" d="M1590 222h8v8h-8zM1590 230h8v8h-8zM1582 238h8v8h-8z"/><path fill="#ffe10a" d="M1622 222h16v8h-16zM1622 230h8v8h-8zM1614 238h8v8h-8z"/><path fill="#ffd205" d="M1662 222h8v8h-8zM1654 230h16v8h-16z"/><path fill="#ffcd05" d="M1670 222h16v8h-16zM1670 230h8v8h-8zM1662 238h8v8h-8z"/><path fill="#e1ff19" d="M1502 230h8v8h-8z"/><path fill="#e6ff19" d="M1510 230h8v8h-8zM1502 238h8v8h-8zM1502 246h8v8h-8z"/><path fill="#ffff14" d="M1558 230h8v8h-8zM1550 238h8v8h-8zM1550 246h8v8h-8z"/><path fill="#ffeb0f" d="M1598 230h8v8h-8zM1590 238h8v8h-8zM1590 246h8v8h-8z"/><path fill="#ffdc0a" d="M1630 230h8v8h-8zM1622 238h16v8h-16z"/><path fill="#ffd70a" d="M1638 230h8v8h-8zM1638 238h8v8h-8zM1630 246h8v8h-8z"/><path fill="#ffc805" d="M1678 230h16v8h-16zM1670 238h16v8h-16zM1670 246h8v8h-8z"/><path fill="#ffc305" d="M1694 230h8v8h-8zM1686 238h16v8h-16zM1678 246h16v8h-16z"/><path fill="#ffb900" d="M1718 230h8v8h-8zM1718 238h8v8h-8z"/><path fill="#ebff19" d="M1510 238h16v8h-16zM1510 246h8v8h-8z"/><path fill="#f0ff19" d="M1526 238h8v8h-8zM1518 246h8v8h-8z"/><path fill="#fffa14" d="M1558 238h8v8h-8zM1558 246h8v8h-8z"/><path fill="#fff514" d="M1566 238h8v8h-8zM1566 246h8v8h-8zM1558 254h8v8h-8z"/><path fill="#ffe60f" d="M1598 238h16v8h-16zM1598 246h8v8h-8z"/><path fill="#ffd20a" d="M1646 238h16v8h-16zM1638 246h16v8h-16zM1638 254h8v8h-8z"/><path fill="#ffbe05" d="M1702 238h8v8h-8zM1694 246h16v8h-16zM1686 254h16v8h-16z"/><path fill="#f5ff19" d="M1526 246h8v8h-8zM1518 254h8v8h-8z"/><path fill="#faff19" d="M1534 246h8v8h-8zM1526 254h16v8h-16z"/><path fill="#ffff19" d="M1542 246h8v8h-8zM1542 254h8v8h-8zM1534 262h8v8h-8z"/><path fill="#fff014" d="M1574 246h8v8h-8zM1566 254h8v8h-8z"/><path fill="#ffeb14" d="M1582 246h8v8h-8zM1574 254h16v8h-16zM1574 262h8v8h-8z"/><path fill="#ffe10f" d="M1606 246h8v8h-8zM1598 254h8v8h-8z"/><path fill="#ffdc0f" d="M1614 246h16v8h-16zM1606 254h16v8h-16zM1606 262h8v8h-8z"/><path fill="#ffcd0a" d="M1654 246h8v8h-8zM1646 254h16v8h-16zM1646 262h8v8h-8z"/><path fill="#ffc80a" d="M1662 246h8v8h-8zM1662 254h8v8h-8zM1654 262h8v8h-8z"/><path fill="#ffb905" d="M1710 246h16v8h-16zM1702 254h16v8h-16zM1694 262h16v8h-16z"/><path fill="#ebff1e" d="M1502 254h8v8h-8z"/><path fill="#f0ff1e" d="M1510 254h8v8h-8zM1502 262h8v8h-8zM1502 270h8v8h-8z"/><path fill="#fffa19" d="M1550 254h8v8h-8zM1542 262h8v8h-8z"/><path fill="#ffe614" d="M1590 254h8v8h-8zM1582 262h8v8h-8z"/><path fill="#ffd70f" d="M1622 254h8v8h-8zM1614 262h16v8h-16zM1614 270h8v8h-8z"/><path fill="#ffd20f" d="M1630 254h8v8h-8zM1630 262h8v8h-8zM1622 270h8v8h-8z"/><path fill="#ffc30a" d="M1670 254h16v8h-16zM1662 262h16v8h-16zM1662 270h8v8h-8z"/><path fill="#ffb405" d="M1718 254h8v8h-8zM1710 262h16v8h-16zM1702 270h16v8h-16z"/><path fill="#f5ff1e" d="M1510 262h16v8h-16zM1510 270h8v8h-8z"/><path fill="#faff1e" d="M1526 262h8v8h-8zM1518 270h8v8h-8z"/><path fill="#fff519" d="M1550 262h8v8h-8zM1542 270h16v8h-16z"/><path fill="#fff019" d="M1558 262h16v8h-16zM1558 270h8v8h-8z"/><path fill="#ffe114" d="M1590 262h16v8h-16zM1582 270h16v8h-16z"/><path fill="#ffcd0f" d="M1638 262h8v8h-8zM1630 270h16v8h-16z"/><path fill="#ffbe0a" d="M1678 262h16v8h-16zM1670 270h16v8h-16z"/><path fill="#ffff1e" d="M1526 270h8v8h-8z"/><path fill="#fffa1e" d="M1534 270h8v8h-8z"/><path fill="#ffeb19" d="M1566 270h8v8h-8z"/><path fill="#ffe619" d="M1574 270h8v8h-8z"/><path fill="#ffdc14" d="M1598 270h8v8h-8z"/><path fill="#ffd714" d="M1606 270h8v8h-8z"/><path fill="#ffc80f" d="M1646 270h16v8h-16z"/><path fill="#ffb90a" d="M1686 270h16v8h-16z"/><path fill="#ffaf05" d="M1718 270h8v8h-8z"/></g></g><rect x="1518.3" y="69.5" width="190.3" height="188.8" fill="none" stroke="#8a8a8a" stroke-width="2"/><rect x="1605.5" y="155.8" width="14.4" height="14.4" fill="none" stroke="#fff" stroke-width="2"/><circle cx="1642.3" cy="206.7" r="4.4" fill="#a0a020" stroke="#000" stroke-width="1.3"/>
<rect x="1006.0" y="635.0" width="527.0" height="16.0" fill="#2b2b2b"/>
<rect x="1006.0" y="651.0" width="527.0" height="15.5" fill="#161616"/>
<rect x="1006.0" y="635.0" width="17.0" height="31.5" fill="#000"/>
<rect x="1006.0" y="666.5" width="527.0" height="29.3" fill="#444444"/>
<rect x="1006.0" y="666.5" width="17.0" height="29.3" fill="url(#gLC)"/>
<text x="1028.0" y="688.8" font-size="18" textLength="71.5" lengthAdjust="spacingAndGlyphs" fill="#f0f0f0">x: CIE31</text>
<text x="1170.0" y="688.8" font-size="18" textLength="38.8" lengthAdjust="spacingAndGlyphs" fill="#f0f0f0">0,33</text>
<text x="1243.1" y="688.8" font-size="18" textLength="38.8" lengthAdjust="spacingAndGlyphs" fill="#f0f0f0">0,36</text>
<text x="1316.8" y="688.8" font-size="18" textLength="38.8" lengthAdjust="spacingAndGlyphs" fill="#f0f0f0">0,38</text>
<text x="1390.2" y="688.8" font-size="18" textLength="38.8" lengthAdjust="spacingAndGlyphs" fill="#f0f0f0">0,40</text>
<text x="1464.0" y="688.8" font-size="18" textLength="38.8" lengthAdjust="spacingAndGlyphs" fill="#f0f0f0">0,43</text>
<rect x="1006.0" y="695.8" width="527.0" height="29.3" fill="#808080"/>
<rect x="1006.0" y="695.8" width="17.0" height="29.3" fill="url(#gLC)"/>
<text x="1028.0" y="718.1" font-size="18" textLength="71.5" lengthAdjust="spacingAndGlyphs" fill="#f0f0f0">y: CIE31</text>
<text x="1170.0" y="718.1" font-size="18" textLength="38.8" lengthAdjust="spacingAndGlyphs" fill="#f0f0f0">0,36</text>
<text x="1243.1" y="718.1" font-size="18" textLength="38.8" lengthAdjust="spacingAndGlyphs" fill="#f0f0f0">0,40</text>
<text x="1316.8" y="718.1" font-size="18" textLength="38.8" lengthAdjust="spacingAndGlyphs" fill="#f0f0f0">0,43</text>
<text x="1390.2" y="718.1" font-size="18" textLength="38.8" lengthAdjust="spacingAndGlyphs" fill="#f0f0f0">0,46</text>
<text x="1464.0" y="718.1" font-size="18" textLength="38.8" lengthAdjust="spacingAndGlyphs" fill="#f0f0f0">0,49</text>
<rect x="1006.0" y="725.1" width="527.0" height="29.3" fill="#444444"/>
<rect x="1006.0" y="725.1" width="17.0" height="29.3" fill="url(#gLC)"/>
<text x="1028.0" y="747.4" font-size="18" textLength="12.5" lengthAdjust="spacingAndGlyphs" fill="#f0f0f0">Y</text>
<text x="1170.0" y="747.4" font-size="18" textLength="61.0" lengthAdjust="spacingAndGlyphs" fill="#f0f0f0">113,46</text>
<text x="1243.1" y="747.4" font-size="18" textLength="61.0" lengthAdjust="spacingAndGlyphs" fill="#f0f0f0">108,38</text>
<text x="1316.8" y="747.4" font-size="18" textLength="61.0" lengthAdjust="spacingAndGlyphs" fill="#f0f0f0">104,50</text>
<text x="1390.2" y="747.4" font-size="18" textLength="61.0" lengthAdjust="spacingAndGlyphs" fill="#f0f0f0">101,43</text>
<text x="1464.0" y="747.4" font-size="18" textLength="49.5" lengthAdjust="spacingAndGlyphs" fill="#f0f0f0">95,93</text>
<rect x="1006.0" y="754.4" width="527.0" height="29.3" fill="#808080"/>
<rect x="1006.0" y="754.4" width="17.0" height="29.3" fill="url(#gLC)"/>
<text x="1028.0" y="776.7" font-size="18" textLength="128.5" lengthAdjust="spacingAndGlyphs" fill="#f0f0f0">Target x:CIE31</text>
<text x="1170.0" y="776.7" font-size="18" textLength="38.8" lengthAdjust="spacingAndGlyphs" fill="#f0f0f0">0,33</text>
<text x="1243.1" y="776.7" font-size="18" textLength="38.8" lengthAdjust="spacingAndGlyphs" fill="#f0f0f0">0,36</text>
<text x="1316.8" y="776.7" font-size="18" textLength="38.8" lengthAdjust="spacingAndGlyphs" fill="#f0f0f0">0,38</text>
<text x="1390.2" y="776.7" font-size="18" textLength="38.8" lengthAdjust="spacingAndGlyphs" fill="#f0f0f0">0,40</text>
<text x="1464.0" y="776.7" font-size="18" textLength="38.8" lengthAdjust="spacingAndGlyphs" fill="#f0f0f0">0,42</text>
<rect x="1006.0" y="783.7" width="527.0" height="29.3" fill="#444444"/>
<rect x="1006.0" y="783.7" width="17.0" height="29.3" fill="url(#gLC)"/>
<text x="1028.0" y="806.0" font-size="18" textLength="129" lengthAdjust="spacingAndGlyphs" fill="#f0f0f0">Target y:CIE31</text>
<text x="1170.0" y="806.0" font-size="18" textLength="38.8" lengthAdjust="spacingAndGlyphs" fill="#f0f0f0">0,36</text>
<text x="1243.1" y="806.0" font-size="18" textLength="38.8" lengthAdjust="spacingAndGlyphs" fill="#f0f0f0">0,40</text>
<text x="1316.8" y="806.0" font-size="18" textLength="38.8" lengthAdjust="spacingAndGlyphs" fill="#f0f0f0">0,44</text>
<text x="1390.2" y="806.0" font-size="18" textLength="38.8" lengthAdjust="spacingAndGlyphs" fill="#f0f0f0">0,47</text>
<text x="1464.0" y="806.0" font-size="18" textLength="38.8" lengthAdjust="spacingAndGlyphs" fill="#f0f0f0">0,51</text>
<rect x="1006.0" y="813.0" width="527.0" height="29.3" fill="#808080"/>
<rect x="1006.0" y="813.0" width="17.0" height="29.3" fill="url(#gLC)"/>
<text x="1028.0" y="835.3" font-size="18" textLength="74.5" lengthAdjust="spacingAndGlyphs" fill="#f0f0f0">Target Y</text>
<text x="1170.0" y="835.3" font-size="18" textLength="61.0" lengthAdjust="spacingAndGlyphs" fill="#f0f0f0">120,72</text>
<text x="1243.1" y="835.3" font-size="18" textLength="61.0" lengthAdjust="spacingAndGlyphs" fill="#f0f0f0">118,60</text>
<text x="1316.8" y="835.3" font-size="18" textLength="61.0" lengthAdjust="spacingAndGlyphs" fill="#f0f0f0">116,98</text>
<text x="1390.2" y="835.3" font-size="18" textLength="61.0" lengthAdjust="spacingAndGlyphs" fill="#f0f0f0">115,70</text>
<text x="1464.0" y="835.3" font-size="18" textLength="61.0" lengthAdjust="spacingAndGlyphs" fill="#f0f0f0">114,46</text>
<text x="1170.3" y="658.2" font-size="18" textLength="36.5" lengthAdjust="spacingAndGlyphs" fill="#ffffff">20%</text>
<text x="1243.4" y="658.2" font-size="18" textLength="36.5" lengthAdjust="spacingAndGlyphs" fill="#ffffff">40%</text>
<text x="1317.1" y="658.2" font-size="18" textLength="36.5" lengthAdjust="spacingAndGlyphs" fill="#ffffff">60%</text>
<text x="1390.5" y="658.2" font-size="18" textLength="36.5" lengthAdjust="spacingAndGlyphs" fill="#ffffff">80%</text>
<text x="1464.3" y="658.2" font-size="18" textLength="47.5" lengthAdjust="spacingAndGlyphs" fill="#ffffff">100%</text>
<text x="16.1" y="673.5" font-size="28" textLength="224.5" lengthAdjust="spacingAndGlyphs" fill="#f0f0f0">Current Reading</text>
<text x="16.1" y="716.4" font-size="24" textLength="105" lengthAdjust="spacingAndGlyphs" fill="#f0f0f0">x: 0,4271</text>
<text x="16.1" y="757.8" font-size="24" textLength="105.5" lengthAdjust="spacingAndGlyphs" fill="#f0f0f0">y: 0,4939</text>
<text x="16.1" y="800.0" font-size="24" textLength="113.5" lengthAdjust="spacingAndGlyphs" fill="#f0f0f0">fL: 27,999</text>
<text x="16.1" y="842.2" font-size="24" textLength="162.5" lengthAdjust="spacingAndGlyphs" fill="#f0f0f0">cd/m²: 95,931</text>
</svg></body></html>
